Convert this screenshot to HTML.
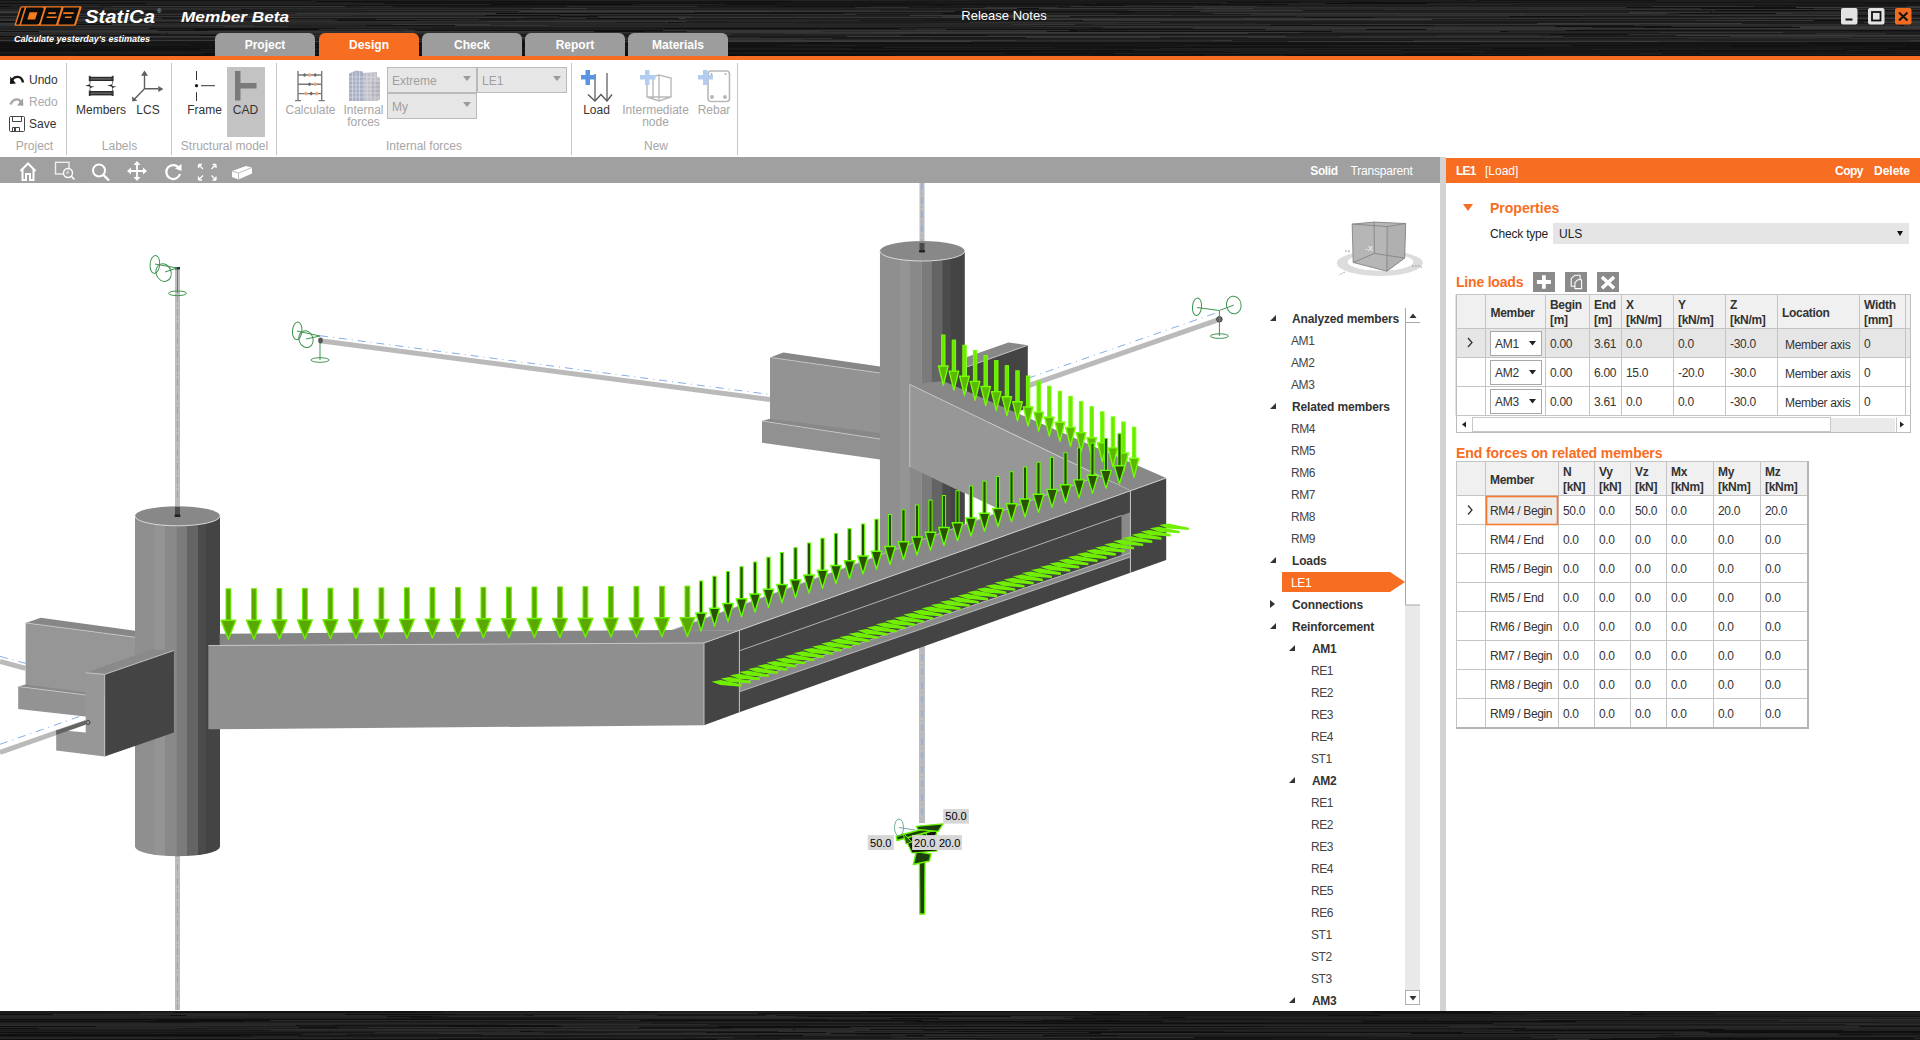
<!DOCTYPE html>
<html><head><meta charset="utf-8">
<style>
*{margin:0;padding:0;box-sizing:border-box}
html,body{width:1920px;height:1040px;overflow:hidden;background:#fff;font-family:"Liberation Sans",sans-serif;font-size:12px;color:#333}
.a{position:absolute}
#title{left:0;top:0;width:1920px;height:56px;overflow:hidden;background:#131313;
background-image:repeating-linear-gradient(180deg,#0d0d0d 0px,#1e1e1e 1px,#0a0a0a 2px,#262626 3px,#111 4px,#070707 5px,#1a1a1a 6px);}
#oline{left:0;top:56px;width:1920px;height:4px;background:#f76d22}
.tab{top:33px;height:23px;width:100px;border-radius:6px 6px 0 0;background:#9d9d9d}
#ribbon{left:0;top:60px;width:1920px;height:97px;background:#fff}
.sep{width:1px;background:#c6c6c6;top:63px;height:92px}
.combo{background:#e6e6e6;border:1px solid #b9b9b9}
#tbar{left:0;top:157px;width:1440px;height:26px;background:#a0a0a0}
#split{left:1440px;top:157px;width:6px;height:854px;background:#d3d3d3}
#rhead{left:1446px;top:158px;width:474px;height:25px;background:#f76d22}
#bottom{left:0;top:1011px;width:1920px;height:29px;overflow:hidden;background:#111;
background-image:repeating-linear-gradient(180deg,#0d0d0d 0px,#1e1e1e 1px,#0a0a0a 2px,#262626 3px,#111 4px,#070707 5px,#1a1a1a 6px);}

</style></head><body>
<div id="title" class="a" style="background:none"><svg class="a" style="left:0;top:0" width="1920" height="56" viewBox="0 0 1920 56" shape-rendering="crispEdges"><rect width="1920" height="56" fill="#101010"/><rect x="417" y="20" width="464" height="1" fill="rgb(27,27,27)"/><rect x="185" y="4" width="434" height="1" fill="rgb(16,16,16)"/><rect x="679" y="32" width="98" height="1" fill="rgb(29,29,29)"/><rect x="1512" y="27" width="131" height="1" fill="rgb(39,39,39)"/><rect x="1538" y="5" width="120" height="1" fill="rgb(18,18,18)"/><rect x="53" y="14" width="466" height="1" fill="rgb(27,27,27)"/><rect x="-10" y="14" width="196" height="1" fill="rgb(42,42,42)"/><rect x="390" y="26" width="180" height="1" fill="rgb(43,43,43)"/><rect x="540" y="35" width="165" height="1" fill="rgb(36,36,36)"/><rect x="199" y="23" width="124" height="1" fill="rgb(27,27,27)"/><rect x="643" y="39" width="568" height="1" fill="rgb(58,58,58)"/><rect x="1086" y="27" width="536" height="1" fill="rgb(53,53,53)"/><rect x="1027" y="23" width="314" height="1" fill="rgb(35,35,35)"/><rect x="799" y="44" width="143" height="1" fill="rgb(23,23,23)"/><rect x="1827" y="33" width="411" height="1" fill="rgb(52,52,52)"/><rect x="99" y="18" width="180" height="1" fill="rgb(56,56,56)"/><rect x="475" y="26" width="410" height="1" fill="rgb(33,33,33)"/><rect x="1527" y="31" width="100" height="1" fill="rgb(28,28,28)"/><rect x="1085" y="48" width="408" height="1" fill="rgb(25,25,25)"/><rect x="1834" y="38" width="527" height="1" fill="rgb(28,28,28)"/><rect x="183" y="53" width="336" height="1" fill="rgb(29,29,29)"/><rect x="66" y="44" width="122" height="1" fill="rgb(23,23,23)"/><rect x="1625" y="41" width="351" height="1" fill="rgb(48,48,48)"/><rect x="1221" y="42" width="83" height="1" fill="rgb(29,29,29)"/><rect x="488" y="22" width="179" height="1" fill="rgb(55,55,55)"/><rect x="693" y="3" width="354" height="1" fill="rgb(19,19,19)"/><rect x="814" y="47" width="467" height="1" fill="rgb(26,26,26)"/><rect x="1833" y="55" width="142" height="1" fill="rgb(18,18,18)"/><rect x="1445" y="28" width="344" height="1" fill="rgb(32,32,32)"/><rect x="1563" y="52" width="345" height="1" fill="rgb(27,27,27)"/><rect x="1358" y="22" width="296" height="1" fill="rgb(33,33,33)"/><rect x="521" y="5" width="214" height="1" fill="rgb(22,22,22)"/><rect x="755" y="42" width="72" height="1" fill="rgb(30,30,30)"/><rect x="546" y="53" width="329" height="1" fill="rgb(23,23,23)"/><rect x="396" y="0" width="489" height="1" fill="rgb(34,34,34)"/><rect x="1105" y="23" width="188" height="1" fill="rgb(56,56,56)"/><rect x="21" y="39" width="527" height="1" fill="rgb(49,49,49)"/><rect x="1434" y="25" width="463" height="1" fill="rgb(30,30,30)"/><rect x="1440" y="30" width="123" height="1" fill="rgb(36,36,36)"/><rect x="655" y="4" width="511" height="1" fill="rgb(20,20,20)"/><rect x="1192" y="7" width="113" height="1" fill="rgb(30,30,30)"/><rect x="419" y="0" width="163" height="1" fill="rgb(28,28,28)"/><rect x="-96" y="39" width="132" height="1" fill="rgb(37,37,37)"/><rect x="1341" y="39" width="212" height="1" fill="rgb(40,40,40)"/><rect x="1291" y="22" width="545" height="1" fill="rgb(31,31,31)"/><rect x="1799" y="7" width="537" height="1" fill="rgb(54,54,54)"/><rect x="1077" y="30" width="147" height="1" fill="rgb(33,33,33)"/><rect x="1203" y="6" width="331" height="1" fill="rgb(54,54,54)"/><rect x="461" y="53" width="588" height="1" fill="rgb(13,13,13)"/><rect x="1281" y="13" width="210" height="1" fill="rgb(58,58,58)"/><rect x="1020" y="1" width="153" height="1" fill="rgb(24,24,24)"/><rect x="1302" y="33" width="231" height="1" fill="rgb(46,46,46)"/><rect x="712" y="49" width="574" height="1" fill="rgb(24,24,24)"/><rect x="713" y="40" width="259" height="1" fill="rgb(39,39,39)"/><rect x="1441" y="52" width="292" height="1" fill="rgb(19,19,19)"/><rect x="1818" y="33" width="424" height="1" fill="rgb(25,25,25)"/><rect x="944" y="1" width="543" height="1" fill="rgb(24,24,24)"/><rect x="1210" y="12" width="517" height="1" fill="rgb(46,46,46)"/><rect x="129" y="23" width="285" height="1" fill="rgb(30,30,30)"/><rect x="1725" y="14" width="261" height="1" fill="rgb(45,45,45)"/><rect x="1776" y="13" width="61" height="1" fill="rgb(54,54,54)"/><rect x="1209" y="41" width="146" height="1" fill="rgb(31,31,31)"/><rect x="616" y="24" width="549" height="1" fill="rgb(35,35,35)"/><rect x="1161" y="27" width="148" height="1" fill="rgb(49,49,49)"/><rect x="1444" y="29" width="146" height="1" fill="rgb(34,34,34)"/><rect x="320" y="10" width="88" height="1" fill="rgb(33,33,33)"/><rect x="1706" y="37" width="209" height="1" fill="rgb(54,54,54)"/><rect x="1235" y="42" width="219" height="1" fill="rgb(17,17,17)"/><rect x="-142" y="1" width="165" height="1" fill="rgb(34,34,34)"/><rect x="370" y="47" width="504" height="1" fill="rgb(19,19,19)"/><rect x="664" y="52" width="88" height="1" fill="rgb(22,22,22)"/><rect x="999" y="13" width="573" height="1" fill="rgb(39,39,39)"/><rect x="1135" y="48" width="325" height="1" fill="rgb(31,31,31)"/><rect x="336" y="26" width="122" height="1" fill="rgb(46,46,46)"/><rect x="1916" y="29" width="490" height="1" fill="rgb(56,56,56)"/><rect x="421" y="8" width="596" height="1" fill="rgb(56,56,56)"/><rect x="1602" y="1" width="247" height="1" fill="rgb(14,14,14)"/><rect x="413" y="49" width="236" height="1" fill="rgb(18,18,18)"/><rect x="292" y="30" width="123" height="1" fill="rgb(44,44,44)"/><rect x="1776" y="43" width="168" height="1" fill="rgb(14,14,14)"/><rect x="583" y="15" width="343" height="1" fill="rgb(26,26,26)"/><rect x="200" y="49" width="579" height="1" fill="rgb(28,28,28)"/><rect x="-86" y="35" width="124" height="1" fill="rgb(52,52,52)"/><rect x="1870" y="20" width="584" height="1" fill="rgb(36,36,36)"/><rect x="935" y="44" width="523" height="1" fill="rgb(30,30,30)"/><rect x="1758" y="34" width="579" height="1" fill="rgb(39,39,39)"/><rect x="863" y="44" width="267" height="1" fill="rgb(28,28,28)"/><rect x="1506" y="8" width="184" height="1" fill="rgb(49,49,49)"/><rect x="1094" y="28" width="134" height="1" fill="rgb(39,39,39)"/><rect x="99" y="27" width="277" height="1" fill="rgb(43,43,43)"/><rect x="301" y="50" width="218" height="1" fill="rgb(25,25,25)"/><rect x="836" y="9" width="200" height="1" fill="rgb(53,53,53)"/><rect x="185" y="14" width="467" height="1" fill="rgb(55,55,55)"/><rect x="716" y="10" width="225" height="1" fill="rgb(51,51,51)"/><rect x="1454" y="32" width="407" height="1" fill="rgb(50,50,50)"/><rect x="1260" y="12" width="386" height="1" fill="rgb(29,29,29)"/><rect x="1298" y="46" width="79" height="1" fill="rgb(24,24,24)"/><rect x="1678" y="35" width="511" height="1" fill="rgb(25,25,25)"/><rect x="1157" y="24" width="589" height="1" fill="rgb(42,42,42)"/><rect x="63" y="32" width="175" height="1" fill="rgb(38,38,38)"/><rect x="144" y="6" width="331" height="1" fill="rgb(41,41,41)"/><rect x="543" y="2" width="336" height="1" fill="rgb(19,19,19)"/><rect x="1529" y="52" width="324" height="1" fill="rgb(26,26,26)"/><rect x="1908" y="9" width="566" height="1" fill="rgb(44,44,44)"/><rect x="943" y="5" width="118" height="1" fill="rgb(21,21,21)"/><rect x="96" y="27" width="335" height="1" fill="rgb(25,25,25)"/><rect x="162" y="40" width="326" height="1" fill="rgb(29,29,29)"/><rect x="710" y="38" width="128" height="1" fill="rgb(40,40,40)"/><rect x="298" y="55" width="524" height="1" fill="rgb(13,13,13)"/><rect x="1511" y="21" width="334" height="1" fill="rgb(32,32,32)"/><rect x="776" y="2" width="172" height="1" fill="rgb(20,20,20)"/><rect x="6" y="16" width="245" height="1" fill="rgb(36,36,36)"/><rect x="1049" y="19" width="270" height="1" fill="rgb(42,42,42)"/><rect x="1848" y="28" width="242" height="1" fill="rgb(41,41,41)"/><rect x="-126" y="22" width="316" height="1" fill="rgb(26,26,26)"/><rect x="-125" y="0" width="577" height="1" fill="rgb(21,21,21)"/><rect x="1744" y="32" width="311" height="1" fill="rgb(52,52,52)"/><rect x="1570" y="6" width="566" height="1" fill="rgb(58,58,58)"/><rect x="1410" y="53" width="578" height="1" fill="rgb(23,23,23)"/><rect x="681" y="44" width="295" height="1" fill="rgb(24,24,24)"/><rect x="372" y="12" width="474" height="1" fill="rgb(46,46,46)"/><rect x="331" y="3" width="74" height="1" fill="rgb(16,16,16)"/><rect x="846" y="40" width="501" height="1" fill="rgb(34,34,34)"/><rect x="146" y="3" width="450" height="1" fill="rgb(33,33,33)"/><rect x="954" y="42" width="308" height="1" fill="rgb(23,23,23)"/><rect x="1681" y="2" width="249" height="1" fill="rgb(20,20,20)"/><rect x="1626" y="17" width="63" height="1" fill="rgb(40,40,40)"/><rect x="1147" y="23" width="391" height="1" fill="rgb(39,39,39)"/><rect x="1067" y="2" width="283" height="1" fill="rgb(27,27,27)"/><rect x="-196" y="11" width="403" height="1" fill="rgb(48,48,48)"/><rect x="1744" y="5" width="345" height="1" fill="rgb(33,33,33)"/><rect x="623" y="41" width="314" height="1" fill="rgb(56,56,56)"/><rect x="-180" y="49" width="153" height="1" fill="rgb(22,22,22)"/><rect x="167" y="52" width="207" height="1" fill="rgb(26,26,26)"/><rect x="-30" y="37" width="463" height="1" fill="rgb(25,25,25)"/><rect x="1046" y="19" width="298" height="1" fill="rgb(29,29,29)"/><rect x="435" y="37" width="458" height="1" fill="rgb(44,44,44)"/><rect x="1824" y="46" width="213" height="1" fill="rgb(23,23,23)"/><rect x="392" y="46" width="104" height="1" fill="rgb(30,30,30)"/><rect x="1558" y="40" width="577" height="1" fill="rgb(32,32,32)"/><rect x="1865" y="33" width="76" height="1" fill="rgb(38,38,38)"/><rect x="-73" y="5" width="102" height="1" fill="rgb(19,19,19)"/><rect x="1277" y="40" width="167" height="1" fill="rgb(48,48,48)"/><rect x="1648" y="53" width="111" height="1" fill="rgb(13,13,13)"/><rect x="801" y="40" width="561" height="1" fill="rgb(40,40,40)"/><rect x="1671" y="0" width="131" height="1" fill="rgb(33,33,33)"/><rect x="176" y="34" width="598" height="1" fill="rgb(28,28,28)"/><rect x="1740" y="47" width="318" height="1" fill="rgb(15,15,15)"/><rect x="887" y="54" width="300" height="1" fill="rgb(20,20,20)"/><rect x="1685" y="14" width="565" height="1" fill="rgb(48,48,48)"/><rect x="1762" y="4" width="354" height="1" fill="rgb(15,15,15)"/><rect x="612" y="39" width="139" height="1" fill="rgb(33,33,33)"/><rect x="840" y="21" width="371" height="1" fill="rgb(32,32,32)"/><rect x="1775" y="0" width="122" height="1" fill="rgb(33,33,33)"/><rect x="207" y="17" width="282" height="1" fill="rgb(55,55,55)"/><rect x="1915" y="18" width="352" height="1" fill="rgb(53,53,53)"/><rect x="1710" y="29" width="181" height="1" fill="rgb(36,36,36)"/><rect x="151" y="19" width="544" height="1" fill="rgb(25,25,25)"/><rect x="1679" y="18" width="138" height="1" fill="rgb(56,56,56)"/><rect x="900" y="28" width="456" height="1" fill="rgb(37,37,37)"/><rect x="105" y="13" width="152" height="1" fill="rgb(33,33,33)"/><rect x="872" y="47" width="428" height="1" fill="rgb(17,17,17)"/><rect x="1883" y="38" width="346" height="1" fill="rgb(31,31,31)"/><rect x="1295" y="45" width="296" height="1" fill="rgb(30,30,30)"/><rect x="1414" y="31" width="85" height="1" fill="rgb(34,34,34)"/><rect x="1813" y="0" width="521" height="1" fill="rgb(29,29,29)"/><rect x="376" y="19" width="486" height="1" fill="rgb(46,46,46)"/><rect x="1094" y="24" width="183" height="1" fill="rgb(45,45,45)"/><rect x="1129" y="0" width="406" height="1" fill="rgb(29,29,29)"/><rect x="601" y="7" width="72" height="1" fill="rgb(42,42,42)"/><rect x="1324" y="16" width="126" height="1" fill="rgb(49,49,49)"/><rect x="112" y="24" width="429" height="1" fill="rgb(51,51,51)"/><rect x="927" y="48" width="109" height="1" fill="rgb(22,22,22)"/><rect x="11" y="6" width="352" height="1" fill="rgb(33,33,33)"/><rect x="888" y="15" width="506" height="1" fill="rgb(56,56,56)"/><rect x="577" y="20" width="442" height="1" fill="rgb(51,51,51)"/><rect x="1438" y="1" width="268" height="1" fill="rgb(17,17,17)"/><rect x="1482" y="3" width="521" height="1" fill="rgb(19,19,19)"/><rect x="972" y="41" width="557" height="1" fill="rgb(27,27,27)"/><rect x="321" y="35" width="234" height="1" fill="rgb(54,54,54)"/><rect x="1207" y="26" width="348" height="1" fill="rgb(43,43,43)"/><rect x="865" y="16" width="475" height="1" fill="rgb(39,39,39)"/><rect x="1779" y="19" width="463" height="1" fill="rgb(31,31,31)"/><rect x="462" y="10" width="136" height="1" fill="rgb(37,37,37)"/><rect x="1836" y="32" width="285" height="1" fill="rgb(52,52,52)"/><rect x="1643" y="21" width="497" height="1" fill="rgb(32,32,32)"/><rect x="588" y="35" width="309" height="1" fill="rgb(29,29,29)"/><rect x="1200" y="11" width="153" height="1" fill="rgb(44,44,44)"/><rect x="1308" y="15" width="324" height="1" fill="rgb(36,36,36)"/><rect x="1490" y="1" width="452" height="1" fill="rgb(30,30,30)"/><rect x="660" y="47" width="445" height="1" fill="rgb(22,22,22)"/><rect x="54" y="21" width="570" height="1" fill="rgb(41,41,41)"/><rect x="1275" y="36" width="188" height="1" fill="rgb(56,56,56)"/><rect x="684" y="33" width="154" height="1" fill="rgb(41,41,41)"/><rect x="1375" y="15" width="469" height="1" fill="rgb(52,52,52)"/><rect x="1078" y="27" width="82" height="1" fill="rgb(32,32,32)"/><rect x="1541" y="2" width="544" height="1" fill="rgb(33,33,33)"/><rect x="99" y="0" width="460" height="1" fill="rgb(34,34,34)"/><rect x="1717" y="54" width="519" height="1" fill="rgb(21,21,21)"/><rect x="246" y="50" width="289" height="1" fill="rgb(18,18,18)"/><rect x="246" y="9" width="528" height="1" fill="rgb(29,29,29)"/><rect x="-39" y="35" width="61" height="1" fill="rgb(32,32,32)"/><rect x="-47" y="14" width="371" height="1" fill="rgb(32,32,32)"/><rect x="831" y="40" width="600" height="1" fill="rgb(51,51,51)"/><rect x="259" y="44" width="161" height="1" fill="rgb(15,15,15)"/><rect x="585" y="19" width="457" height="1" fill="rgb(40,40,40)"/><rect x="-196" y="14" width="70" height="1" fill="rgb(58,58,58)"/><rect x="1686" y="19" width="345" height="1" fill="rgb(44,44,44)"/><rect x="792" y="41" width="546" height="1" fill="rgb(57,57,57)"/><rect x="811" y="15" width="89" height="1" fill="rgb(50,50,50)"/><rect x="1059" y="45" width="116" height="1" fill="rgb(13,13,13)"/><rect x="1841" y="12" width="490" height="1" fill="rgb(29,29,29)"/><rect x="733" y="16" width="494" height="1" fill="rgb(47,47,47)"/><rect x="1819" y="14" width="94" height="1" fill="rgb(45,45,45)"/><rect x="1522" y="45" width="431" height="1" fill="rgb(26,26,26)"/><rect x="-173" y="12" width="359" height="1" fill="rgb(56,56,56)"/><rect x="640" y="4" width="567" height="1" fill="rgb(21,21,21)"/><rect x="594" y="19" width="296" height="1" fill="rgb(53,53,53)"/><rect x="885" y="14" width="362" height="1" fill="rgb(30,30,30)"/><rect x="1830" y="39" width="251" height="1" fill="rgb(38,38,38)"/><rect x="1508" y="31" width="117" height="1" fill="rgb(33,33,33)"/><rect x="22" y="25" width="278" height="1" fill="rgb(25,25,25)"/><rect x="381" y="38" width="485" height="1" fill="rgb(27,27,27)"/><rect x="46" y="45" width="248" height="1" fill="rgb(26,26,26)"/><rect x="1086" y="28" width="175" height="1" fill="rgb(29,29,29)"/><rect x="1148" y="10" width="255" height="1" fill="rgb(35,35,35)"/><rect x="1715" y="41" width="92" height="1" fill="rgb(43,43,43)"/><rect x="1350" y="42" width="442" height="1" fill="rgb(24,24,24)"/><rect x="493" y="28" width="171" height="1" fill="rgb(24,24,24)"/><rect x="946" y="5" width="142" height="1" fill="rgb(27,27,27)"/><rect x="306" y="26" width="272" height="1" fill="rgb(48,48,48)"/><rect x="1064" y="22" width="502" height="1" fill="rgb(29,29,29)"/><rect x="1739" y="3" width="260" height="1" fill="rgb(28,28,28)"/><rect x="1628" y="34" width="257" height="1" fill="rgb(44,44,44)"/><rect x="1743" y="23" width="91" height="1" fill="rgb(50,50,50)"/><rect x="1457" y="15" width="101" height="1" fill="rgb(48,48,48)"/><rect x="1700" y="2" width="124" height="1" fill="rgb(16,16,16)"/><rect x="598" y="16" width="124" height="1" fill="rgb(45,45,45)"/><rect x="915" y="23" width="403" height="1" fill="rgb(26,26,26)"/><rect x="1096" y="16" width="342" height="1" fill="rgb(43,43,43)"/><rect x="67" y="0" width="84" height="1" fill="rgb(22,22,22)"/><rect x="1746" y="6" width="536" height="1" fill="rgb(48,48,48)"/><rect x="828" y="50" width="500" height="1" fill="rgb(30,30,30)"/><rect x="1833" y="8" width="247" height="1" fill="rgb(24,24,24)"/><rect x="1042" y="51" width="214" height="1" fill="rgb(21,21,21)"/><rect x="1108" y="20" width="531" height="1" fill="rgb(47,47,47)"/><rect x="123" y="50" width="584" height="1" fill="rgb(19,19,19)"/><rect x="455" y="25" width="313" height="1" fill="rgb(50,50,50)"/><rect x="-62" y="4" width="553" height="1" fill="rgb(34,34,34)"/><rect x="458" y="20" width="496" height="1" fill="rgb(30,30,30)"/><rect x="884" y="4" width="146" height="1" fill="rgb(22,22,22)"/><rect x="1524" y="6" width="570" height="1" fill="rgb(52,52,52)"/><rect x="759" y="11" width="196" height="1" fill="rgb(50,50,50)"/><rect x="762" y="29" width="184" height="1" fill="rgb(42,42,42)"/><rect x="944" y="18" width="334" height="1" fill="rgb(47,47,47)"/><rect x="866" y="16" width="263" height="1" fill="rgb(52,52,52)"/><rect x="560" y="15" width="311" height="1" fill="rgb(39,39,39)"/><rect x="952" y="9" width="252" height="1" fill="rgb(44,44,44)"/><rect x="1422" y="4" width="317" height="1" fill="rgb(23,23,23)"/><rect x="747" y="32" width="162" height="1" fill="rgb(53,53,53)"/><rect x="219" y="2" width="64" height="1" fill="rgb(32,32,32)"/><rect x="746" y="52" width="519" height="1" fill="rgb(25,25,25)"/><rect x="1002" y="2" width="298" height="1" fill="rgb(18,18,18)"/><rect x="576" y="3" width="258" height="1" fill="rgb(16,16,16)"/><rect x="1899" y="23" width="242" height="1" fill="rgb(52,52,52)"/><rect x="864" y="38" width="66" height="1" fill="rgb(30,30,30)"/><rect x="1232" y="40" width="282" height="1" fill="rgb(26,26,26)"/><rect x="1192" y="23" width="204" height="1" fill="rgb(26,26,26)"/><rect x="844" y="13" width="99" height="1" fill="rgb(37,37,37)"/><rect x="-154" y="52" width="395" height="1" fill="rgb(27,27,27)"/><rect x="1322" y="43" width="249" height="1" fill="rgb(23,23,23)"/><rect x="633" y="4" width="92" height="1" fill="rgb(33,33,33)"/><rect x="1780" y="35" width="124" height="1" fill="rgb(50,50,50)"/><rect x="1419" y="6" width="218" height="1" fill="rgb(58,58,58)"/><rect x="470" y="5" width="467" height="1" fill="rgb(24,24,24)"/><rect x="960" y="26" width="374" height="1" fill="rgb(50,50,50)"/><rect x="1079" y="3" width="425" height="1" fill="rgb(30,30,30)"/><rect x="-126" y="26" width="432" height="1" fill="rgb(36,36,36)"/><rect x="1458" y="25" width="268" height="1" fill="rgb(24,24,24)"/><rect x="441" y="27" width="493" height="1" fill="rgb(31,31,31)"/><rect x="170" y="52" width="475" height="1" fill="rgb(25,25,25)"/><rect x="465" y="29" width="193" height="1" fill="rgb(24,24,24)"/><rect x="383" y="3" width="466" height="1" fill="rgb(17,17,17)"/><rect x="1318" y="36" width="576" height="1" fill="rgb(34,34,34)"/><rect x="1225" y="9" width="350" height="1" fill="rgb(34,34,34)"/><rect x="503" y="33" width="128" height="1" fill="rgb(30,30,30)"/><rect x="1809" y="24" width="262" height="1" fill="rgb(43,43,43)"/><rect x="-22" y="8" width="554" height="1" fill="rgb(44,44,44)"/><rect x="1388" y="3" width="148" height="1" fill="rgb(20,20,20)"/><rect x="709" y="40" width="474" height="1" fill="rgb(36,36,36)"/><rect x="1737" y="53" width="247" height="1" fill="rgb(20,20,20)"/><rect x="1437" y="2" width="590" height="1" fill="rgb(20,20,20)"/><rect x="1271" y="24" width="186" height="1" fill="rgb(33,33,33)"/><rect x="588" y="15" width="102" height="1" fill="rgb(26,26,26)"/><rect x="1127" y="42" width="180" height="1" fill="rgb(26,26,26)"/><rect x="1666" y="38" width="373" height="1" fill="rgb(50,50,50)"/><rect x="820" y="19" width="495" height="1" fill="rgb(48,48,48)"/><rect x="1305" y="42" width="517" height="1" fill="rgb(30,30,30)"/><rect x="532" y="28" width="83" height="1" fill="rgb(24,24,24)"/><rect x="1804" y="39" width="536" height="1" fill="rgb(39,39,39)"/><rect x="1677" y="28" width="243" height="1" fill="rgb(54,54,54)"/><rect x="238" y="25" width="128" height="1" fill="rgb(32,32,32)"/><rect x="1563" y="22" width="434" height="1" fill="rgb(29,29,29)"/><rect x="1610" y="51" width="576" height="1" fill="rgb(30,30,30)"/><rect x="-34" y="42" width="101" height="1" fill="rgb(17,17,17)"/><rect x="1085" y="5" width="583" height="1" fill="rgb(17,17,17)"/><rect x="1864" y="3" width="446" height="1" fill="rgb(19,19,19)"/><rect x="71" y="1" width="172" height="1" fill="rgb(21,21,21)"/><rect x="1814" y="8" width="354" height="1" fill="rgb(34,34,34)"/><rect x="705" y="43" width="127" height="1" fill="rgb(25,25,25)"/><rect x="833" y="39" width="222" height="1" fill="rgb(44,44,44)"/><rect x="926" y="39" width="527" height="1" fill="rgb(33,33,33)"/><rect x="1857" y="16" width="551" height="1" fill="rgb(37,37,37)"/><rect x="876" y="37" width="578" height="1" fill="rgb(39,39,39)"/><rect x="1324" y="20" width="97" height="1" fill="rgb(36,36,36)"/><rect x="1452" y="11" width="225" height="1" fill="rgb(41,41,41)"/><rect x="1142" y="43" width="445" height="1" fill="rgb(18,18,18)"/><rect x="882" y="50" width="177" height="1" fill="rgb(31,31,31)"/><rect x="1273" y="3" width="523" height="1" fill="rgb(34,34,34)"/><rect x="228" y="37" width="318" height="1" fill="rgb(58,58,58)"/><rect x="1414" y="40" width="440" height="1" fill="rgb(40,40,40)"/><rect x="1311" y="24" width="209" height="1" fill="rgb(47,47,47)"/><rect x="133" y="21" width="512" height="1" fill="rgb(38,38,38)"/><rect x="-3" y="11" width="363" height="1" fill="rgb(57,57,57)"/><rect x="1070" y="16" width="380" height="1" fill="rgb(24,24,24)"/><rect x="-62" y="47" width="286" height="1" fill="rgb(18,18,18)"/><rect x="1570" y="18" width="487" height="1" fill="rgb(56,56,56)"/><rect x="-5" y="23" width="195" height="1" fill="rgb(55,55,55)"/><rect x="-14" y="14" width="82" height="1" fill="rgb(27,27,27)"/><rect x="1253" y="0" width="371" height="1" fill="rgb(18,18,18)"/><rect x="1262" y="33" width="289" height="1" fill="rgb(50,50,50)"/><rect x="1033" y="37" width="196" height="1" fill="rgb(37,37,37)"/><rect x="1745" y="23" width="222" height="1" fill="rgb(32,32,32)"/><rect x="797" y="0" width="212" height="1" fill="rgb(31,31,31)"/><rect x="60" y="6" width="208" height="1" fill="rgb(41,41,41)"/><rect x="882" y="25" width="71" height="1" fill="rgb(27,27,27)"/><rect x="1234" y="41" width="514" height="1" fill="rgb(57,57,57)"/><rect x="1818" y="46" width="314" height="1" fill="rgb(18,18,18)"/><rect x="-20" y="0" width="123" height="1" fill="rgb(34,34,34)"/><rect x="1462" y="1" width="250" height="1" fill="rgb(23,23,23)"/><rect x="39" y="10" width="167" height="1" fill="rgb(24,24,24)"/><rect x="607" y="39" width="205" height="1" fill="rgb(50,50,50)"/><rect x="1876" y="12" width="485" height="1" fill="rgb(35,35,35)"/><rect x="1067" y="32" width="125" height="1" fill="rgb(43,43,43)"/><rect x="-2" y="40" width="549" height="1" fill="rgb(58,58,58)"/><rect x="1336" y="0" width="507" height="1" fill="rgb(31,31,31)"/><rect x="1653" y="5" width="239" height="1" fill="rgb(22,22,22)"/><rect x="870" y="6" width="297" height="1" fill="rgb(26,26,26)"/><rect x="1174" y="7" width="329" height="1" fill="rgb(27,27,27)"/><rect x="1586" y="17" width="595" height="1" fill="rgb(40,40,40)"/><rect x="688" y="18" width="147" height="1" fill="rgb(56,56,56)"/><rect x="495" y="0" width="326" height="1" fill="rgb(23,23,23)"/><rect x="630" y="53" width="223" height="1" fill="rgb(24,24,24)"/><rect x="1392" y="12" width="396" height="1" fill="rgb(39,39,39)"/><rect x="1723" y="24" width="543" height="1" fill="rgb(57,57,57)"/><rect x="-174" y="44" width="87" height="1" fill="rgb(28,28,28)"/><rect x="757" y="46" width="375" height="1" fill="rgb(20,20,20)"/><rect x="118" y="25" width="235" height="1" fill="rgb(33,33,33)"/><rect x="-90" y="2" width="174" height="1" fill="rgb(18,18,18)"/><rect x="462" y="39" width="413" height="1" fill="rgb(33,33,33)"/><rect x="-83" y="44" width="91" height="1" fill="rgb(14,14,14)"/><rect x="-26" y="8" width="129" height="1" fill="rgb(26,26,26)"/><rect x="1288" y="4" width="264" height="1" fill="rgb(34,34,34)"/><rect x="70" y="42" width="453" height="1" fill="rgb(16,16,16)"/><rect x="642" y="15" width="268" height="1" fill="rgb(31,31,31)"/><rect x="-59" y="2" width="149" height="1" fill="rgb(25,25,25)"/><rect x="209" y="30" width="195" height="1" fill="rgb(30,30,30)"/><rect x="639" y="50" width="361" height="1" fill="rgb(24,24,24)"/><rect x="1535" y="21" width="327" height="1" fill="rgb(25,25,25)"/><rect x="851" y="22" width="349" height="1" fill="rgb(27,27,27)"/><rect x="1307" y="45" width="388" height="1" fill="rgb(30,30,30)"/><rect x="978" y="30" width="91" height="1" fill="rgb(50,50,50)"/><rect x="1587" y="1" width="591" height="1" fill="rgb(18,18,18)"/><rect x="1720" y="22" width="109" height="1" fill="rgb(58,58,58)"/><rect x="687" y="36" width="153" height="1" fill="rgb(42,42,42)"/><rect x="1586" y="10" width="61" height="1" fill="rgb(57,57,57)"/><rect x="981" y="12" width="115" height="1" fill="rgb(24,24,24)"/><rect x="1810" y="22" width="157" height="1" fill="rgb(55,55,55)"/><rect x="555" y="44" width="566" height="1" fill="rgb(25,25,25)"/><rect x="1910" y="53" width="326" height="1" fill="rgb(18,18,18)"/><rect x="679" y="18" width="297" height="1" fill="rgb(55,55,55)"/><rect x="250" y="10" width="142" height="1" fill="rgb(55,55,55)"/><rect x="228" y="50" width="394" height="1" fill="rgb(25,25,25)"/><rect x="1443" y="6" width="464" height="1" fill="rgb(29,29,29)"/><rect x="-97" y="27" width="440" height="1" fill="rgb(37,37,37)"/><rect x="878" y="19" width="498" height="1" fill="rgb(58,58,58)"/><rect x="500" y="32" width="448" height="1" fill="rgb(38,38,38)"/><rect x="319" y="29" width="94" height="1" fill="rgb(46,46,46)"/><rect x="1138" y="37" width="594" height="1" fill="rgb(33,33,33)"/><rect x="1644" y="55" width="391" height="1" fill="rgb(18,18,18)"/><rect x="1597" y="29" width="323" height="1" fill="rgb(38,38,38)"/><rect x="1168" y="8" width="533" height="1" fill="rgb(39,39,39)"/><rect x="584" y="32" width="333" height="1" fill="rgb(43,43,43)"/><rect x="433" y="48" width="219" height="1" fill="rgb(21,21,21)"/><rect x="1137" y="46" width="594" height="1" fill="rgb(25,25,25)"/><rect x="767" y="10" width="395" height="1" fill="rgb(36,36,36)"/><rect x="216" y="16" width="228" height="1" fill="rgb(30,30,30)"/><rect x="1373" y="12" width="214" height="1" fill="rgb(33,33,33)"/><rect x="1037" y="50" width="364" height="1" fill="rgb(28,28,28)"/><rect x="603" y="17" width="171" height="1" fill="rgb(30,30,30)"/><rect x="645" y="17" width="457" height="1" fill="rgb(53,53,53)"/><rect x="-149" y="2" width="468" height="1" fill="rgb(30,30,30)"/><rect x="711" y="44" width="572" height="1" fill="rgb(23,23,23)"/><rect x="-110" y="29" width="205" height="1" fill="rgb(40,40,40)"/><rect x="1457" y="38" width="65" height="1" fill="rgb(39,39,39)"/><rect x="1561" y="54" width="491" height="1" fill="rgb(20,20,20)"/><rect x="736" y="42" width="245" height="1" fill="rgb(17,17,17)"/><rect x="1571" y="29" width="380" height="1" fill="rgb(40,40,40)"/><rect x="200" y="40" width="489" height="1" fill="rgb(39,39,39)"/><rect x="1438" y="50" width="220" height="1" fill="rgb(22,22,22)"/><rect x="1534" y="54" width="554" height="1" fill="rgb(29,29,29)"/><rect x="1476" y="1" width="590" height="1" fill="rgb(21,21,21)"/><rect x="1143" y="41" width="70" height="1" fill="rgb(48,48,48)"/><rect x="1806" y="53" width="168" height="1" fill="rgb(14,14,14)"/><rect x="692" y="16" width="224" height="1" fill="rgb(36,36,36)"/><rect x="1226" y="33" width="163" height="1" fill="rgb(53,53,53)"/><rect x="639" y="34" width="547" height="1" fill="rgb(56,56,56)"/><rect x="1315" y="1" width="594" height="1" fill="rgb(27,27,27)"/><rect x="1671" y="26" width="275" height="1" fill="rgb(35,35,35)"/><rect x="1904" y="25" width="185" height="1" fill="rgb(46,46,46)"/><rect x="31" y="40" width="318" height="1" fill="rgb(41,41,41)"/><rect x="1437" y="24" width="122" height="1" fill="rgb(24,24,24)"/><rect x="1514" y="4" width="490" height="1" fill="rgb(27,27,27)"/><rect x="886" y="37" width="171" height="1" fill="rgb(38,38,38)"/><rect x="1440" y="19" width="599" height="1" fill="rgb(38,38,38)"/><rect x="1405" y="51" width="533" height="1" fill="rgb(20,20,20)"/><rect x="329" y="10" width="130" height="1" fill="rgb(36,36,36)"/><rect x="725" y="30" width="209" height="1" fill="rgb(46,46,46)"/><rect x="1492" y="42" width="539" height="1" fill="rgb(23,23,23)"/><rect x="312" y="48" width="540" height="1" fill="rgb(25,25,25)"/><rect x="743" y="50" width="333" height="1" fill="rgb(26,26,26)"/><rect x="838" y="43" width="496" height="1" fill="rgb(19,19,19)"/><rect x="-189" y="30" width="347" height="1" fill="rgb(46,46,46)"/><rect x="1036" y="15" width="388" height="1" fill="rgb(54,54,54)"/><rect x="1555" y="31" width="147" height="1" fill="rgb(47,47,47)"/><rect x="1041" y="9" width="454" height="1" fill="rgb(27,27,27)"/><rect x="1129" y="5" width="203" height="1" fill="rgb(34,34,34)"/><rect x="1213" y="53" width="75" height="1" fill="rgb(13,13,13)"/><rect x="94" y="13" width="360" height="1" fill="rgb(40,40,40)"/><rect x="215" y="38" width="206" height="1" fill="rgb(38,38,38)"/><rect x="1651" y="11" width="414" height="1" fill="rgb(33,33,33)"/><rect x="1448" y="13" width="231" height="1" fill="rgb(29,29,29)"/><rect x="1016" y="42" width="262" height="1" fill="rgb(30,30,30)"/><rect x="672" y="44" width="140" height="1" fill="rgb(28,28,28)"/><rect x="279" y="42" width="181" height="1" fill="rgb(22,22,22)"/><rect x="759" y="26" width="202" height="1" fill="rgb(54,54,54)"/><rect x="39" y="31" width="555" height="1" fill="rgb(53,53,53)"/><rect x="1812" y="9" width="312" height="1" fill="rgb(55,55,55)"/><rect x="-173" y="10" width="224" height="1" fill="rgb(44,44,44)"/><rect x="1838" y="29" width="363" height="1" fill="rgb(53,53,53)"/><rect x="1544" y="23" width="488" height="1" fill="rgb(28,28,28)"/><rect x="1276" y="11" width="89" height="1" fill="rgb(25,25,25)"/><rect x="-13" y="39" width="398" height="1" fill="rgb(30,30,30)"/><rect x="1783" y="32" width="556" height="1" fill="rgb(33,33,33)"/><rect x="673" y="2" width="485" height="1" fill="rgb(19,19,19)"/><rect x="186" y="21" width="434" height="1" fill="rgb(45,45,45)"/><rect x="663" y="30" width="350" height="1" fill="rgb(51,51,51)"/><rect x="1530" y="21" width="317" height="1" fill="rgb(27,27,27)"/><rect x="984" y="52" width="359" height="1" fill="rgb(25,25,25)"/><rect x="1822" y="52" width="473" height="1" fill="rgb(24,24,24)"/><rect x="912" y="32" width="578" height="1" fill="rgb(46,46,46)"/><rect x="1816" y="13" width="180" height="1" fill="rgb(45,45,45)"/><rect x="1098" y="12" width="366" height="1" fill="rgb(32,32,32)"/><rect x="158" y="37" width="101" height="1" fill="rgb(49,49,49)"/><rect x="1463" y="46" width="110" height="1" fill="rgb(26,26,26)"/><rect x="244" y="19" width="66" height="1" fill="rgb(26,26,26)"/><rect x="1745" y="12" width="121" height="1" fill="rgb(56,56,56)"/><rect x="1340" y="34" width="210" height="1" fill="rgb(29,29,29)"/><rect x="-39" y="13" width="528" height="1" fill="rgb(35,35,35)"/><rect x="542" y="6" width="97" height="1" fill="rgb(50,50,50)"/><rect x="212" y="49" width="73" height="1" fill="rgb(25,25,25)"/><rect x="368" y="55" width="376" height="1" fill="rgb(22,22,22)"/><rect x="1037" y="55" width="249" height="1" fill="rgb(27,27,27)"/><rect x="1104" y="2" width="80" height="1" fill="rgb(30,30,30)"/><rect x="23" y="36" width="569" height="1" fill="rgb(57,57,57)"/><rect x="286" y="2" width="491" height="1" fill="rgb(29,29,29)"/><rect x="75" y="28" width="74" height="1" fill="rgb(48,48,48)"/><rect x="436" y="38" width="546" height="1" fill="rgb(50,50,50)"/><rect x="217" y="35" width="144" height="1" fill="rgb(54,54,54)"/><rect x="421" y="13" width="75" height="1" fill="rgb(51,51,51)"/><rect x="-162" y="0" width="184" height="1" fill="rgb(17,17,17)"/><rect x="297" y="13" width="192" height="1" fill="rgb(54,54,54)"/><rect x="928" y="1" width="308" height="1" fill="rgb(31,31,31)"/><rect x="567" y="46" width="111" height="1" fill="rgb(25,25,25)"/><rect x="393" y="49" width="146" height="1" fill="rgb(23,23,23)"/><rect x="1840" y="40" width="531" height="1" fill="rgb(40,40,40)"/><rect x="-70" y="3" width="71" height="1" fill="rgb(16,16,16)"/><rect x="126" y="0" width="458" height="1" fill="rgb(25,25,25)"/><rect x="479" y="19" width="558" height="1" fill="rgb(27,27,27)"/><rect x="1305" y="20" width="509" height="1" fill="rgb(54,54,54)"/><rect x="481" y="43" width="208" height="1" fill="rgb(17,17,17)"/><rect x="471" y="23" width="487" height="1" fill="rgb(54,54,54)"/><rect x="1654" y="24" width="338" height="1" fill="rgb(45,45,45)"/><rect x="946" y="18" width="122" height="1" fill="rgb(45,45,45)"/><rect x="-137" y="55" width="214" height="1" fill="rgb(23,23,23)"/><rect x="1555" y="37" width="312" height="1" fill="rgb(48,48,48)"/><rect x="1340" y="24" width="299" height="1" fill="rgb(52,52,52)"/><rect x="-194" y="18" width="389" height="1" fill="rgb(40,40,40)"/><rect x="1530" y="17" width="221" height="1" fill="rgb(26,26,26)"/><rect x="376" y="18" width="210" height="1" fill="rgb(41,41,41)"/><rect x="1847" y="54" width="415" height="1" fill="rgb(31,31,31)"/><rect x="1785" y="5" width="450" height="1" fill="rgb(21,21,21)"/><rect x="758" y="50" width="376" height="1" fill="rgb(14,14,14)"/><rect x="1419" y="43" width="536" height="1" fill="rgb(20,20,20)"/><rect x="-162" y="16" width="454" height="1" fill="rgb(53,53,53)"/><rect x="159" y="34" width="423" height="1" fill="rgb(28,28,28)"/><rect x="1430" y="14" width="593" height="1" fill="rgb(40,40,40)"/><rect x="1114" y="53" width="548" height="1" fill="rgb(30,30,30)"/><rect x="626" y="37" width="253" height="1" fill="rgb(37,37,37)"/><rect x="177" y="12" width="245" height="1" fill="rgb(42,42,42)"/><rect x="1270" y="23" width="472" height="1" fill="rgb(57,57,57)"/><rect x="410" y="54" width="312" height="1" fill="rgb(14,14,14)"/><rect x="1332" y="31" width="168" height="1" fill="rgb(47,47,47)"/><rect x="1698" y="40" width="143" height="1" fill="rgb(33,33,33)"/><rect x="-76" y="20" width="413" height="1" fill="rgb(41,41,41)"/><rect x="-116" y="33" width="156" height="1" fill="rgb(26,26,26)"/><rect x="1791" y="13" width="278" height="1" fill="rgb(40,40,40)"/><rect x="946" y="49" width="496" height="1" fill="rgb(16,16,16)"/><rect x="336" y="28" width="320" height="1" fill="rgb(26,26,26)"/><rect x="623" y="21" width="245" height="1" fill="rgb(48,48,48)"/><rect x="-88" y="5" width="112" height="1" fill="rgb(15,15,15)"/><rect x="1314" y="35" width="529" height="1" fill="rgb(55,55,55)"/><rect x="62" y="54" width="466" height="1" fill="rgb(17,17,17)"/><rect x="168" y="45" width="323" height="1" fill="rgb(24,24,24)"/><rect x="755" y="36" width="151" height="1" fill="rgb(56,56,56)"/><rect x="548" y="25" width="519" height="1" fill="rgb(34,34,34)"/><rect x="763" y="23" width="287" height="1" fill="rgb(35,35,35)"/><rect x="848" y="2" width="420" height="1" fill="rgb(16,16,16)"/><rect x="-87" y="35" width="108" height="1" fill="rgb(40,40,40)"/><rect x="1902" y="50" width="555" height="1" fill="rgb(14,14,14)"/><rect x="393" y="6" width="385" height="1" fill="rgb(24,24,24)"/><rect x="1023" y="12" width="511" height="1" fill="rgb(30,30,30)"/><rect x="1126" y="30" width="440" height="1" fill="rgb(40,40,40)"/><rect x="308" y="24" width="443" height="1" fill="rgb(54,54,54)"/><rect x="490" y="24" width="511" height="1" fill="rgb(39,39,39)"/><rect x="386" y="51" width="72" height="1" fill="rgb(29,29,29)"/><rect x="599" y="45" width="96" height="1" fill="rgb(18,18,18)"/><rect x="703" y="53" width="139" height="1" fill="rgb(25,25,25)"/><rect x="372" y="47" width="517" height="1" fill="rgb(16,16,16)"/><rect x="-111" y="24" width="136" height="1" fill="rgb(52,52,52)"/><rect x="1121" y="21" width="299" height="1" fill="rgb(54,54,54)"/><rect x="1299" y="7" width="206" height="1" fill="rgb(45,45,45)"/><rect x="32" y="14" width="244" height="1" fill="rgb(52,52,52)"/><rect x="392" y="35" width="509" height="1" fill="rgb(33,33,33)"/><rect x="1513" y="17" width="481" height="1" fill="rgb(39,39,39)"/><rect x="-96" y="9" width="337" height="1" fill="rgb(42,42,42)"/><rect x="487" y="21" width="326" height="1" fill="rgb(55,55,55)"/><rect x="1102" y="6" width="527" height="1" fill="rgb(54,54,54)"/><rect x="428" y="7" width="585" height="1" fill="rgb(27,27,27)"/><rect x="664" y="40" width="548" height="1" fill="rgb(42,42,42)"/><rect x="855" y="7" width="266" height="1" fill="rgb(47,47,47)"/><rect x="871" y="27" width="304" height="1" fill="rgb(39,39,39)"/><rect x="1398" y="6" width="356" height="1" fill="rgb(50,50,50)"/><rect x="35" y="10" width="360" height="1" fill="rgb(33,33,33)"/><rect x="-135" y="40" width="512" height="1" fill="rgb(56,56,56)"/><rect x="1892" y="21" width="203" height="1" fill="rgb(52,52,52)"/><rect x="973" y="0" width="250" height="1" fill="rgb(28,28,28)"/><rect x="-34" y="27" width="478" height="1" fill="rgb(37,37,37)"/><rect x="540" y="17" width="201" height="1" fill="rgb(35,35,35)"/><rect x="743" y="33" width="239" height="1" fill="rgb(36,36,36)"/><rect x="124" y="38" width="149" height="1" fill="rgb(55,55,55)"/><rect x="921" y="48" width="239" height="1" fill="rgb(20,20,20)"/><rect x="587" y="8" width="375" height="1" fill="rgb(36,36,36)"/><rect x="69" y="0" width="592" height="1" fill="rgb(30,30,30)"/><rect x="26" y="53" width="590" height="1" fill="rgb(25,25,25)"/><rect x="954" y="21" width="564" height="1" fill="rgb(29,29,29)"/><rect x="1477" y="0" width="548" height="1" fill="rgb(19,19,19)"/><rect x="890" y="55" width="314" height="1" fill="rgb(19,19,19)"/><rect x="1303" y="36" width="97" height="1" fill="rgb(34,34,34)"/><rect x="1320" y="44" width="64" height="1" fill="rgb(25,25,25)"/><rect x="1625" y="33" width="588" height="1" fill="rgb(28,28,28)"/><rect x="1261" y="7" width="310" height="1" fill="rgb(44,44,44)"/><rect x="1362" y="49" width="122" height="1" fill="rgb(23,23,23)"/><rect x="241" y="55" width="566" height="1" fill="rgb(28,28,28)"/><rect x="-95" y="32" width="197" height="1" fill="rgb(25,25,25)"/><rect x="162" y="15" width="289" height="1" fill="rgb(35,35,35)"/><rect x="220" y="10" width="379" height="1" fill="rgb(40,40,40)"/><rect x="-77" y="35" width="79" height="1" fill="rgb(30,30,30)"/><rect x="599" y="44" width="327" height="1" fill="rgb(13,13,13)"/><rect x="1700" y="53" width="595" height="1" fill="rgb(21,21,21)"/><rect x="1619" y="44" width="165" height="1" fill="rgb(25,25,25)"/><rect x="184" y="55" width="243" height="1" fill="rgb(14,14,14)"/><rect x="304" y="17" width="536" height="1" fill="rgb(55,55,55)"/><rect x="1851" y="37" width="346" height="1" fill="rgb(31,31,31)"/><rect x="297" y="7" width="475" height="1" fill="rgb(32,32,32)"/><rect x="731" y="34" width="292" height="1" fill="rgb(33,33,33)"/><rect x="1692" y="42" width="466" height="1" fill="rgb(18,18,18)"/><rect x="-125" y="52" width="458" height="1" fill="rgb(27,27,27)"/><rect x="-52" y="38" width="465" height="1" fill="rgb(27,27,27)"/><rect x="1287" y="49" width="406" height="1" fill="rgb(26,26,26)"/><rect x="1172" y="15" width="506" height="1" fill="rgb(44,44,44)"/><rect x="1440" y="52" width="114" height="1" fill="rgb(24,24,24)"/><rect x="400" y="33" width="421" height="1" fill="rgb(39,39,39)"/><rect x="1529" y="55" width="71" height="1" fill="rgb(25,25,25)"/><rect x="567" y="6" width="130" height="1" fill="rgb(44,44,44)"/><rect x="622" y="27" width="576" height="1" fill="rgb(25,25,25)"/><rect x="371" y="14" width="490" height="1" fill="rgb(49,49,49)"/><rect x="1658" y="49" width="107" height="1" fill="rgb(14,14,14)"/><rect x="888" y="2" width="339" height="1" fill="rgb(34,34,34)"/><rect x="-54" y="51" width="162" height="1" fill="rgb(22,22,22)"/><rect x="-145" y="7" width="504" height="1" fill="rgb(39,39,39)"/><rect x="977" y="2" width="175" height="1" fill="rgb(25,25,25)"/><rect x="483" y="22" width="183" height="1" fill="rgb(27,27,27)"/><rect x="1904" y="38" width="334" height="1" fill="rgb(29,29,29)"/><rect x="407" y="29" width="510" height="1" fill="rgb(31,31,31)"/><rect x="338" y="32" width="360" height="1" fill="rgb(50,50,50)"/><rect x="980" y="36" width="340" height="1" fill="rgb(39,39,39)"/><rect x="159" y="47" width="354" height="1" fill="rgb(29,29,29)"/><rect x="707" y="39" width="455" height="1" fill="rgb(36,36,36)"/><rect x="1302" y="35" width="531" height="1" fill="rgb(43,43,43)"/><rect x="1757" y="39" width="540" height="1" fill="rgb(43,43,43)"/><rect x="792" y="1" width="401" height="1" fill="rgb(22,22,22)"/><rect x="1898" y="12" width="452" height="1" fill="rgb(49,49,49)"/><rect x="1244" y="0" width="226" height="1" fill="rgb(23,23,23)"/><rect x="1133" y="20" width="563" height="1" fill="rgb(41,41,41)"/><rect x="685" y="18" width="362" height="1" fill="rgb(27,27,27)"/><rect x="-111" y="49" width="222" height="1" fill="rgb(15,15,15)"/><rect x="1225" y="38" width="510" height="1" fill="rgb(27,27,27)"/><rect x="1388" y="33" width="510" height="1" fill="rgb(46,46,46)"/><rect x="247" y="47" width="593" height="1" fill="rgb(20,20,20)"/><rect x="432" y="43" width="486" height="1" fill="rgb(24,24,24)"/><rect x="1243" y="42" width="203" height="1" fill="rgb(19,19,19)"/><rect x="933" y="39" width="590" height="1" fill="rgb(30,30,30)"/><rect x="1746" y="47" width="335" height="1" fill="rgb(17,17,17)"/><rect x="223" y="26" width="64" height="1" fill="rgb(50,50,50)"/><rect x="281" y="49" width="569" height="1" fill="rgb(26,26,26)"/><rect x="412" y="36" width="487" height="1" fill="rgb(41,41,41)"/><rect x="254" y="55" width="448" height="1" fill="rgb(28,28,28)"/><rect x="1675" y="44" width="354" height="1" fill="rgb(25,25,25)"/><rect x="1245" y="18" width="460" height="1" fill="rgb(57,57,57)"/><rect x="1374" y="35" width="389" height="1" fill="rgb(24,24,24)"/><rect x="1846" y="50" width="449" height="1" fill="rgb(28,28,28)"/><rect x="554" y="19" width="371" height="1" fill="rgb(33,33,33)"/><rect x="1344" y="27" width="297" height="1" fill="rgb(29,29,29)"/><rect x="1152" y="52" width="391" height="1" fill="rgb(21,21,21)"/><rect x="636" y="20" width="496" height="1" fill="rgb(24,24,24)"/><rect x="-6" y="1" width="322" height="1" fill="rgb(33,33,33)"/><rect x="1079" y="19" width="507" height="1" fill="rgb(57,57,57)"/><rect x="1918" y="52" width="500" height="1" fill="rgb(26,26,26)"/><rect x="1265" y="29" width="101" height="1" fill="rgb(46,46,46)"/><rect x="-158" y="28" width="129" height="1" fill="rgb(57,57,57)"/><rect x="205" y="14" width="479" height="1" fill="rgb(47,47,47)"/><rect x="1442" y="32" width="217" height="1" fill="rgb(36,36,36)"/><rect x="1793" y="26" width="471" height="1" fill="rgb(52,52,52)"/><rect x="1206" y="49" width="154" height="1" fill="rgb(18,18,18)"/><rect x="1102" y="23" width="435" height="1" fill="rgb(28,28,28)"/><rect x="1072" y="52" width="584" height="1" fill="rgb(19,19,19)"/><rect x="1007" y="7" width="411" height="1" fill="rgb(56,56,56)"/><rect x="440" y="26" width="596" height="1" fill="rgb(42,42,42)"/><rect x="1895" y="52" width="272" height="1" fill="rgb(30,30,30)"/><rect x="1488" y="12" width="246" height="1" fill="rgb(27,27,27)"/><rect x="236" y="40" width="421" height="1" fill="rgb(26,26,26)"/><rect x="1485" y="44" width="70" height="1" fill="rgb(13,13,13)"/><rect x="-184" y="19" width="371" height="1" fill="rgb(49,49,49)"/><rect x="203" y="53" width="75" height="1" fill="rgb(13,13,13)"/><rect x="517" y="12" width="569" height="1" fill="rgb(41,41,41)"/><rect x="1906" y="55" width="207" height="1" fill="rgb(19,19,19)"/><rect x="297" y="26" width="208" height="1" fill="rgb(34,34,34)"/><rect x="1886" y="33" width="169" height="1" fill="rgb(25,25,25)"/><rect x="111" y="6" width="234" height="1" fill="rgb(57,57,57)"/><rect x="1714" y="31" width="500" height="1" fill="rgb(27,27,27)"/><rect x="-149" y="41" width="390" height="1" fill="rgb(33,33,33)"/><rect x="775" y="45" width="422" height="1" fill="rgb(22,22,22)"/><rect x="-66" y="10" width="333" height="1" fill="rgb(30,30,30)"/><rect x="58" y="54" width="417" height="1" fill="rgb(19,19,19)"/><rect x="1379" y="28" width="80" height="1" fill="rgb(27,27,27)"/><rect x="1421" y="14" width="104" height="1" fill="rgb(52,52,52)"/><rect x="776" y="3" width="315" height="1" fill="rgb(22,22,22)"/><rect x="452" y="2" width="237" height="1" fill="rgb(26,26,26)"/><rect x="1665" y="0" width="370" height="1" fill="rgb(30,30,30)"/><rect x="832" y="38" width="567" height="1" fill="rgb(28,28,28)"/><rect x="1396" y="15" width="286" height="1" fill="rgb(50,50,50)"/><rect x="1432" y="19" width="556" height="1" fill="rgb(25,25,25)"/><rect x="796" y="50" width="149" height="1" fill="rgb(19,19,19)"/><rect x="1267" y="10" width="448" height="1" fill="rgb(35,35,35)"/><rect x="990" y="0" width="465" height="1" fill="rgb(28,28,28)"/><rect x="1172" y="7" width="454" height="1" fill="rgb(45,45,45)"/><rect x="68" y="25" width="186" height="1" fill="rgb(51,51,51)"/><rect x="1238" y="52" width="310" height="1" fill="rgb(26,26,26)"/><rect x="1712" y="12" width="350" height="1" fill="rgb(46,46,46)"/><rect x="1584" y="15" width="95" height="1" fill="rgb(41,41,41)"/><rect x="-97" y="42" width="409" height="1" fill="rgb(18,18,18)"/><rect x="331" y="15" width="154" height="1" fill="rgb(36,36,36)"/><rect x="323" y="17" width="513" height="1" fill="rgb(53,53,53)"/><rect x="783" y="53" width="223" height="1" fill="rgb(25,25,25)"/><rect x="686" y="22" width="474" height="1" fill="rgb(48,48,48)"/><rect x="652" y="40" width="364" height="1" fill="rgb(54,54,54)"/><rect x="637" y="32" width="292" height="1" fill="rgb(52,52,52)"/><rect x="336" y="43" width="327" height="1" fill="rgb(28,28,28)"/><rect x="1307" y="37" width="312" height="1" fill="rgb(49,49,49)"/><rect x="1889" y="38" width="277" height="1" fill="rgb(32,32,32)"/><rect x="302" y="55" width="585" height="1" fill="rgb(15,15,15)"/><rect x="907" y="34" width="454" height="1" fill="rgb(25,25,25)"/><rect x="394" y="42" width="378" height="1" fill="rgb(13,13,13)"/><rect x="152" y="24" width="241" height="1" fill="rgb(38,38,38)"/><rect x="571" y="20" width="171" height="1" fill="rgb(28,28,28)"/><rect x="1280" y="35" width="572" height="1" fill="rgb(43,43,43)"/><rect x="69" y="12" width="378" height="1" fill="rgb(29,29,29)"/><rect x="981" y="14" width="189" height="1" fill="rgb(49,49,49)"/><rect x="1257" y="18" width="473" height="1" fill="rgb(53,53,53)"/><rect x="341" y="49" width="343" height="1" fill="rgb(19,19,19)"/><rect x="1301" y="1" width="419" height="1" fill="rgb(30,30,30)"/><rect x="1694" y="1" width="314" height="1" fill="rgb(29,29,29)"/><rect x="200" y="22" width="246" height="1" fill="rgb(42,42,42)"/><rect x="909" y="7" width="284" height="1" fill="rgb(26,26,26)"/><rect x="-37" y="25" width="225" height="1" fill="rgb(51,51,51)"/><rect x="1041" y="12" width="219" height="1" fill="rgb(48,48,48)"/><rect x="-40" y="47" width="378" height="1" fill="rgb(19,19,19)"/><rect x="732" y="36" width="569" height="1" fill="rgb(57,57,57)"/><rect x="1581" y="16" width="417" height="1" fill="rgb(24,24,24)"/><rect x="972" y="7" width="103" height="1" fill="rgb(27,27,27)"/><rect x="255" y="15" width="98" height="1" fill="rgb(44,44,44)"/><rect x="1215" y="13" width="148" height="1" fill="rgb(50,50,50)"/><rect x="1412" y="44" width="286" height="1" fill="rgb(22,22,22)"/><rect x="168" y="33" width="417" height="1" fill="rgb(51,51,51)"/><rect x="1193" y="28" width="575" height="1" fill="rgb(52,52,52)"/><rect x="22" y="32" width="270" height="1" fill="rgb(51,51,51)"/><rect x="1896" y="43" width="190" height="1" fill="rgb(30,30,30)"/><rect x="575" y="48" width="104" height="1" fill="rgb(22,22,22)"/><rect x="470" y="11" width="301" height="1" fill="rgb(58,58,58)"/><rect x="822" y="16" width="120" height="1" fill="rgb(34,34,34)"/><rect x="1222" y="22" width="481" height="1" fill="rgb(29,29,29)"/><rect x="1072" y="12" width="200" height="1" fill="rgb(32,32,32)"/><rect x="1792" y="43" width="554" height="1" fill="rgb(21,21,21)"/><rect x="790" y="45" width="66" height="1" fill="rgb(30,30,30)"/><rect x="1622" y="44" width="196" height="1" fill="rgb(25,25,25)"/><rect x="1026" y="44" width="196" height="1" fill="rgb(18,18,18)"/><rect x="786" y="37" width="401" height="1" fill="rgb(31,31,31)"/><rect x="1539" y="35" width="233" height="1" fill="rgb(33,33,33)"/><rect x="1688" y="38" width="475" height="1" fill="rgb(37,37,37)"/><rect x="985" y="7" width="72" height="1" fill="rgb(47,47,47)"/><rect x="645" y="31" width="104" height="1" fill="rgb(27,27,27)"/><rect x="1044" y="17" width="261" height="1" fill="rgb(31,31,31)"/><rect x="1065" y="44" width="518" height="1" fill="rgb(17,17,17)"/><rect x="1129" y="10" width="515" height="1" fill="rgb(53,53,53)"/><rect x="1286" y="36" width="356" height="1" fill="rgb(34,34,34)"/><rect x="94" y="35" width="106" height="1" fill="rgb(24,24,24)"/><rect x="1788" y="29" width="145" height="1" fill="rgb(45,45,45)"/><rect x="883" y="47" width="171" height="1" fill="rgb(30,30,30)"/><rect x="1800" y="27" width="254" height="1" fill="rgb(58,58,58)"/><rect x="-166" y="20" width="427" height="1" fill="rgb(29,29,29)"/><rect x="971" y="41" width="317" height="1" fill="rgb(39,39,39)"/><rect x="367" y="5" width="88" height="1" fill="rgb(15,15,15)"/><rect x="1419" y="49" width="208" height="1" fill="rgb(23,23,23)"/><rect x="560" y="23" width="598" height="1" fill="rgb(34,34,34)"/><rect x="1071" y="6" width="394" height="1" fill="rgb(48,48,48)"/><rect x="1259" y="11" width="387" height="1" fill="rgb(38,38,38)"/><rect x="358" y="23" width="438" height="1" fill="rgb(40,40,40)"/><rect x="36" y="15" width="102" height="1" fill="rgb(30,30,30)"/><rect x="1451" y="36" width="111" height="1" fill="rgb(37,37,37)"/><rect x="1532" y="31" width="571" height="1" fill="rgb(34,34,34)"/><rect x="128" y="19" width="205" height="1" fill="rgb(38,38,38)"/><rect x="366" y="10" width="513" height="1" fill="rgb(49,49,49)"/><rect x="-37" y="5" width="510" height="1" fill="rgb(32,32,32)"/><rect x="694" y="12" width="441" height="1" fill="rgb(24,24,24)"/><rect x="1894" y="2" width="495" height="1" fill="rgb(19,19,19)"/><rect x="94" y="18" width="116" height="1" fill="rgb(56,56,56)"/><rect x="1525" y="45" width="406" height="1" fill="rgb(15,15,15)"/><rect x="-164" y="28" width="240" height="1" fill="rgb(34,34,34)"/><rect x="1011" y="24" width="64" height="1" fill="rgb(52,52,52)"/><rect x="1225" y="51" width="260" height="1" fill="rgb(29,29,29)"/><rect x="1125" y="5" width="589" height="1" fill="rgb(31,31,31)"/><rect x="432" y="27" width="470" height="1" fill="rgb(29,29,29)"/><rect x="45" y="51" width="399" height="1" fill="rgb(23,23,23)"/><rect x="1524" y="36" width="437" height="1" fill="rgb(54,54,54)"/><rect x="360" y="42" width="366" height="1" fill="rgb(24,24,24)"/><rect x="-86" y="33" width="253" height="1" fill="rgb(38,38,38)"/><rect x="1632" y="43" width="147" height="1" fill="rgb(18,18,18)"/><rect x="1323" y="42" width="486" height="1" fill="rgb(25,25,25)"/><rect x="784" y="33" width="511" height="1" fill="rgb(49,49,49)"/><rect x="267" y="16" width="292" height="1" fill="rgb(35,35,35)"/><rect x="259" y="12" width="286" height="1" fill="rgb(40,40,40)"/><rect x="188" y="41" width="252" height="1" fill="rgb(57,57,57)"/><rect x="830" y="42" width="561" height="1" fill="rgb(20,20,20)"/><rect x="1676" y="35" width="291" height="1" fill="rgb(58,58,58)"/><rect x="262" y="36" width="585" height="1" fill="rgb(29,29,29)"/><rect x="1471" y="54" width="135" height="1" fill="rgb(28,28,28)"/><rect x="1860" y="8" width="579" height="1" fill="rgb(31,31,31)"/><rect x="1910" y="40" width="164" height="1" fill="rgb(53,53,53)"/><rect x="1405" y="53" width="235" height="1" fill="rgb(19,19,19)"/><rect x="1746" y="36" width="155" height="1" fill="rgb(32,32,32)"/><rect x="35" y="23" width="474" height="1" fill="rgb(39,39,39)"/><rect x="1325" y="3" width="102" height="1" fill="rgb(14,14,14)"/><rect x="672" y="44" width="530" height="1" fill="rgb(23,23,23)"/><rect x="355" y="7" width="496" height="1" fill="rgb(29,29,29)"/><rect x="625" y="39" width="177" height="1" fill="rgb(46,46,46)"/><rect x="1303" y="10" width="409" height="1" fill="rgb(24,24,24)"/><rect x="847" y="52" width="185" height="1" fill="rgb(21,21,21)"/><rect x="1901" y="23" width="597" height="1" fill="rgb(46,46,46)"/><rect x="1802" y="46" width="104" height="1" fill="rgb(25,25,25)"/><rect x="1257" y="6" width="395" height="1" fill="rgb(31,31,31)"/><rect x="793" y="2" width="320" height="1" fill="rgb(27,27,27)"/><rect x="1629" y="12" width="81" height="1" fill="rgb(52,52,52)"/><rect x="-115" y="7" width="559" height="1" fill="rgb(31,31,31)"/><rect x="858" y="4" width="249" height="1" fill="rgb(19,19,19)"/><rect x="987" y="35" width="449" height="1" fill="rgb(33,33,33)"/><rect x="825" y="37" width="335" height="1" fill="rgb(52,52,52)"/><rect x="-99" y="0" width="410" height="1" fill="rgb(19,19,19)"/><rect x="1855" y="31" width="555" height="1" fill="rgb(26,26,26)"/><rect x="-55" y="51" width="136" height="1" fill="rgb(19,19,19)"/><rect x="1407" y="39" width="547" height="1" fill="rgb(34,34,34)"/><rect x="1637" y="44" width="462" height="1" fill="rgb(20,20,20)"/><rect x="1917" y="55" width="137" height="1" fill="rgb(25,25,25)"/><rect x="686" y="21" width="378" height="1" fill="rgb(32,32,32)"/><rect x="-22" y="37" width="276" height="1" fill="rgb(34,34,34)"/><rect x="1278" y="52" width="538" height="1" fill="rgb(24,24,24)"/><rect x="1718" y="36" width="457" height="1" fill="rgb(46,46,46)"/><rect x="-176" y="20" width="403" height="1" fill="rgb(54,54,54)"/><rect x="728" y="21" width="81" height="1" fill="rgb(39,39,39)"/><rect x="-15" y="29" width="209" height="1" fill="rgb(33,33,33)"/><rect x="1374" y="17" width="339" height="1" fill="rgb(28,28,28)"/><rect x="873" y="32" width="425" height="1" fill="rgb(57,57,57)"/><rect x="369" y="37" width="94" height="1" fill="rgb(30,30,30)"/><rect x="616" y="55" width="496" height="1" fill="rgb(16,16,16)"/><rect x="953" y="23" width="303" height="1" fill="rgb(33,33,33)"/><rect x="95" y="43" width="371" height="1" fill="rgb(24,24,24)"/><rect x="1285" y="47" width="581" height="1" fill="rgb(21,21,21)"/><rect x="1462" y="22" width="402" height="1" fill="rgb(27,27,27)"/><rect x="1181" y="45" width="390" height="1" fill="rgb(29,29,29)"/><rect x="1304" y="32" width="309" height="1" fill="rgb(39,39,39)"/><rect x="417" y="22" width="198" height="1" fill="rgb(37,37,37)"/><rect x="1656" y="0" width="474" height="1" fill="rgb(31,31,31)"/><rect x="1038" y="25" width="232" height="1" fill="rgb(28,28,28)"/><rect x="1034" y="9" width="375" height="1" fill="rgb(40,40,40)"/><rect x="1194" y="46" width="135" height="1" fill="rgb(19,19,19)"/><rect x="127" y="37" width="243" height="1" fill="rgb(43,43,43)"/><rect x="1247" y="37" width="539" height="1" fill="rgb(46,46,46)"/><rect x="1554" y="49" width="129" height="1" fill="rgb(30,30,30)"/><rect x="517" y="20" width="342" height="1" fill="rgb(40,40,40)"/><rect x="-106" y="34" width="228" height="1" fill="rgb(41,41,41)"/><rect x="-118" y="15" width="283" height="1" fill="rgb(27,27,27)"/><rect x="1634" y="25" width="265" height="1" fill="rgb(42,42,42)"/><rect x="1855" y="55" width="161" height="1" fill="rgb(19,19,19)"/><rect x="32" y="15" width="192" height="1" fill="rgb(27,27,27)"/><rect x="100" y="5" width="409" height="1" fill="rgb(19,19,19)"/><rect x="570" y="0" width="337" height="1" fill="rgb(34,34,34)"/><rect x="-139" y="41" width="390" height="1" fill="rgb(25,25,25)"/><rect x="1117" y="13" width="394" height="1" fill="rgb(25,25,25)"/><rect x="1791" y="41" width="475" height="1" fill="rgb(45,45,45)"/><rect x="35" y="11" width="484" height="1" fill="rgb(26,26,26)"/><rect x="1170" y="5" width="566" height="1" fill="rgb(29,29,29)"/><rect x="1697" y="16" width="73" height="1" fill="rgb(25,25,25)"/><rect x="1083" y="20" width="117" height="1" fill="rgb(50,50,50)"/><rect x="1148" y="39" width="220" height="1" fill="rgb(29,29,29)"/><rect x="439" y="1" width="275" height="1" fill="rgb(19,19,19)"/><rect x="168" y="33" width="426" height="1" fill="rgb(47,47,47)"/><rect x="1209" y="27" width="217" height="1" fill="rgb(45,45,45)"/><rect x="856" y="14" width="549" height="1" fill="rgb(26,26,26)"/><rect x="1066" y="49" width="524" height="1" fill="rgb(22,22,22)"/><rect x="922" y="23" width="195" height="1" fill="rgb(40,40,40)"/><rect x="1748" y="0" width="162" height="1" fill="rgb(28,28,28)"/><rect x="734" y="9" width="470" height="1" fill="rgb(29,29,29)"/><rect x="349" y="1" width="185" height="1" fill="rgb(16,16,16)"/><rect x="1855" y="34" width="269" height="1" fill="rgb(35,35,35)"/><rect x="1297" y="16" width="212" height="1" fill="rgb(35,35,35)"/><rect x="463" y="55" width="89" height="1" fill="rgb(25,25,25)"/><rect x="793" y="49" width="512" height="1" fill="rgb(30,30,30)"/><rect x="1209" y="13" width="458" height="1" fill="rgb(53,53,53)"/><rect x="1126" y="13" width="87" height="1" fill="rgb(30,30,30)"/><rect x="-137" y="42" width="127" height="1" fill="rgb(26,26,26)"/><rect x="1236" y="43" width="121" height="1" fill="rgb(20,20,20)"/><rect x="1340" y="36" width="479" height="1" fill="rgb(48,48,48)"/><rect x="717" y="42" width="91" height="1" fill="rgb(22,22,22)"/><rect x="874" y="1" width="504" height="1" fill="rgb(23,23,23)"/><rect x="1251" y="14" width="268" height="1" fill="rgb(44,44,44)"/><rect x="1543" y="48" width="345" height="1" fill="rgb(23,23,23)"/><rect x="687" y="31" width="220" height="1" fill="rgb(54,54,54)"/><rect x="894" y="55" width="199" height="1" fill="rgb(23,23,23)"/><rect x="162" y="18" width="399" height="1" fill="rgb(24,24,24)"/><rect x="822" y="31" width="225" height="1" fill="rgb(44,44,44)"/><rect x="1655" y="43" width="277" height="1" fill="rgb(14,14,14)"/><rect x="659" y="50" width="429" height="1" fill="rgb(14,14,14)"/><rect x="1598" y="49" width="246" height="1" fill="rgb(28,28,28)"/><rect x="372" y="55" width="364" height="1" fill="rgb(13,13,13)"/><rect x="256" y="51" width="215" height="1" fill="rgb(13,13,13)"/><rect x="1039" y="8" width="214" height="1" fill="rgb(56,56,56)"/><rect x="1240" y="47" width="159" height="1" fill="rgb(18,18,18)"/><rect x="1426" y="29" width="152" height="1" fill="rgb(50,50,50)"/><rect x="1424" y="21" width="403" height="1" fill="rgb(26,26,26)"/><rect x="760" y="37" width="266" height="1" fill="rgb(24,24,24)"/><rect x="352" y="2" width="576" height="1" fill="rgb(22,22,22)"/><rect x="1563" y="36" width="167" height="1" fill="rgb(25,25,25)"/><rect x="1096" y="3" width="126" height="1" fill="rgb(18,18,18)"/><rect x="1796" y="7" width="199" height="1" fill="rgb(57,57,57)"/><rect x="-190" y="27" width="243" height="1" fill="rgb(38,38,38)"/><rect x="405" y="43" width="572" height="1" fill="rgb(17,17,17)"/><rect x="1248" y="33" width="568" height="1" fill="rgb(28,28,28)"/><rect x="681" y="22" width="289" height="1" fill="rgb(28,28,28)"/><rect x="525" y="17" width="75" height="1" fill="rgb(40,40,40)"/><rect x="82" y="17" width="104" height="1" fill="rgb(36,36,36)"/><rect x="-4" y="32" width="477" height="1" fill="rgb(47,47,47)"/><rect x="-157" y="17" width="393" height="1" fill="rgb(26,26,26)"/><rect x="1658" y="41" width="348" height="1" fill="rgb(45,45,45)"/><rect x="1480" y="44" width="335" height="1" fill="rgb(26,26,26)"/><rect x="1103" y="27" width="489" height="1" fill="rgb(48,48,48)"/><rect x="1385" y="9" width="454" height="1" fill="rgb(50,50,50)"/><rect x="385" y="51" width="65" height="1" fill="rgb(21,21,21)"/><rect x="1852" y="38" width="320" height="1" fill="rgb(48,48,48)"/><rect x="612" y="15" width="178" height="1" fill="rgb(29,29,29)"/><rect x="-63" y="53" width="110" height="1" fill="rgb(26,26,26)"/></svg></div>
<div id="oline" class="a"></div>
<div class="a tab" style="left:215px;width:100px;background:#9d9d9d"></div>
<div class="a" style="left:65px;width:400px;text-align:center;top:38.84px;font-size:12px;line-height:12px;font-weight:bold;color:#fff;font-style:normal;white-space:nowrap;">Project</div>
<div class="a tab" style="left:319px;width:100px;background:#f76d22"></div>
<div class="a" style="left:169px;width:400px;text-align:center;top:38.84px;font-size:12px;line-height:12px;font-weight:bold;color:#fff;font-style:normal;white-space:nowrap;">Design</div>
<div class="a tab" style="left:422px;width:100px;background:#9d9d9d"></div>
<div class="a" style="left:272px;width:400px;text-align:center;top:38.84px;font-size:12px;line-height:12px;font-weight:bold;color:#fff;font-style:normal;white-space:nowrap;">Check</div>
<div class="a tab" style="left:525px;width:100px;background:#9d9d9d"></div>
<div class="a" style="left:375px;width:400px;text-align:center;top:38.84px;font-size:12px;line-height:12px;font-weight:bold;color:#fff;font-style:normal;white-space:nowrap;">Report</div>
<div class="a tab" style="left:628px;width:100px;background:#9d9d9d"></div>
<div class="a" style="left:478px;width:400px;text-align:center;top:38.84px;font-size:12px;line-height:12px;font-weight:bold;color:#fff;font-style:normal;white-space:nowrap;">Materials</div>
<div class="a" style="left:804px;width:400px;text-align:center;top:9.20px;font-size:13px;line-height:13px;font-weight:normal;color:#fff;font-style:normal;white-space:nowrap;">Release Notes</div>
<svg class="a" style="left:0;top:0" width="320" height="56" viewBox="0 0 320 56">
<g transform="translate(8.16,0) skewX(-17.6)">
<rect x="14.2" y="6.2" width="61.6" height="19.55" rx="1.5" fill="#f37a1f"/>
<rect x="15.7" y="7.6" width="3.3" height="16.8" fill="#0b0b0b"/>
<path d="M20.6 7.6 H36.5 a2 2 0 0 1 2 2 V22.4 a2 2 0 0 1 -2 2 H20.6z M25.3 12.2 V19.5 H33.2 V12.2z" fill="#0b0b0b" fill-rule="evenodd"/>
<path d="M40.4 7.6 H55.6 V24.4 H40.4z M44.3 12.2 V13.9 H51.8 V12.2z M44 16.5 V18 H54 V16.5z" fill="#0b0b0b" fill-rule="evenodd"/>
<path d="M57.9 7.6 H73.6 V24.4 H57.9z M59.3 12.2 V13.9 H69.7 V12.2z M62.3 16.5 V18 H69 V16.5z" fill="#0b0b0b" fill-rule="evenodd"/>
</g>
<text x="85" y="23" font-family="Liberation Sans" font-weight="bold" font-style="italic" font-size="19" fill="#fff" textLength="70" lengthAdjust="spacingAndGlyphs">StatiCa</text>
<text x="157" y="13" font-family="Liberation Sans" font-size="6" fill="#ccc">®</text>
<text x="181" y="22" font-family="Liberation Sans" font-weight="bold" font-style="italic" font-size="15.5" fill="#fff" textLength="108" lengthAdjust="spacingAndGlyphs">Member Beta</text>
<text x="14" y="42" font-family="Liberation Sans" font-weight="bold" font-style="italic" font-size="9" fill="#fff" textLength="136" lengthAdjust="spacingAndGlyphs">Calculate yesterday's estimates</text>
</svg>
<svg class="a" style="left:1836px;top:6px" width="84" height="22" viewBox="0 0 84 22">
<rect x="5" y="2" width="16.5" height="16.5" rx="2" fill="#e3e3e3"/>
<rect x="9.5" y="12.5" width="7" height="2" fill="#111"/>
<rect x="32" y="2" width="16.5" height="16.5" rx="2" fill="#e3e3e3"/>
<rect x="36" y="6" width="8.5" height="8.5" fill="none" stroke="#111" stroke-width="1.8"/>
<rect x="59" y="2" width="16.5" height="16.5" rx="2" fill="#f26a1d"/>
<path d="M63 6.5l8.5 8M71.5 6.5l-8.5 8" stroke="#111" stroke-width="2"/>
</svg>
<div id="ribbon" class="a"></div>
<div class="a sep" style="left:66px"></div>
<div class="a sep" style="left:171px"></div>
<div class="a sep" style="left:276px"></div>
<div class="a sep" style="left:571px"></div>
<div class="a sep" style="left:737px"></div>
<div class="a" style="left:227px;top:67px;width:38px;height:70px;background:#c3c3c3"></div>
<div class="a" style="left:29px;top:73.84px;font-size:12px;line-height:12px;font-weight:normal;color:#333;font-style:normal;white-space:nowrap;">Undo</div>
<div class="a" style="left:29px;top:95.84px;font-size:12px;line-height:12px;font-weight:normal;color:#aaa;font-style:normal;white-space:nowrap;">Redo</div>
<div class="a" style="left:29px;top:117.84px;font-size:12px;line-height:12px;font-weight:normal;color:#333;font-style:normal;white-space:nowrap;">Save</div>
<div class="a" style="left:-165.5px;width:400px;text-align:center;top:140.14px;font-size:12px;line-height:12px;font-weight:normal;color:#a6a6a6;font-style:normal;white-space:nowrap;">Project</div>
<div class="a" style="left:-99px;width:400px;text-align:center;top:103.84px;font-size:12px;line-height:12px;font-weight:normal;color:#333;font-style:normal;white-space:nowrap;">Members</div>
<div class="a" style="left:-52px;width:400px;text-align:center;top:103.84px;font-size:12px;line-height:12px;font-weight:normal;color:#333;font-style:normal;white-space:nowrap;">LCS</div>
<div class="a" style="left:-80.5px;width:400px;text-align:center;top:140.14px;font-size:12px;line-height:12px;font-weight:normal;color:#a6a6a6;font-style:normal;white-space:nowrap;">Labels</div>
<div class="a" style="left:4.5px;width:400px;text-align:center;top:103.84px;font-size:12px;line-height:12px;font-weight:normal;color:#333;font-style:normal;white-space:nowrap;">Frame</div>
<div class="a" style="left:45.5px;width:400px;text-align:center;top:103.84px;font-size:12px;line-height:12px;font-weight:normal;color:#333;font-style:normal;white-space:nowrap;">CAD</div>
<div class="a" style="left:24.5px;width:400px;text-align:center;top:140.14px;font-size:12px;line-height:12px;font-weight:normal;color:#a6a6a6;font-style:normal;white-space:nowrap;">Structural model</div>
<div class="a" style="left:110.5px;width:400px;text-align:center;top:103.84px;font-size:12px;line-height:12px;font-weight:normal;color:#a6a6a6;font-style:normal;white-space:nowrap;">Calculate</div>
<div class="a" style="left:163.5px;width:400px;text-align:center;top:103.84px;font-size:12px;line-height:12px;font-weight:normal;color:#a6a6a6;font-style:normal;white-space:nowrap;">Internal</div>
<div class="a" style="left:163.5px;width:400px;text-align:center;top:115.84px;font-size:12px;line-height:12px;font-weight:normal;color:#a6a6a6;font-style:normal;white-space:nowrap;">forces</div>
<div class="a" style="left:224px;width:400px;text-align:center;top:140.14px;font-size:12px;line-height:12px;font-weight:normal;color:#a6a6a6;font-style:normal;white-space:nowrap;">Internal forces</div>
<div class="a" style="left:396.5px;width:400px;text-align:center;top:103.84px;font-size:12px;line-height:12px;font-weight:normal;color:#333;font-style:normal;white-space:nowrap;">Load</div>
<div class="a" style="left:455.5px;width:400px;text-align:center;top:103.84px;font-size:12px;line-height:12px;font-weight:normal;color:#a6a6a6;font-style:normal;white-space:nowrap;">Intermediate</div>
<div class="a" style="left:455.5px;width:400px;text-align:center;top:115.84px;font-size:12px;line-height:12px;font-weight:normal;color:#a6a6a6;font-style:normal;white-space:nowrap;">node</div>
<div class="a" style="left:514px;width:400px;text-align:center;top:103.84px;font-size:12px;line-height:12px;font-weight:normal;color:#a6a6a6;font-style:normal;white-space:nowrap;">Rebar</div>
<div class="a" style="left:456px;width:400px;text-align:center;top:140.14px;font-size:12px;line-height:12px;font-weight:normal;color:#a6a6a6;font-style:normal;white-space:nowrap;">New</div>
<div class="a combo" style="left:387px;top:67px;width:90px;height:26px"></div>
<div class="a" style="left:392px;top:74.84px;font-size:12px;line-height:12px;font-weight:normal;color:#a0a0a0;font-style:normal;white-space:nowrap;">Extreme</div>
<div class="a" style="left:463px;top:76px;width:0;height:0;border-left:4px solid transparent;border-right:4px solid transparent;border-top:5px solid #9a9a9a"></div>
<div class="a combo" style="left:477px;top:67px;width:90px;height:26px"></div>
<div class="a" style="left:482px;top:74.84px;font-size:12px;line-height:12px;font-weight:normal;color:#a0a0a0;font-style:normal;white-space:nowrap;">LE1</div>
<div class="a" style="left:553px;top:76px;width:0;height:0;border-left:4px solid transparent;border-right:4px solid transparent;border-top:5px solid #9a9a9a"></div>
<div class="a combo" style="left:387px;top:93px;width:90px;height:26px"></div>
<div class="a" style="left:392px;top:100.84px;font-size:12px;line-height:12px;font-weight:normal;color:#a0a0a0;font-style:normal;white-space:nowrap;">My</div>
<div class="a" style="left:463px;top:102px;width:0;height:0;border-left:4px solid transparent;border-right:4px solid transparent;border-top:5px solid #9a9a9a"></div>
<svg class="a" style="left:0;top:60px" width="740" height="97" viewBox="0 60 740 97">
<!-- undo -->
<path d="M12 80.5 C14 76 21.5 74.5 23 82.5" fill="none" stroke="#1a1a1a" stroke-width="2.3"/>
<path d="M10 84 L10.3 76.5 L16 83.6 z" fill="#111"/>
<!-- redo -->
<path d="M10.5 104.5 C13 98.5 20 97.5 21 103" fill="none" stroke="#a8a8a8" stroke-width="2.3"/>
<path d="M23.3 105.8 L23 98.3 L17 105.6 z" fill="#a0a0a0"/>
<!-- save -->
<rect x="9.5" y="116.5" width="15" height="15" rx="1" fill="none" stroke="#444" stroke-width="1"/>
<path d="M12.5 116.5v5h9v-5" fill="none" stroke="#444" stroke-width="1"/>
<path d="M12.5 131.5v-4h7v4" fill="none" stroke="#444" stroke-width="1"/>
<rect x="14" y="128" width="2" height="3" fill="#444"/>
<!-- members -->
<rect x="89.4" y="76.8" width="23.4" height="4.2" fill="#2a2a2a"/><rect x="90.5" y="78.4" width="21.2" height="1.1" fill="#777"/>
<rect x="89.4" y="91" width="23.4" height="4.4" fill="#2a2a2a"/><rect x="90.5" y="92.6" width="21.2" height="1.1" fill="#777"/>
<rect x="88.8" y="75.8" width="1.8" height="5.5" fill="#333"/><rect x="111.8" y="75.8" width="1.8" height="5.5" fill="#333"/>
<rect x="88.8" y="90.5" width="1.8" height="5.5" fill="#333"/><rect x="111.8" y="90.5" width="1.8" height="5.5" fill="#333"/>
<path d="M90 81 V84.5 M90 87.5 V91 M112.5 81 V84.5 M112.5 87.5 V91" stroke="#666" stroke-width="0.8"/>
<path d="M85.2 86 L89.5 84.3 L90.8 86.3 L94.5 86.4 L90.3 88 L89.2 86.2z" fill="#222"/>
<path d="M107.2 86 L111.5 84.3 L112.8 86.3 L116.5 86.4 L112.3 88 L111.2 86.2z" fill="#222"/>
<!-- lcs -->
<path d="M144.5 75 V88.7 H158.5 M144.5 88.7 L134.5 99" fill="none" stroke="#5e5e5e" stroke-width="1.4"/>
<path d="M141 75.8 L144.5 70.5 L148 75.8z M158.3 86 L163.4 89 L158.3 92z M132 96.5 L132.3 101.6 L137.5 100.5z" fill="#5e5e5e"/>
<!-- frame -->
<path d="M196.5 71v9 M196.5 92.3v8.7 M201 85.7h14" stroke="#333" stroke-width="1" fill="none"/>
<circle cx="196.5" cy="85.7" r="1.6" fill="#111"/>
<!-- cad -->
<path d="M235 71h5.5v12h16v5.5h-16v12h-5.5z" fill="#7a7a7a"/>
<!-- calculate -->
<g stroke="#7a7a7a" stroke-width="1.4" fill="none">
<path d="M298 71v29.5 M321.7 71v29.5 M295 100.6h6 M318.7 100.6h6 M298 75h23.7 M298 84.3h23.7 M298 93.6h23.7"/>
</g>
<g fill="#6a6a6a"><ellipse cx="304.6" cy="75" rx="1.3" ry="1.8"/><ellipse cx="315.2" cy="75" rx="1.3" ry="1.8"/><ellipse cx="309.5" cy="84.3" rx="1.3" ry="1.8"/><ellipse cx="311.2" cy="93.6" rx="1.3" ry="1.8"/></g>
<g fill="#f2a878"><ellipse cx="309.8" cy="75" rx="1.3" ry="2"/><ellipse cx="315.2" cy="84.3" rx="1.3" ry="2"/><ellipse cx="305.8" cy="93.6" rx="1.3" ry="2"/><ellipse cx="316.5" cy="93.6" rx="1.3" ry="2"/></g>
<!-- internal forces -->
<path d="M349 73.5 L356 70.5 L363 71.5 V101 H349z" fill="#a8b0c2"/>
<path d="M363 73 L377 72 V76 L380 78 V99.5 L377 101 H363z" fill="#c0c0c6"/>
<path d="M371 80 L380 82 V97 L371 99z" fill="#b4b4ba"/>
<g stroke="#eef" stroke-width="0.6" opacity="0.8">
<path d="M349 77h14 M349 81h14 M349 85h14 M349 89h14 M349 93h14 M349 97h14 M352.5 72v29 M356 71v30 M359.5 71v30"/>
<path d="M363 77h17 M363 81h17 M363 85h17 M363 89h17 M363 93h17 M363 97h17 M367 73v28 M371 73v28 M375 73v28"/>
</g>
<!-- load -->
<path d="M595 74v27 M607 73v28" stroke="#555" stroke-width="1.2" fill="none"/>
<path d="M588 94.5 L595 101 L601 94.5 L607 101 L612 94.5" stroke="#555" stroke-width="1.3" fill="none"/>
<path d="M585.5 70h4.5v5h6v4.5h-6v5.5h-4.5v-5.5h-4.5v-4.5h4.5z" fill="#5b94e0"/>
<!-- intermediate node -->
<g stroke="#b8b8b8" stroke-width="1.4" fill="none">
<path d="M647 78 L659 75 L671 78 V97 L659 101 L647 97 Z M659 75 V101 M653 76 V99 M647 97 L671 97"/>
</g>
<path d="M645 70h4.5v5h6v4.5h-6v5.5h-4.5v-5.5h-5v-4.5h5z" fill="#b3cdf0"/>
<!-- rebar -->
<rect x="708" y="71" width="21.5" height="30.5" rx="3" fill="none" stroke="#b8b8b8" stroke-width="1.6"/>
<circle cx="711.5" cy="74" r="1" fill="#b0b0b0"/><circle cx="725.5" cy="74" r="1" fill="#b0b0b0"/>
<circle cx="712" cy="97" r="2" fill="#b8b8b8"/><circle cx="725" cy="97" r="2" fill="#b8b8b8"/>
<path d="M703 70h4.5v5h5.5v4.5h-5.5v5.5h-4.5v-5.5h-5v-4.5h5z" fill="#b3cdf0"/>
</svg>
<div id="tbar" class="a"></div>
<svg class="a" style="left:0;top:157px" width="270" height="26" viewBox="0 157 270 26">
<g fill="none" stroke="#fff" stroke-width="2">
<path d="M20.5 171 L28 163.5 L35.5 171 M22.5 169.5 V180 H26 V174 H30 V180 H33.5 V169.5"/>
</g>
<g fill="none" stroke="#eee" stroke-width="1.4"><rect x="55.5" y="162.3" width="13.5" height="11.7"/></g>
<circle cx="68" cy="173" r="4.5" fill="#a0a0a0" stroke="#fff" stroke-width="1.4"/>
<path d="M71 176 L74.5 179.5" stroke="#fff" stroke-width="1.6"/>
<path d="M68 170.5 v2.5 h-2" stroke="#fff" stroke-width="0.9" fill="none"/>
<circle cx="99" cy="170.5" r="6" fill="none" stroke="#fff" stroke-width="2"/>
<path d="M103.5 175 L109 180.5" stroke="#fff" stroke-width="2.4"/>
<path d="M137 162 V180 M128 171 H146" stroke="#fff" stroke-width="1.8"/>
<path d="M133.5 165 L137 161 L140.5 165z M133.5 177 L137 181 L140.5 177z M131 167.5 L127 171 L131 174.5z M143 167.5 L147 171 L143 174.5z" fill="#fff"/>
<path d="M179 168 A7 7 0 1 0 180 174" fill="none" stroke="#fff" stroke-width="2.2"/>
<path d="M175 168.5 L181.5 164 L181.5 171z" fill="#fff"/>
<g stroke="#fff" stroke-width="1.3" fill="none">
<path d="M198.5 164.5 L203 169 M198.5 164.5 h3.5 M198.5 164.5 v3.5"/>
<path d="M216 164.5 L211.5 169 M216 164.5 h-3.5 M216 164.5 v3.5"/>
<path d="M198.5 180 L203 175.5 M198.5 180 h3.5 M198.5 180 v-3.5"/>
<path d="M216 180 L211.5 175.5 M216 180 h-3.5 M216 180 v-3.5"/>
</g>
<path d="M232 171 L246 166 L252 167.5 V173.5 L238.5 179.5 L232 177 Z" fill="#fff"/>
<path d="M232 171 L238.5 173 L252 167.5 M238.5 173 V179.5" stroke="#aaa" stroke-width="0.8" fill="none"/>
</svg>
<div class="a" style="left:1124px;width:400px;text-align:center;top:164.84px;font-size:12px;line-height:12px;font-weight:bold;color:#fff;font-style:normal;white-space:nowrap;letter-spacing:-0.4px">Solid</div>
<div class="a" style="left:1181.5px;width:400px;text-align:center;top:164.84px;font-size:12px;line-height:12px;font-weight:normal;color:#fff;font-style:normal;white-space:nowrap;letter-spacing:-0.2px">Transparent</div>
<svg class="a" style="left:0;top:183px" width="1440" height="827" viewBox="0 183 1440 827">
<rect x="175.0" y="267" width="5" height="243" fill="#bcbcbc"/>
<line x1="177.5" y1="267.0" x2="177.5" y2="510.0" stroke="#7fa8e8" stroke-width="1" stroke-dasharray="7 3 1 3"/>
<rect x="175.0" y="850" width="5" height="160" fill="#bcbcbc"/>
<line x1="177.5" y1="850.0" x2="177.5" y2="1010.0" stroke="#7fa8e8" stroke-width="1" stroke-dasharray="7 3 1 3"/>
<rect x="919.5" y="183" width="5" height="72" fill="#bcbcbc"/>
<line x1="922.0" y1="183.0" x2="922.0" y2="255.0" stroke="#7fa8e8" stroke-width="1" stroke-dasharray="7 3 1 3"/>
<rect x="919.0" y="640" width="6" height="183" fill="#bcbcbc"/>
<line x1="922.0" y1="640.0" x2="922.0" y2="823.0" stroke="#7fa8e8" stroke-width="1" stroke-dasharray="7 3 1 3"/>
<rect x="175" y="267" width="5" height="2.5" fill="#333"/>
<line x1="320.0" y1="340.7" x2="770.0" y2="399.5" stroke="#bababa" stroke-width="5" />
<line x1="320.0" y1="335.7" x2="770.0" y2="394.5" stroke="#86aee8" stroke-width="1" stroke-dasharray="8 5 1 5"/>
<ellipse cx="320.5" cy="340.5" rx="2.3" ry="3" fill="#555"/>
<line x1="1027.8" y1="385.8" x2="1219.4" y2="319.3" stroke="#bababa" stroke-width="5" />
<line x1="1027.8" y1="378.3" x2="1219.4" y2="311.8" stroke="#86aee8" stroke-width="1" stroke-dasharray="8 5 1 5"/>
<circle cx="1219.4" cy="319.3" r="2.8" fill="#666" stroke="#333" stroke-width="0.8"/>
<line x1="0.0" y1="661.4" x2="25.6" y2="668.4" stroke="#bababa" stroke-width="5" />
<line x1="0.0" y1="656.4" x2="25.6" y2="663.4" stroke="#86aee8" stroke-width="1" stroke-dasharray="8 5 1 5"/>
<line x1="0.0" y1="752.3" x2="86.5" y2="722.0" stroke="#bababa" stroke-width="5" />
<line x1="0.0" y1="744.3" x2="86.5" y2="714.0" stroke="#86aee8" stroke-width="1" stroke-dasharray="8 5 1 5"/>
<polygon points="770.0,357.4 783.3,352.6 880.0,366.5 880.0,373.0" fill="#878787" />
<polygon points="770.0,357.4 880.0,373.0 880.0,438.0 770.0,421.0" fill="#939393" />
<polygon points="762.0,421.0 770.0,418.7 880.0,433.0 880.0,439.0" fill="#888888" />
<polygon points="762.0,421.0 880.0,439.0 880.0,459.6 762.0,442.7" fill="#919191" />
<line x1="770.0" y1="357.4" x2="880.0" y2="373.0" stroke="#c8c8c8" stroke-width="0.8" />
<line x1="762.0" y1="421.0" x2="880.0" y2="439.0" stroke="#c8c8c8" stroke-width="0.8" />
<polygon points="966.9,357.1 1008.4,342.4 1027.8,345.3 966.9,366.9" fill="#888888" />
<polygon points="966.9,366.9 1027.8,345.3 1027.8,408.0 966.9,430.0" fill="#444444" />
<line x1="966.9" y1="366.9" x2="1027.8" y2="345.3" stroke="#cfcfcf" stroke-width="0.8" />
<polygon points="25.6,622.9 40.7,617.8 135.0,630.8 135.0,637.2" fill="#878787" />
<polygon points="25.6,622.9 135.0,637.2 135.0,700.0 25.6,686.0" fill="#969696" />
<polygon points="18.2,686.5 25.6,684.5 90.0,693.0 90.0,695.5" fill="#888888" />
<polygon points="18.2,686.5 90.0,695.5 90.0,717.0 18.2,709.0" fill="#939393" />
<line x1="25.6" y1="622.9" x2="135.0" y2="637.2" stroke="#c8c8c8" stroke-width="0.8" />
<line x1="18.2" y1="686.5" x2="90.0" y2="695.5" stroke="#c8c8c8" stroke-width="0.8" />
<clipPath id="cyl177"><path d="M135.0 516 V846.5 A42.5 9.8 0 0 0 220.0 846.5 V516z"/></clipPath>
<g clip-path="url(#cyl177)">
<rect x="135.0" y="516" width="20.3" height="341.3" fill="#8f8f8f"/>
<rect x="155.0" y="516" width="10.3" height="341.3" fill="#949494"/>
<rect x="165.0" y="516" width="12.0" height="341.3" fill="#898989"/>
<rect x="176.7" y="516" width="10.6" height="341.3" fill="#7b7b7b"/>
<rect x="187.0" y="516" width="10.6" height="341.3" fill="#646464"/>
<rect x="197.3" y="516" width="9.0" height="341.3" fill="#4b4b4b"/>
<rect x="206.0" y="516" width="14.3" height="341.3" fill="#444444"/>
</g>
<ellipse cx="177.5" cy="516" rx="42.5" ry="9.8" fill="#888888"/>
<path d="M135.0 516 A42.5 9.8 0 0 0 220.0 516" fill="none" stroke="#d8d8d8" stroke-width="1"/>
<clipPath id="cyl922"><path d="M879.8 251 V600 A42.5 10 0 0 0 964.8 600 V251z"/></clipPath>
<g clip-path="url(#cyl922)">
<rect x="879.8" y="251" width="20.3" height="360" fill="#8f8f8f"/>
<rect x="899.8" y="251" width="10.3" height="360" fill="#949494"/>
<rect x="909.8" y="251" width="12.0" height="360" fill="#898989"/>
<rect x="921.5" y="251" width="10.6" height="360" fill="#7b7b7b"/>
<rect x="931.8" y="251" width="10.6" height="360" fill="#646464"/>
<rect x="942.1" y="251" width="9.0" height="360" fill="#4b4b4b"/>
<rect x="950.8" y="251" width="14.3" height="360" fill="#444444"/>
</g>
<ellipse cx="922.3" cy="251" rx="42.5" ry="10" fill="#888888"/>
<path d="M879.8 251 A42.5 10 0 0 0 964.8 251" fill="none" stroke="#d8d8d8" stroke-width="1"/>
<rect x="919.5" y="243" width="5" height="9" fill="#4a4a4a"/><rect x="919" y="250" width="6" height="2.5" rx="1" fill="#222"/>
<rect x="175" y="507" width="5" height="9" fill="#4a4a4a"/><rect x="174.5" y="514.5" width="6" height="2.5" rx="1" fill="#222"/>
<polygon points="909.8,384.4 943.5,381.0 1166.2,478.0 1130.4,490.8" fill="#888888" />
<polygon points="909.8,384.4 1130.4,490.8 1130.4,573.0 909.8,467.1" fill="#979797" />
<line x1="909.8" y1="384.4" x2="1130.4" y2="490.8" stroke="#d0d0d0" stroke-width="0.9" />
<line x1="909.8" y1="384.4" x2="909.8" y2="467.1" stroke="#d0d0d0" stroke-width="0.8" />
<polygon points="965.0,493.0 1003.0,511.0 965.0,525.0" fill="#ffffff" />
<polygon points="672.0,630.0 1099.0,476.0 1130.4,490.8 739.4,630.3" fill="#888888" />
<line x1="672.0" y1="630.0" x2="1099.0" y2="476.0" stroke="#c8c8c8" stroke-width="0.8" />
<polygon points="739.4,630.3 1130.4,490.8 1130.4,572.7 739.4,712.3" fill="#444444" />
<polygon points="1121.5,515.5 1130.4,512.3 1130.4,552.7 1121.5,556.0" fill="#8a8a8a" />
<polygon points="739.4,683.7 1130.4,552.7 1130.4,556.9 739.4,691.8" fill="#8a8a8a" />
<line x1="739.4" y1="630.3" x2="1130.4" y2="490.8" stroke="#d0d0d0" stroke-width="1" />
<line x1="739.4" y1="650.8" x2="1121.5" y2="515.5" stroke="#c0c0c0" stroke-width="0.9" />
<line x1="739.4" y1="683.7" x2="1130.4" y2="552.7" stroke="#c0c0c0" stroke-width="0.9" />
<line x1="739.4" y1="691.8" x2="1130.4" y2="556.9" stroke="#c0c0c0" stroke-width="0.9" />
<polygon points="1130.4,490.8 1166.2,478.0 1166.2,560.0 1130.4,572.7" fill="#444444" />
<line x1="1130.4" y1="490.8" x2="1166.2" y2="478.0" stroke="#d0d0d0" stroke-width="1" />
<line x1="1130.4" y1="490.8" x2="1130.4" y2="572.7" stroke="#c8c8c8" stroke-width="1" />
<polygon points="219.7,633.7 672.0,630.0 739.4,630.3 704.0,643.0 219.7,645.4" fill="#858585" />
<polygon points="208.3,645.5 704.0,643.0 704.0,725.3 208.3,729.3" fill="#8f8f8f" />
<polygon points="704.0,643.0 739.4,630.3 739.4,712.3 704.0,725.3" fill="#444444" />
<line x1="208.3" y1="645.5" x2="704.0" y2="643.0" stroke="#c8c8c8" stroke-width="0.9" />
<line x1="704.0" y1="643.0" x2="739.4" y2="630.3" stroke="#d0d0d0" stroke-width="0.9" />
<line x1="704.0" y1="643.0" x2="704.0" y2="725.3" stroke="#c8c8c8" stroke-width="0.9" />
<line x1="739.4" y1="630.3" x2="739.4" y2="712.3" stroke="#c8c8c8" stroke-width="0.9" />
<polygon points="85.7,672.7 104.7,674.4 104.7,756.6 56.2,750.6 56.2,729.8 85.7,732.4" fill="#979797" />
<polygon points="56.2,730.5 85.7,720.5 85.7,724.5 56.2,735.0" fill="#636363" />
<polygon points="85.7,672.7 152.3,649.3 173.9,650.5 104.7,674.4" fill="#8a8a8a" />
<polygon points="104.7,674.4 173.9,650.5 173.9,732.4 104.7,756.6" fill="#444444" />
<line x1="85.7" y1="672.7" x2="104.7" y2="674.4" stroke="#d0d0d0" stroke-width="0.8" />
<line x1="104.7" y1="674.4" x2="173.9" y2="650.5" stroke="#d0d0d0" stroke-width="0.8" />
<line x1="104.7" y1="674.4" x2="104.7" y2="756.6" stroke="#d0d0d0" stroke-width="0.8" />
<circle cx="88" cy="722.5" r="2" fill="none" stroke="#333" stroke-width="0.9"/>
<rect x="941.6" y="335.0" width="3.4" height="32.0" fill="#6ee800" stroke="#74ff00" stroke-width="1"/>
<polygon points="938.5,366.0 948.1,366.0 943.3,385.0" fill="#5cb800" stroke="#74ff00" stroke-width="1.4" stroke-linejoin="round"/>
<rect x="952.2" y="340.1" width="3.4" height="32.0" fill="#6ee800" stroke="#74ff00" stroke-width="1"/>
<polygon points="949.1,371.1 958.7,371.1 953.9,390.1" fill="#5cb800" stroke="#74ff00" stroke-width="1.4" stroke-linejoin="round"/>
<rect x="962.8" y="345.2" width="3.4" height="32.0" fill="#6ee800" stroke="#74ff00" stroke-width="1"/>
<polygon points="959.7,376.2 969.3,376.2 964.5,395.2" fill="#5cb800" stroke="#74ff00" stroke-width="1.4" stroke-linejoin="round"/>
<rect x="973.4" y="350.4" width="3.4" height="32.0" fill="#6ee800" stroke="#74ff00" stroke-width="1"/>
<polygon points="970.3,381.4 979.9,381.4 975.1,400.4" fill="#5cb800" stroke="#74ff00" stroke-width="1.4" stroke-linejoin="round"/>
<rect x="984.0" y="355.5" width="3.4" height="32.0" fill="#6ee800" stroke="#74ff00" stroke-width="1"/>
<polygon points="980.9,386.5 990.5,386.5 985.7,405.5" fill="#5cb800" stroke="#74ff00" stroke-width="1.4" stroke-linejoin="round"/>
<rect x="994.6" y="360.6" width="3.4" height="32.0" fill="#6ee800" stroke="#74ff00" stroke-width="1"/>
<polygon points="991.5,391.6 1001.1,391.6 996.3,410.6" fill="#5cb800" stroke="#74ff00" stroke-width="1.4" stroke-linejoin="round"/>
<rect x="1005.2" y="365.7" width="3.4" height="32.0" fill="#6ee800" stroke="#74ff00" stroke-width="1"/>
<polygon points="1002.1,396.7 1011.7,396.7 1006.9,415.7" fill="#5cb800" stroke="#74ff00" stroke-width="1.4" stroke-linejoin="round"/>
<rect x="1015.8" y="370.8" width="3.4" height="32.0" fill="#6ee800" stroke="#74ff00" stroke-width="1"/>
<polygon points="1012.7,401.8 1022.3,401.8 1017.5,420.8" fill="#5cb800" stroke="#74ff00" stroke-width="1.4" stroke-linejoin="round"/>
<rect x="1026.4" y="376.0" width="3.4" height="32.0" fill="#6ee800" stroke="#74ff00" stroke-width="1"/>
<polygon points="1023.3,407.0 1032.9,407.0 1028.1,426.0" fill="#5cb800" stroke="#74ff00" stroke-width="1.4" stroke-linejoin="round"/>
<rect x="1037.0" y="381.1" width="3.4" height="32.0" fill="#6ee800" stroke="#74ff00" stroke-width="1"/>
<polygon points="1033.9,412.1 1043.5,412.1 1038.7,431.1" fill="#5cb800" stroke="#74ff00" stroke-width="1.4" stroke-linejoin="round"/>
<rect x="1047.6" y="386.2" width="3.4" height="32.0" fill="#6ee800" stroke="#74ff00" stroke-width="1"/>
<polygon points="1044.5,417.2 1054.1,417.2 1049.3,436.2" fill="#5cb800" stroke="#74ff00" stroke-width="1.4" stroke-linejoin="round"/>
<rect x="1058.2" y="391.3" width="3.4" height="32.0" fill="#6ee800" stroke="#74ff00" stroke-width="1"/>
<polygon points="1055.1,422.3 1064.7,422.3 1059.9,441.3" fill="#5cb800" stroke="#74ff00" stroke-width="1.4" stroke-linejoin="round"/>
<rect x="1068.8" y="396.4" width="3.4" height="32.0" fill="#6ee800" stroke="#74ff00" stroke-width="1"/>
<polygon points="1065.7,427.4 1075.3,427.4 1070.5,446.4" fill="#5cb800" stroke="#74ff00" stroke-width="1.4" stroke-linejoin="round"/>
<rect x="1079.4" y="401.6" width="3.4" height="32.0" fill="#6ee800" stroke="#74ff00" stroke-width="1"/>
<polygon points="1076.3,432.6 1085.9,432.6 1081.1,451.6" fill="#5cb800" stroke="#74ff00" stroke-width="1.4" stroke-linejoin="round"/>
<rect x="1090.0" y="406.7" width="3.4" height="32.0" fill="#6ee800" stroke="#74ff00" stroke-width="1"/>
<polygon points="1086.9,437.7 1096.5,437.7 1091.7,456.7" fill="#5cb800" stroke="#74ff00" stroke-width="1.4" stroke-linejoin="round"/>
<rect x="1100.6" y="411.8" width="3.4" height="32.0" fill="#6ee800" stroke="#74ff00" stroke-width="1"/>
<polygon points="1097.5,442.8 1107.1,442.8 1102.3,461.8" fill="#5cb800" stroke="#74ff00" stroke-width="1.4" stroke-linejoin="round"/>
<rect x="1111.2" y="416.9" width="3.4" height="32.0" fill="#6ee800" stroke="#74ff00" stroke-width="1"/>
<polygon points="1108.1,447.9 1117.7,447.9 1112.9,466.9" fill="#5cb800" stroke="#74ff00" stroke-width="1.4" stroke-linejoin="round"/>
<rect x="1121.8" y="422.0" width="3.4" height="32.0" fill="#6ee800" stroke="#74ff00" stroke-width="1"/>
<polygon points="1118.7,453.0 1128.3,453.0 1123.5,472.0" fill="#5cb800" stroke="#74ff00" stroke-width="1.4" stroke-linejoin="round"/>
<rect x="1132.4" y="427.2" width="3.4" height="32.0" fill="#6ee800" stroke="#74ff00" stroke-width="1"/>
<polygon points="1129.3,458.2 1138.9,458.2 1134.1,477.2" fill="#5cb800" stroke="#74ff00" stroke-width="1.4" stroke-linejoin="round"/>
<rect x="699.4" y="581.0" width="3.2" height="33.0" fill="#234d00" stroke="#66ff00" stroke-width="1"/>
<polygon points="695.7,613.0 706.3,613.0 701.0,631.0" fill="#2a5200" stroke="#66ff00" stroke-width="1.4" stroke-linejoin="round"/>
<rect x="712.9" y="576.2" width="3.2" height="33.0" fill="#234d00" stroke="#66ff00" stroke-width="1"/>
<polygon points="709.2,608.2 719.8,608.2 714.5,626.2" fill="#2a5200" stroke="#66ff00" stroke-width="1.4" stroke-linejoin="round"/>
<rect x="726.4" y="571.5" width="3.2" height="33.0" fill="#234d00" stroke="#66ff00" stroke-width="1"/>
<polygon points="722.7,603.5 733.3,603.5 728.0,621.5" fill="#2a5200" stroke="#66ff00" stroke-width="1.4" stroke-linejoin="round"/>
<rect x="739.9" y="566.7" width="3.2" height="33.0" fill="#234d00" stroke="#66ff00" stroke-width="1"/>
<polygon points="736.2,598.7 746.8,598.7 741.5,616.7" fill="#2a5200" stroke="#66ff00" stroke-width="1.4" stroke-linejoin="round"/>
<rect x="753.4" y="562.0" width="3.2" height="33.0" fill="#234d00" stroke="#66ff00" stroke-width="1"/>
<polygon points="749.7,594.0 760.3,594.0 755.0,612.0" fill="#2a5200" stroke="#66ff00" stroke-width="1.4" stroke-linejoin="round"/>
<rect x="766.9" y="557.2" width="3.2" height="33.0" fill="#234d00" stroke="#66ff00" stroke-width="1"/>
<polygon points="763.2,589.2 773.8,589.2 768.5,607.2" fill="#2a5200" stroke="#66ff00" stroke-width="1.4" stroke-linejoin="round"/>
<rect x="780.4" y="552.5" width="3.2" height="33.0" fill="#234d00" stroke="#66ff00" stroke-width="1"/>
<polygon points="776.7,584.5 787.3,584.5 782.0,602.5" fill="#2a5200" stroke="#66ff00" stroke-width="1.4" stroke-linejoin="round"/>
<rect x="793.9" y="547.7" width="3.2" height="33.0" fill="#234d00" stroke="#66ff00" stroke-width="1"/>
<polygon points="790.2,579.7 800.8,579.7 795.5,597.7" fill="#2a5200" stroke="#66ff00" stroke-width="1.4" stroke-linejoin="round"/>
<rect x="807.4" y="543.0" width="3.2" height="33.0" fill="#234d00" stroke="#66ff00" stroke-width="1"/>
<polygon points="803.7,575.0 814.3,575.0 809.0,593.0" fill="#2a5200" stroke="#66ff00" stroke-width="1.4" stroke-linejoin="round"/>
<rect x="820.9" y="538.2" width="3.2" height="33.0" fill="#234d00" stroke="#66ff00" stroke-width="1"/>
<polygon points="817.2,570.2 827.8,570.2 822.5,588.2" fill="#2a5200" stroke="#66ff00" stroke-width="1.4" stroke-linejoin="round"/>
<rect x="834.4" y="533.5" width="3.2" height="33.0" fill="#234d00" stroke="#66ff00" stroke-width="1"/>
<polygon points="830.7,565.5 841.3,565.5 836.0,583.5" fill="#2a5200" stroke="#66ff00" stroke-width="1.4" stroke-linejoin="round"/>
<rect x="847.9" y="528.7" width="3.2" height="33.0" fill="#234d00" stroke="#66ff00" stroke-width="1"/>
<polygon points="844.2,560.7 854.8,560.7 849.5,578.7" fill="#2a5200" stroke="#66ff00" stroke-width="1.4" stroke-linejoin="round"/>
<rect x="861.4" y="524.0" width="3.2" height="33.0" fill="#234d00" stroke="#66ff00" stroke-width="1"/>
<polygon points="857.7,556.0 868.3,556.0 863.0,574.0" fill="#2a5200" stroke="#66ff00" stroke-width="1.4" stroke-linejoin="round"/>
<rect x="874.9" y="519.2" width="3.2" height="33.0" fill="#234d00" stroke="#66ff00" stroke-width="1"/>
<polygon points="871.2,551.2 881.8,551.2 876.5,569.2" fill="#2a5200" stroke="#66ff00" stroke-width="1.4" stroke-linejoin="round"/>
<rect x="888.4" y="514.5" width="3.2" height="33.0" fill="#234d00" stroke="#66ff00" stroke-width="1"/>
<polygon points="884.7,546.5 895.3,546.5 890.0,564.5" fill="#2a5200" stroke="#66ff00" stroke-width="1.4" stroke-linejoin="round"/>
<rect x="901.9" y="509.7" width="3.2" height="33.0" fill="#234d00" stroke="#66ff00" stroke-width="1"/>
<polygon points="898.2,541.7 908.8,541.7 903.5,559.7" fill="#2a5200" stroke="#66ff00" stroke-width="1.4" stroke-linejoin="round"/>
<rect x="915.4" y="505.0" width="3.2" height="33.0" fill="#234d00" stroke="#66ff00" stroke-width="1"/>
<polygon points="911.7,537.0 922.3,537.0 917.0,555.0" fill="#2a5200" stroke="#66ff00" stroke-width="1.4" stroke-linejoin="round"/>
<rect x="928.9" y="500.2" width="3.2" height="33.0" fill="#234d00" stroke="#66ff00" stroke-width="1"/>
<polygon points="925.2,532.2 935.8,532.2 930.5,550.2" fill="#2a5200" stroke="#66ff00" stroke-width="1.4" stroke-linejoin="round"/>
<rect x="942.4" y="495.5" width="3.2" height="33.0" fill="#234d00" stroke="#66ff00" stroke-width="1"/>
<polygon points="938.7,527.5 949.3,527.5 944.0,545.5" fill="#2a5200" stroke="#66ff00" stroke-width="1.4" stroke-linejoin="round"/>
<rect x="955.9" y="490.7" width="3.2" height="33.0" fill="#234d00" stroke="#66ff00" stroke-width="1"/>
<polygon points="952.2,522.7 962.8,522.7 957.5,540.7" fill="#2a5200" stroke="#66ff00" stroke-width="1.4" stroke-linejoin="round"/>
<rect x="969.4" y="486.0" width="3.2" height="33.0" fill="#234d00" stroke="#66ff00" stroke-width="1"/>
<polygon points="965.7,518.0 976.3,518.0 971.0,536.0" fill="#2a5200" stroke="#66ff00" stroke-width="1.4" stroke-linejoin="round"/>
<rect x="982.9" y="481.2" width="3.2" height="33.0" fill="#234d00" stroke="#66ff00" stroke-width="1"/>
<polygon points="979.2,513.2 989.8,513.2 984.5,531.2" fill="#2a5200" stroke="#66ff00" stroke-width="1.4" stroke-linejoin="round"/>
<rect x="996.4" y="476.5" width="3.2" height="33.0" fill="#234d00" stroke="#66ff00" stroke-width="1"/>
<polygon points="992.7,508.5 1003.3,508.5 998.0,526.5" fill="#2a5200" stroke="#66ff00" stroke-width="1.4" stroke-linejoin="round"/>
<rect x="1009.9" y="471.7" width="3.2" height="33.0" fill="#234d00" stroke="#66ff00" stroke-width="1"/>
<polygon points="1006.2,503.7 1016.8,503.7 1011.5,521.7" fill="#2a5200" stroke="#66ff00" stroke-width="1.4" stroke-linejoin="round"/>
<rect x="1023.4" y="467.0" width="3.2" height="33.0" fill="#234d00" stroke="#66ff00" stroke-width="1"/>
<polygon points="1019.7,499.0 1030.3,499.0 1025.0,517.0" fill="#2a5200" stroke="#66ff00" stroke-width="1.4" stroke-linejoin="round"/>
<rect x="1036.9" y="462.2" width="3.2" height="33.0" fill="#234d00" stroke="#66ff00" stroke-width="1"/>
<polygon points="1033.2,494.2 1043.8,494.2 1038.5,512.2" fill="#2a5200" stroke="#66ff00" stroke-width="1.4" stroke-linejoin="round"/>
<rect x="1050.4" y="457.4" width="3.2" height="33.0" fill="#234d00" stroke="#66ff00" stroke-width="1"/>
<polygon points="1046.7,489.4 1057.3,489.4 1052.0,507.4" fill="#2a5200" stroke="#66ff00" stroke-width="1.4" stroke-linejoin="round"/>
<rect x="1063.9" y="452.7" width="3.2" height="33.0" fill="#234d00" stroke="#66ff00" stroke-width="1"/>
<polygon points="1060.2,484.7 1070.8,484.7 1065.5,502.7" fill="#2a5200" stroke="#66ff00" stroke-width="1.4" stroke-linejoin="round"/>
<rect x="1077.4" y="447.9" width="3.2" height="33.0" fill="#234d00" stroke="#66ff00" stroke-width="1"/>
<polygon points="1073.7,479.9 1084.3,479.9 1079.0,497.9" fill="#2a5200" stroke="#66ff00" stroke-width="1.4" stroke-linejoin="round"/>
<rect x="1090.9" y="443.2" width="3.2" height="33.0" fill="#234d00" stroke="#66ff00" stroke-width="1"/>
<polygon points="1087.2,475.2 1097.8,475.2 1092.5,493.2" fill="#2a5200" stroke="#66ff00" stroke-width="1.4" stroke-linejoin="round"/>
<rect x="1104.4" y="438.4" width="3.2" height="33.0" fill="#234d00" stroke="#66ff00" stroke-width="1"/>
<polygon points="1100.7,470.4 1111.3,470.4 1106.0,488.4" fill="#2a5200" stroke="#66ff00" stroke-width="1.4" stroke-linejoin="round"/>
<rect x="1117.9" y="433.7" width="3.2" height="33.0" fill="#234d00" stroke="#66ff00" stroke-width="1"/>
<polygon points="1114.2,465.7 1124.8,465.7 1119.5,483.7" fill="#2a5200" stroke="#66ff00" stroke-width="1.4" stroke-linejoin="round"/>
<rect x="226.0" y="588.8" width="4.8" height="32.5" fill="#5aa800" stroke="#6ef000" stroke-width="1"/>
<polygon points="221.0,620.3 235.8,620.3 228.4,639.3" fill="#5aa800" stroke="#6ef000" stroke-width="1.4" stroke-linejoin="round"/>
<rect x="251.5" y="588.7" width="4.8" height="32.5" fill="#5aa800" stroke="#6ef000" stroke-width="1"/>
<polygon points="246.5,620.2 261.3,620.2 253.9,639.2" fill="#5aa800" stroke="#6ef000" stroke-width="1.4" stroke-linejoin="round"/>
<rect x="277.0" y="588.5" width="4.8" height="32.5" fill="#5aa800" stroke="#6ef000" stroke-width="1"/>
<polygon points="272.0,620.0 286.8,620.0 279.4,639.0" fill="#5aa800" stroke="#6ef000" stroke-width="1.4" stroke-linejoin="round"/>
<rect x="302.5" y="588.4" width="4.8" height="32.5" fill="#5aa800" stroke="#6ef000" stroke-width="1"/>
<polygon points="297.5,619.9 312.3,619.9 304.9,638.9" fill="#5aa800" stroke="#6ef000" stroke-width="1.4" stroke-linejoin="round"/>
<rect x="328.0" y="588.2" width="4.8" height="32.5" fill="#5aa800" stroke="#6ef000" stroke-width="1"/>
<polygon points="323.0,619.7 337.8,619.7 330.4,638.7" fill="#5aa800" stroke="#6ef000" stroke-width="1.4" stroke-linejoin="round"/>
<rect x="353.5" y="588.1" width="4.8" height="32.5" fill="#5aa800" stroke="#6ef000" stroke-width="1"/>
<polygon points="348.5,619.6 363.3,619.6 355.9,638.6" fill="#5aa800" stroke="#6ef000" stroke-width="1.4" stroke-linejoin="round"/>
<rect x="379.0" y="587.9" width="4.8" height="32.5" fill="#5aa800" stroke="#6ef000" stroke-width="1"/>
<polygon points="374.0,619.4 388.8,619.4 381.4,638.4" fill="#5aa800" stroke="#6ef000" stroke-width="1.4" stroke-linejoin="round"/>
<rect x="404.5" y="587.8" width="4.8" height="32.5" fill="#5aa800" stroke="#6ef000" stroke-width="1"/>
<polygon points="399.5,619.3 414.3,619.3 406.9,638.3" fill="#5aa800" stroke="#6ef000" stroke-width="1.4" stroke-linejoin="round"/>
<rect x="430.0" y="587.6" width="4.8" height="32.5" fill="#5aa800" stroke="#6ef000" stroke-width="1"/>
<polygon points="425.0,619.1 439.8,619.1 432.4,638.1" fill="#5aa800" stroke="#6ef000" stroke-width="1.4" stroke-linejoin="round"/>
<rect x="455.5" y="587.5" width="4.8" height="32.5" fill="#5aa800" stroke="#6ef000" stroke-width="1"/>
<polygon points="450.5,619.0 465.3,619.0 457.9,638.0" fill="#5aa800" stroke="#6ef000" stroke-width="1.4" stroke-linejoin="round"/>
<rect x="481.0" y="587.3" width="4.8" height="32.5" fill="#5aa800" stroke="#6ef000" stroke-width="1"/>
<polygon points="476.0,618.8 490.8,618.8 483.4,637.8" fill="#5aa800" stroke="#6ef000" stroke-width="1.4" stroke-linejoin="round"/>
<rect x="506.5" y="587.2" width="4.8" height="32.5" fill="#5aa800" stroke="#6ef000" stroke-width="1"/>
<polygon points="501.5,618.7 516.3,618.7 508.9,637.7" fill="#5aa800" stroke="#6ef000" stroke-width="1.4" stroke-linejoin="round"/>
<rect x="532.0" y="587.0" width="4.8" height="32.5" fill="#5aa800" stroke="#6ef000" stroke-width="1"/>
<polygon points="527.0,618.5 541.8,618.5 534.4,637.5" fill="#5aa800" stroke="#6ef000" stroke-width="1.4" stroke-linejoin="round"/>
<rect x="557.5" y="586.9" width="4.8" height="32.5" fill="#5aa800" stroke="#6ef000" stroke-width="1"/>
<polygon points="552.5,618.4 567.3,618.4 559.9,637.4" fill="#5aa800" stroke="#6ef000" stroke-width="1.4" stroke-linejoin="round"/>
<rect x="583.0" y="586.7" width="4.8" height="32.5" fill="#5aa800" stroke="#6ef000" stroke-width="1"/>
<polygon points="578.0,618.2 592.8,618.2 585.4,637.2" fill="#5aa800" stroke="#6ef000" stroke-width="1.4" stroke-linejoin="round"/>
<rect x="608.5" y="586.6" width="4.8" height="32.5" fill="#5aa800" stroke="#6ef000" stroke-width="1"/>
<polygon points="603.5,618.1 618.3,618.1 610.9,637.1" fill="#5aa800" stroke="#6ef000" stroke-width="1.4" stroke-linejoin="round"/>
<rect x="634.0" y="586.4" width="4.8" height="32.5" fill="#5aa800" stroke="#6ef000" stroke-width="1"/>
<polygon points="629.0,617.9 643.8,617.9 636.4,636.9" fill="#5aa800" stroke="#6ef000" stroke-width="1.4" stroke-linejoin="round"/>
<rect x="659.5" y="586.3" width="4.8" height="32.5" fill="#5aa800" stroke="#6ef000" stroke-width="1"/>
<polygon points="654.5,617.8 669.3,617.8 661.9,636.8" fill="#5aa800" stroke="#6ef000" stroke-width="1.4" stroke-linejoin="round"/>
<rect x="685.0" y="586.1" width="4.8" height="32.5" fill="#5aa800" stroke="#6ef000" stroke-width="1"/>
<polygon points="680.0,617.6 694.8,617.6 687.4,636.6" fill="#5aa800" stroke="#6ef000" stroke-width="1.4" stroke-linejoin="round"/>
<polygon points="711.5,681.7 720.5,680.1 741.5,684.3 741.5,686.7 720.5,685.1" fill="#70f000" />
<polygon points="720.6,678.5 729.6,676.9 750.6,681.1 750.6,683.5 729.6,681.9" fill="#70f000" />
<polygon points="729.8,675.3 738.8,673.7 759.8,677.9 759.8,680.3 738.8,678.7" fill="#70f000" />
<polygon points="738.9,672.1 747.9,670.5 768.9,674.7 768.9,677.1 747.9,675.5" fill="#70f000" />
<polygon points="748.0,668.9 757.0,667.3 778.0,671.5 778.0,673.9 757.0,672.3" fill="#70f000" />
<polygon points="757.1,665.7 766.1,664.1 787.1,668.3 787.1,670.7 766.1,669.1" fill="#70f000" />
<polygon points="766.3,662.5 775.3,660.9 796.3,665.1 796.3,667.5 775.3,665.9" fill="#70f000" />
<polygon points="775.4,659.3 784.4,657.7 805.4,661.9 805.4,664.3 784.4,662.7" fill="#70f000" />
<polygon points="784.5,656.1 793.5,654.5 814.5,658.7 814.5,661.1 793.5,659.5" fill="#70f000" />
<polygon points="793.7,652.9 802.7,651.3 823.7,655.5 823.7,657.9 802.7,656.3" fill="#70f000" />
<polygon points="802.8,649.7 811.8,648.1 832.8,652.3 832.8,654.7 811.8,653.1" fill="#70f000" />
<polygon points="811.9,646.5 820.9,644.9 841.9,649.1 841.9,651.5 820.9,649.9" fill="#70f000" />
<polygon points="821.1,643.4 830.1,641.8 851.1,646.0 851.1,648.4 830.1,646.8" fill="#70f000" />
<polygon points="830.2,640.2 839.2,638.6 860.2,642.8 860.2,645.2 839.2,643.6" fill="#70f000" />
<polygon points="839.3,637.0 848.3,635.4 869.3,639.6 869.3,642.0 848.3,640.4" fill="#70f000" />
<polygon points="848.5,633.8 857.5,632.2 878.5,636.4 878.5,638.8 857.5,637.2" fill="#70f000" />
<polygon points="857.6,630.6 866.6,629.0 887.6,633.2 887.6,635.6 866.6,634.0" fill="#70f000" />
<polygon points="866.7,627.4 875.7,625.8 896.7,630.0 896.7,632.4 875.7,630.8" fill="#70f000" />
<polygon points="875.8,624.2 884.8,622.6 905.8,626.8 905.8,629.2 884.8,627.6" fill="#70f000" />
<polygon points="885.0,621.0 894.0,619.4 915.0,623.6 915.0,626.0 894.0,624.4" fill="#70f000" />
<polygon points="894.1,617.8 903.1,616.2 924.1,620.4 924.1,622.8 903.1,621.2" fill="#70f000" />
<polygon points="903.2,614.6 912.2,613.0 933.2,617.2 933.2,619.6 912.2,618.0" fill="#70f000" />
<polygon points="912.4,611.4 921.4,609.8 942.4,614.0 942.4,616.4 921.4,614.8" fill="#70f000" />
<polygon points="921.5,608.2 930.5,606.6 951.5,610.8 951.5,613.2 930.5,611.6" fill="#70f000" />
<polygon points="930.6,605.0 939.6,603.4 960.6,607.6 960.6,610.0 939.6,608.4" fill="#70f000" />
<polygon points="939.8,601.8 948.8,600.2 969.8,604.4 969.8,606.8 948.8,605.2" fill="#70f000" />
<polygon points="948.9,598.6 957.9,597.0 978.9,601.2 978.9,603.6 957.9,602.0" fill="#70f000" />
<polygon points="958.0,595.4 967.0,593.8 988.0,598.0 988.0,600.4 967.0,598.8" fill="#70f000" />
<polygon points="967.1,592.2 976.1,590.6 997.1,594.8 997.1,597.2 976.1,595.6" fill="#70f000" />
<polygon points="976.3,589.0 985.3,587.4 1006.3,591.6 1006.3,594.0 985.3,592.4" fill="#70f000" />
<polygon points="985.4,585.8 994.4,584.2 1015.4,588.4 1015.4,590.8 994.4,589.2" fill="#70f000" />
<polygon points="994.5,582.6 1003.5,581.0 1024.5,585.2 1024.5,587.6 1003.5,586.0" fill="#70f000" />
<polygon points="1003.7,579.4 1012.7,577.8 1033.7,582.0 1033.7,584.4 1012.7,582.8" fill="#70f000" />
<polygon points="1012.8,576.2 1021.8,574.6 1042.8,578.8 1042.8,581.2 1021.8,579.6" fill="#70f000" />
<polygon points="1021.9,573.1 1030.9,571.5 1051.9,575.7 1051.9,578.1 1030.9,576.5" fill="#70f000" />
<polygon points="1031.0,569.9 1040.0,568.3 1061.0,572.5 1061.0,574.9 1040.0,573.3" fill="#70f000" />
<polygon points="1040.2,566.7 1049.2,565.1 1070.2,569.3 1070.2,571.7 1049.2,570.1" fill="#70f000" />
<polygon points="1049.3,563.5 1058.3,561.9 1079.3,566.1 1079.3,568.5 1058.3,566.9" fill="#70f000" />
<polygon points="1058.4,560.3 1067.4,558.7 1088.4,562.9 1088.4,565.3 1067.4,563.7" fill="#70f000" />
<polygon points="1067.6,557.1 1076.6,555.5 1097.6,559.7 1097.6,562.1 1076.6,560.5" fill="#70f000" />
<polygon points="1076.7,553.9 1085.7,552.3 1106.7,556.5 1106.7,558.9 1085.7,557.3" fill="#70f000" />
<polygon points="1085.8,550.7 1094.8,549.1 1115.8,553.3 1115.8,555.7 1094.8,554.1" fill="#70f000" />
<polygon points="1095.0,547.5 1104.0,545.9 1125.0,550.1 1125.0,552.5 1104.0,550.9" fill="#70f000" />
<polygon points="1104.1,544.3 1113.1,542.7 1134.1,546.9 1134.1,549.3 1113.1,547.7" fill="#70f000" />
<polygon points="1113.2,541.1 1122.2,539.5 1143.2,543.7 1143.2,546.1 1122.2,544.5" fill="#70f000" />
<polygon points="1122.3,537.9 1131.3,536.3 1152.3,540.5 1152.3,542.9 1131.3,541.3" fill="#70f000" />
<polygon points="1131.5,534.7 1140.5,533.1 1161.5,537.3 1161.5,539.7 1140.5,538.1" fill="#70f000" />
<polygon points="1140.6,531.5 1149.6,529.9 1170.6,534.1 1170.6,536.5 1149.6,534.9" fill="#70f000" />
<polygon points="1149.7,528.3 1158.7,526.7 1179.7,530.9 1179.7,533.3 1158.7,531.7" fill="#70f000" />
<polygon points="1158.9,525.1 1167.9,523.5 1188.9,527.7 1188.9,530.1 1167.9,528.5" fill="#70f000" />
<g fill="none" stroke="#3f9450" stroke-width="1">
<ellipse cx="154.9" cy="264.4" rx="4.8" ry="9" transform="rotate(5 154.9 264.4)"/>
<ellipse cx="163.6" cy="272.6" rx="7.5" ry="9" transform="rotate(-20 163.6 272.6)"/>
<ellipse cx="177.5" cy="293.3" rx="9" ry="2.3"/>
<path d="M155 264 L177 268 M165 272 L177 268 M177.5 270 V293"/>
</g>
<g fill="none" stroke="#3f9450" stroke-width="1">
<ellipse cx="297.2" cy="330.8" rx="4.7" ry="8.9" transform="rotate(5 297.2 330.8)"/>
<ellipse cx="306" cy="339.2" rx="7" ry="8.5" transform="rotate(-20 306 339.2)"/>
<ellipse cx="320" cy="360" rx="9" ry="2.3"/>
<path d="M297 331 L320 336 M306 339 L320 336 M320 343 V360"/>
</g>
<g fill="none" stroke="#3f9450" stroke-width="1">
<ellipse cx="1197" cy="306.8" rx="4.5" ry="8.8" transform="rotate(5 1197 306.8)"/>
<ellipse cx="1233.8" cy="305" rx="7.3" ry="8.8" transform="rotate(-10 1233.8 305)"/>
<ellipse cx="1219.4" cy="336.1" rx="9" ry="2.3"/>
<path d="M1197 307.5 L1219.4 310.5 L1233.8 305 M1219.4 311 V336"/>
</g>
<g stroke-linejoin="round">
<polygon points="919.4,862.0 925.0,862.0 924.6,914.0 919.8,914.0" fill="#1c3d0c" stroke="#66f000" stroke-width="1.3" />
<polygon points="916.3,851.5 931.0,854.0 929.4,861.0 913.4,864.5" fill="#1c3d0c" stroke="#66f000" stroke-width="1.5" />
<polygon points="905.0,838.0 936.0,831.0 937.0,851.0 912.0,853.0" fill="#121a0c" stroke="#66f000" stroke-width="1.2" />
<polygon points="926.0,832.0 937.0,831.0 935.0,837.0 927.0,838.0" fill="#111" stroke="#66f000" stroke-width="1.0" />
<polygon points="896.3,836.3 930.6,827.0 931.5,831.0 897.0,840.5" fill="#1c3d0c" stroke="#66f000" stroke-width="1.5" />
<polygon points="903.0,833.0 912.0,842.0 906.0,844.0" fill="#2a6010" stroke="#66f000" stroke-width="1.0" />
<polygon points="916.3,826.3 943.1,823.8 938.1,831.3 918.0,829.5" fill="#1c3d0c" stroke="#66f000" stroke-width="1.3" />
<ellipse cx="899" cy="827.5" rx="4.5" ry="8.5" fill="none" stroke="#4a9a8a" stroke-width="0.8"/>
<path d="M899 827.5 L915 830" stroke="#4a9a8a" stroke-width="0.8"/>
</g>
<rect x="943.2" y="809.1" width="25.7" height="14.5" fill="#d6d6d6"/>
<text x="956.0" y="820.4" font-family="Liberation Sans" font-size="11" fill="#000" text-anchor="middle">50.0</text>
<rect x="867.8" y="835.1" width="26.0" height="14.9" fill="#d6d6d6"/>
<text x="880.8" y="846.8" font-family="Liberation Sans" font-size="11" fill="#000" text-anchor="middle">50.0</text>
<rect x="912.1" y="835.1" width="25.3" height="14.9" fill="#d6d6d6"/>
<text x="924.8" y="846.8" font-family="Liberation Sans" font-size="11" fill="#000" text-anchor="middle">20.0</text>
<rect x="937.4" y="835.1" width="24.5" height="14.9" fill="#d6d6d6"/>
<text x="949.6" y="846.8" font-family="Liberation Sans" font-size="11" fill="#000" text-anchor="middle">20.0</text>
<ellipse cx="1379.8" cy="263.2" rx="43" ry="12.8" fill="#dcdcdc"/>
<ellipse cx="1380.5" cy="262" rx="33" ry="8.7" fill="#fff"/>
<polygon points="1352.2,224.1 1374.1,222.1 1405.7,223.5 1404.7,258.1 1386.9,271.2 1353.2,262.5" fill="#b6b6b6" />
<polygon points="1387.2,226.5 1405.7,223.5 1404.7,258.1 1386.9,271.2" fill="#b0b0b0" />
<g fill="none" stroke="#858585" stroke-width="0.9">
<path d="M1352.2 224.1 L1374.1 222.1 L1405.7 223.5 L1387.2 226.5 Z M1352.2 224.1 L1353.2 262.5 L1386.9 271.2 L1404.7 258.1 L1405.7 223.5 M1387.2 226.5 L1386.9 271.2 M1374.1 222.1 L1374.4 253.4 L1353.2 262.5 M1374.4 253.4 L1404.7 258.1"/>
</g>
<text x="1369" y="251" font-family="Liberation Sans" font-size="8" fill="#fff" text-anchor="middle">-X</text>
<path d="M1345 251 h6 M1348 251 l2 2 M1345 272 l-6 3 M1412 266 h8 l2 2" stroke="#888" stroke-width="0.7" fill="none" stroke-dasharray="2 1"/>
</svg>
<div class="a" style="left:1262px;top:305px;width:178px;height:705px;background:#fff"></div>
<svg class="a" style="left:1260px;top:300px" width="180" height="710" viewBox="1260 300 180 710">
<rect x="1405" y="605" width="15" height="400" fill="#e9e9e9"/>
<path d="M1405.5 308 V605 H1420" fill="none" stroke="#a8a8a8" stroke-width="1"/>
<path d="M1406 322.5 H1420" stroke="#a8a8a8" stroke-width="1"/>
<path d="M1409.5 318 L1413 313.5 L1416.5 318z" fill="#333"/>
<rect x="1405.5" y="990.5" width="14" height="14" fill="#fff" stroke="#b0b0b0"/>
<path d="M1409.5 996 L1413 1000.5 L1416.5 996z" fill="#333"/>
<path d="M1270 321 H1276 V315z" fill="#333"/>
<path d="M1270 409 H1276 V403z" fill="#333"/>
<path d="M1270 563 H1276 V557z" fill="#333"/>
<path d="M1282 572 H1390 L1405 582 L1390 592 H1282z" fill="#f76d22"/>
<path d="M1270 600 L1275 604 L1270 608z" fill="#333"/>
<path d="M1270 629 H1276 V623z" fill="#333"/>
<path d="M1289 651 H1295 V645z" fill="#333"/>
<path d="M1289 783 H1295 V777z" fill="#333"/>
<path d="M1289 1003 H1295 V997z" fill="#333"/>
</svg>
<div class="a" style="left:1292px;top:313.14px;font-size:12px;line-height:12px;font-weight:bold;color:#333;font-style:normal;white-space:nowrap;letter-spacing:-0.15px">Analyzed members</div>
<div class="a" style="left:1291px;top:335.14px;font-size:12px;line-height:12px;font-weight:normal;color:#444;font-style:normal;white-space:nowrap;letter-spacing:-0.4px">AM1</div>
<div class="a" style="left:1291px;top:357.14px;font-size:12px;line-height:12px;font-weight:normal;color:#444;font-style:normal;white-space:nowrap;letter-spacing:-0.4px">AM2</div>
<div class="a" style="left:1291px;top:379.14px;font-size:12px;line-height:12px;font-weight:normal;color:#444;font-style:normal;white-space:nowrap;letter-spacing:-0.4px">AM3</div>
<div class="a" style="left:1292px;top:401.14px;font-size:12px;line-height:12px;font-weight:bold;color:#333;font-style:normal;white-space:nowrap;letter-spacing:-0.15px">Related members</div>
<div class="a" style="left:1291px;top:423.14px;font-size:12px;line-height:12px;font-weight:normal;color:#444;font-style:normal;white-space:nowrap;letter-spacing:-0.4px">RM4</div>
<div class="a" style="left:1291px;top:445.14px;font-size:12px;line-height:12px;font-weight:normal;color:#444;font-style:normal;white-space:nowrap;letter-spacing:-0.4px">RM5</div>
<div class="a" style="left:1291px;top:467.14px;font-size:12px;line-height:12px;font-weight:normal;color:#444;font-style:normal;white-space:nowrap;letter-spacing:-0.4px">RM6</div>
<div class="a" style="left:1291px;top:489.14px;font-size:12px;line-height:12px;font-weight:normal;color:#444;font-style:normal;white-space:nowrap;letter-spacing:-0.4px">RM7</div>
<div class="a" style="left:1291px;top:511.14px;font-size:12px;line-height:12px;font-weight:normal;color:#444;font-style:normal;white-space:nowrap;letter-spacing:-0.4px">RM8</div>
<div class="a" style="left:1291px;top:533.14px;font-size:12px;line-height:12px;font-weight:normal;color:#444;font-style:normal;white-space:nowrap;letter-spacing:-0.4px">RM9</div>
<div class="a" style="left:1292px;top:555.14px;font-size:12px;line-height:12px;font-weight:bold;color:#333;font-style:normal;white-space:nowrap;letter-spacing:-0.15px">Loads</div>
<div class="a" style="left:1291px;top:577.14px;font-size:12px;line-height:12px;font-weight:normal;color:#fff;font-style:normal;white-space:nowrap;letter-spacing:-0.4px">LE1</div>
<div class="a" style="left:1292px;top:599.14px;font-size:12px;line-height:12px;font-weight:bold;color:#333;font-style:normal;white-space:nowrap;letter-spacing:-0.15px">Connections</div>
<div class="a" style="left:1292px;top:621.14px;font-size:12px;line-height:12px;font-weight:bold;color:#333;font-style:normal;white-space:nowrap;letter-spacing:-0.15px">Reinforcement</div>
<div class="a" style="left:1312px;top:643.14px;font-size:12px;line-height:12px;font-weight:bold;color:#333;font-style:normal;white-space:nowrap;letter-spacing:-0.3px">AM1</div>
<div class="a" style="left:1311px;top:665.14px;font-size:12px;line-height:12px;font-weight:normal;color:#444;font-style:normal;white-space:nowrap;letter-spacing:-0.4px">RE1</div>
<div class="a" style="left:1311px;top:687.14px;font-size:12px;line-height:12px;font-weight:normal;color:#444;font-style:normal;white-space:nowrap;letter-spacing:-0.4px">RE2</div>
<div class="a" style="left:1311px;top:709.14px;font-size:12px;line-height:12px;font-weight:normal;color:#444;font-style:normal;white-space:nowrap;letter-spacing:-0.4px">RE3</div>
<div class="a" style="left:1311px;top:731.14px;font-size:12px;line-height:12px;font-weight:normal;color:#444;font-style:normal;white-space:nowrap;letter-spacing:-0.4px">RE4</div>
<div class="a" style="left:1311px;top:753.14px;font-size:12px;line-height:12px;font-weight:normal;color:#444;font-style:normal;white-space:nowrap;letter-spacing:-0.4px">ST1</div>
<div class="a" style="left:1312px;top:775.14px;font-size:12px;line-height:12px;font-weight:bold;color:#333;font-style:normal;white-space:nowrap;letter-spacing:-0.3px">AM2</div>
<div class="a" style="left:1311px;top:797.14px;font-size:12px;line-height:12px;font-weight:normal;color:#444;font-style:normal;white-space:nowrap;letter-spacing:-0.4px">RE1</div>
<div class="a" style="left:1311px;top:819.14px;font-size:12px;line-height:12px;font-weight:normal;color:#444;font-style:normal;white-space:nowrap;letter-spacing:-0.4px">RE2</div>
<div class="a" style="left:1311px;top:841.14px;font-size:12px;line-height:12px;font-weight:normal;color:#444;font-style:normal;white-space:nowrap;letter-spacing:-0.4px">RE3</div>
<div class="a" style="left:1311px;top:863.14px;font-size:12px;line-height:12px;font-weight:normal;color:#444;font-style:normal;white-space:nowrap;letter-spacing:-0.4px">RE4</div>
<div class="a" style="left:1311px;top:885.14px;font-size:12px;line-height:12px;font-weight:normal;color:#444;font-style:normal;white-space:nowrap;letter-spacing:-0.4px">RE5</div>
<div class="a" style="left:1311px;top:907.14px;font-size:12px;line-height:12px;font-weight:normal;color:#444;font-style:normal;white-space:nowrap;letter-spacing:-0.4px">RE6</div>
<div class="a" style="left:1311px;top:929.14px;font-size:12px;line-height:12px;font-weight:normal;color:#444;font-style:normal;white-space:nowrap;letter-spacing:-0.4px">ST1</div>
<div class="a" style="left:1311px;top:951.14px;font-size:12px;line-height:12px;font-weight:normal;color:#444;font-style:normal;white-space:nowrap;letter-spacing:-0.4px">ST2</div>
<div class="a" style="left:1311px;top:973.14px;font-size:12px;line-height:12px;font-weight:normal;color:#444;font-style:normal;white-space:nowrap;letter-spacing:-0.4px">ST3</div>
<div class="a" style="left:1312px;top:995.14px;font-size:12px;line-height:12px;font-weight:bold;color:#333;font-style:normal;white-space:nowrap;letter-spacing:-0.3px">AM3</div>
<div id="split" class="a"></div>
<div id="rhead" class="a"></div>
<div class="a" style="left:1456px;top:164.84px;font-size:12px;line-height:12px;font-weight:bold;color:#fff;font-style:normal;white-space:nowrap;letter-spacing:-0.8px">LE1</div>
<div class="a" style="left:1485px;top:164.84px;font-size:12px;line-height:12px;font-weight:normal;color:#fff;font-style:normal;white-space:nowrap;">[Load]</div>
<div class="a" style="left:1510px;width:400px;text-align:right;top:164.84px;font-size:12px;line-height:12px;font-weight:bold;color:#fff;font-style:normal;white-space:nowrap;">Delete</div>
<div class="a" style="left:1463px;width:400px;text-align:right;top:164.84px;font-size:12px;line-height:12px;font-weight:bold;color:#fff;font-style:normal;white-space:nowrap;letter-spacing:-0.5px">Copy</div>
<div class="a" style="left:1463px;top:204px;width:0;height:0;border-left:5px solid transparent;border-right:5px solid transparent;border-top:7px solid #f76d22"></div>
<div class="a" style="left:1490px;top:200.65px;font-size:14px;line-height:14px;font-weight:bold;color:#f76d22;font-style:normal;white-space:nowrap;">Properties</div>
<div class="a" style="left:1490px;top:227.84px;font-size:12px;line-height:12px;font-weight:normal;color:#222;font-style:normal;white-space:nowrap;letter-spacing:-0.2px">Check type</div>
<div class="a" style="left:1553px;top:223px;width:356px;height:21px;background:#e5e5e5"></div>
<div class="a" style="left:1559px;top:227.84px;font-size:12px;line-height:12px;font-weight:normal;color:#222;font-style:normal;white-space:nowrap;">ULS</div>
<div class="a" style="left:1897px;top:231px;width:0;height:0;border-left:3.5px solid transparent;border-right:3.5px solid transparent;border-top:5px solid #111"></div>
<div class="a" style="left:1456px;top:275.15px;font-size:14px;line-height:14px;font-weight:bold;color:#f76d22;font-style:normal;white-space:nowrap;letter-spacing:-0.2px">Line loads</div>
<svg class="a" style="left:1533px;top:272px" width="90" height="22" viewBox="0 0 90 22">
<rect x="0" y="0" width="22" height="20" fill="#8a8a8a"/>
<path d="M10.9 3.3 V16.8 M3.9 10 H17.9" stroke="#fff" stroke-width="3.8"/>
<rect x="32" y="0" width="22" height="20" fill="#8a8a8a"/>
<path d="M41.9 10.6 L45 7.7 H48.6 V16.6 H41.9z M47.1 7.7 V3.3 H41.9 L38.2 6.4 V14.2 H41.4" fill="none" stroke="#fff" stroke-width="1.1" stroke-linejoin="round"/>
<rect x="64" y="0" width="22" height="20" fill="#8a8a8a"/>
<path d="M69 5 L81 16.3 M81 5 L69 16.3" stroke="#fff" stroke-width="3.6"/>
</svg>
<div class="a" style="left:1456px;top:294px;width:455px;height:35px;background:#f0f0f0"></div>
<div class="a" style="left:1457px;top:329px;width:453px;height:29px;background:#e6e6e6"></div>
<svg class="a" style="left:0;top:0" width="1920" height="440" viewBox="0 0 1920 440">
<path d="M1456 294.5 V415.5" stroke="#c4c4c4" stroke-width="1"/>
<path d="M1485.5 294.5 V415.5" stroke="#c4c4c4" stroke-width="1"/>
<path d="M1545.5 294.5 V415.5" stroke="#c4c4c4" stroke-width="1"/>
<path d="M1589.5 294.5 V415.5" stroke="#c4c4c4" stroke-width="1"/>
<path d="M1621.5 294.5 V415.5" stroke="#c4c4c4" stroke-width="1"/>
<path d="M1673.5 294.5 V415.5" stroke="#c4c4c4" stroke-width="1"/>
<path d="M1725.5 294.5 V415.5" stroke="#c4c4c4" stroke-width="1"/>
<path d="M1777.5 294.5 V415.5" stroke="#c4c4c4" stroke-width="1"/>
<path d="M1859.5 294.5 V415.5" stroke="#c4c4c4" stroke-width="1"/>
<path d="M1905.5 294.5 V415.5" stroke="#c4c4c4" stroke-width="1"/>
<path d="M1910.5 294.5 V432.5 M1456.5 294.5 V432.5" stroke="#bcbcbc" stroke-width="1"/>
<path d="M1456 294.5 H1911" stroke="#c4c4c4" stroke-width="1"/>
<path d="M1456 328.5 H1911" stroke="#c4c4c4" stroke-width="1"/>
<path d="M1456 357.5 H1911" stroke="#c4c4c4" stroke-width="1"/>
<path d="M1456 386.5 H1911" stroke="#c4c4c4" stroke-width="1"/>
<path d="M1456 415.5 H1911" stroke="#c4c4c4" stroke-width="1"/>
<path d="M1456 432.5 H1911" stroke="#bcbcbc" stroke-width="1"/>
<rect x="1472.5" y="417.5" width="358" height="14" fill="#fff" stroke="#c8c8c8"/>
<rect x="1831" y="418" width="64" height="14" fill="#eaeaea"/>
<path d="M1896.5 417.5 V432" stroke="#c8c8c8"/>
<path d="M1462 424.5 L1466 421.5 V427.5z M1904 424.5 L1900 421.5 V427.5z" fill="#222"/>
<path d="M1468 338 L1472 342.5 L1468 347" fill="none" stroke="#333" stroke-width="1.3"/>
<rect x="1490.5" y="331.5" width="51" height="24" fill="#fff" stroke="#a8a8a8"/>
<path d="M1529 341 h7 l-3.5 4.5z" fill="#222"/>
<rect x="1490.5" y="360.5" width="51" height="24" fill="#fff" stroke="#a8a8a8"/>
<path d="M1529 370 h7 l-3.5 4.5z" fill="#222"/>
<rect x="1490.5" y="389.5" width="51" height="24" fill="#fff" stroke="#a8a8a8"/>
<path d="M1529 399 h7 l-3.5 4.5z" fill="#222"/>
</svg>
<div class="a" style="left:1490.5px;top:306.84px;font-size:12px;line-height:12px;font-weight:bold;color:#333;font-style:normal;white-space:nowrap;letter-spacing:-0.3px">Member</div>
<div class="a" style="left:1550px;top:299.34px;font-size:12px;line-height:12px;font-weight:bold;color:#333;font-style:normal;white-space:nowrap;letter-spacing:-0.3px">Begin</div>
<div class="a" style="left:1550px;top:314.34px;font-size:12px;line-height:12px;font-weight:bold;color:#333;font-style:normal;white-space:nowrap;letter-spacing:-0.3px">[m]</div>
<div class="a" style="left:1594px;top:299.34px;font-size:12px;line-height:12px;font-weight:bold;color:#333;font-style:normal;white-space:nowrap;letter-spacing:-0.3px">End</div>
<div class="a" style="left:1594px;top:314.34px;font-size:12px;line-height:12px;font-weight:bold;color:#333;font-style:normal;white-space:nowrap;letter-spacing:-0.3px">[m]</div>
<div class="a" style="left:1626px;top:299.34px;font-size:12px;line-height:12px;font-weight:bold;color:#333;font-style:normal;white-space:nowrap;letter-spacing:-0.3px">X</div>
<div class="a" style="left:1626px;top:314.34px;font-size:12px;line-height:12px;font-weight:bold;color:#333;font-style:normal;white-space:nowrap;letter-spacing:-0.3px">[kN/m]</div>
<div class="a" style="left:1678px;top:299.34px;font-size:12px;line-height:12px;font-weight:bold;color:#333;font-style:normal;white-space:nowrap;letter-spacing:-0.3px">Y</div>
<div class="a" style="left:1678px;top:314.34px;font-size:12px;line-height:12px;font-weight:bold;color:#333;font-style:normal;white-space:nowrap;letter-spacing:-0.3px">[kN/m]</div>
<div class="a" style="left:1730px;top:299.34px;font-size:12px;line-height:12px;font-weight:bold;color:#333;font-style:normal;white-space:nowrap;letter-spacing:-0.3px">Z</div>
<div class="a" style="left:1730px;top:314.34px;font-size:12px;line-height:12px;font-weight:bold;color:#333;font-style:normal;white-space:nowrap;letter-spacing:-0.3px">[kN/m]</div>
<div class="a" style="left:1782px;top:306.84px;font-size:12px;line-height:12px;font-weight:bold;color:#333;font-style:normal;white-space:nowrap;letter-spacing:-0.3px">Location</div>
<div class="a" style="left:1864px;top:299.34px;font-size:12px;line-height:12px;font-weight:bold;color:#333;font-style:normal;white-space:nowrap;letter-spacing:-0.3px">Width</div>
<div class="a" style="left:1864px;top:314.34px;font-size:12px;line-height:12px;font-weight:bold;color:#333;font-style:normal;white-space:nowrap;letter-spacing:-0.3px">[mm]</div>
<div class="a" style="left:1495px;top:337.84px;font-size:12px;line-height:12px;font-weight:normal;color:#333;font-style:normal;white-space:nowrap;letter-spacing:-0.3px">AM1</div>
<div class="a" style="left:1550px;top:337.84px;font-size:12px;line-height:12px;font-weight:normal;color:#333;font-style:normal;white-space:nowrap;letter-spacing:-0.3px">0.00</div>
<div class="a" style="left:1594px;top:337.84px;font-size:12px;line-height:12px;font-weight:normal;color:#333;font-style:normal;white-space:nowrap;letter-spacing:-0.3px">3.61</div>
<div class="a" style="left:1626px;top:337.84px;font-size:12px;line-height:12px;font-weight:normal;color:#333;font-style:normal;white-space:nowrap;letter-spacing:-0.3px">0.0</div>
<div class="a" style="left:1678px;top:337.84px;font-size:12px;line-height:12px;font-weight:normal;color:#333;font-style:normal;white-space:nowrap;letter-spacing:-0.3px">0.0</div>
<div class="a" style="left:1730px;top:337.84px;font-size:12px;line-height:12px;font-weight:normal;color:#333;font-style:normal;white-space:nowrap;letter-spacing:-0.3px">-30.0</div>
<div class="a" style="left:1785px;top:338.84px;font-size:12px;line-height:12px;font-weight:normal;color:#333;font-style:normal;white-space:nowrap;letter-spacing:-0.3px">Member axis</div>
<div class="a" style="left:1864px;top:337.84px;font-size:12px;line-height:12px;font-weight:normal;color:#333;font-style:normal;white-space:nowrap;letter-spacing:-0.3px">0</div>
<div class="a" style="left:1495px;top:366.84px;font-size:12px;line-height:12px;font-weight:normal;color:#333;font-style:normal;white-space:nowrap;letter-spacing:-0.3px">AM2</div>
<div class="a" style="left:1550px;top:366.84px;font-size:12px;line-height:12px;font-weight:normal;color:#333;font-style:normal;white-space:nowrap;letter-spacing:-0.3px">0.00</div>
<div class="a" style="left:1594px;top:366.84px;font-size:12px;line-height:12px;font-weight:normal;color:#333;font-style:normal;white-space:nowrap;letter-spacing:-0.3px">6.00</div>
<div class="a" style="left:1626px;top:366.84px;font-size:12px;line-height:12px;font-weight:normal;color:#333;font-style:normal;white-space:nowrap;letter-spacing:-0.3px">15.0</div>
<div class="a" style="left:1678px;top:366.84px;font-size:12px;line-height:12px;font-weight:normal;color:#333;font-style:normal;white-space:nowrap;letter-spacing:-0.3px">-20.0</div>
<div class="a" style="left:1730px;top:366.84px;font-size:12px;line-height:12px;font-weight:normal;color:#333;font-style:normal;white-space:nowrap;letter-spacing:-0.3px">-30.0</div>
<div class="a" style="left:1785px;top:367.84px;font-size:12px;line-height:12px;font-weight:normal;color:#333;font-style:normal;white-space:nowrap;letter-spacing:-0.3px">Member axis</div>
<div class="a" style="left:1864px;top:366.84px;font-size:12px;line-height:12px;font-weight:normal;color:#333;font-style:normal;white-space:nowrap;letter-spacing:-0.3px">0</div>
<div class="a" style="left:1495px;top:395.84px;font-size:12px;line-height:12px;font-weight:normal;color:#333;font-style:normal;white-space:nowrap;letter-spacing:-0.3px">AM3</div>
<div class="a" style="left:1550px;top:395.84px;font-size:12px;line-height:12px;font-weight:normal;color:#333;font-style:normal;white-space:nowrap;letter-spacing:-0.3px">0.00</div>
<div class="a" style="left:1594px;top:395.84px;font-size:12px;line-height:12px;font-weight:normal;color:#333;font-style:normal;white-space:nowrap;letter-spacing:-0.3px">3.61</div>
<div class="a" style="left:1626px;top:395.84px;font-size:12px;line-height:12px;font-weight:normal;color:#333;font-style:normal;white-space:nowrap;letter-spacing:-0.3px">0.0</div>
<div class="a" style="left:1678px;top:395.84px;font-size:12px;line-height:12px;font-weight:normal;color:#333;font-style:normal;white-space:nowrap;letter-spacing:-0.3px">0.0</div>
<div class="a" style="left:1730px;top:395.84px;font-size:12px;line-height:12px;font-weight:normal;color:#333;font-style:normal;white-space:nowrap;letter-spacing:-0.3px">-30.0</div>
<div class="a" style="left:1785px;top:396.84px;font-size:12px;line-height:12px;font-weight:normal;color:#333;font-style:normal;white-space:nowrap;letter-spacing:-0.3px">Member axis</div>
<div class="a" style="left:1864px;top:395.84px;font-size:12px;line-height:12px;font-weight:normal;color:#333;font-style:normal;white-space:nowrap;letter-spacing:-0.3px">0</div>
<div class="a" style="left:1456px;top:445.85px;font-size:14px;line-height:14px;font-weight:bold;color:#f76d22;font-style:normal;white-space:nowrap;letter-spacing:-0.1px">End forces on related members</div>
<div class="a" style="left:1456px;top:461px;width:352px;height:35px;background:#f0f0f0"></div>
<div class="a" style="left:1486px;top:496px;width:72px;height:29px;background:#ececec"></div>
<svg class="a" style="left:0;top:0" width="1920" height="740" viewBox="0 0 1920 740">
<path d="M1456.5 461.5 V728" stroke="#c4c4c4" stroke-width="1"/>
<path d="M1485.5 461.5 V728" stroke="#c4c4c4" stroke-width="1"/>
<path d="M1558.5 461.5 V728" stroke="#c4c4c4" stroke-width="1"/>
<path d="M1594.5 461.5 V728" stroke="#c4c4c4" stroke-width="1"/>
<path d="M1630.5 461.5 V728" stroke="#c4c4c4" stroke-width="1"/>
<path d="M1666.5 461.5 V728" stroke="#c4c4c4" stroke-width="1"/>
<path d="M1713.5 461.5 V728" stroke="#c4c4c4" stroke-width="1"/>
<path d="M1760.5 461.5 V728" stroke="#c4c4c4" stroke-width="1"/>
<path d="M1807.5 461.5 V728" stroke="#c4c4c4" stroke-width="1"/>
<path d="M1456 461.5 H1808" stroke="#c4c4c4" stroke-width="1"/>
<path d="M1456 495.5 H1808" stroke="#c4c4c4" stroke-width="1"/>
<path d="M1456 524.5 H1808" stroke="#c4c4c4" stroke-width="1"/>
<path d="M1456 553.5 H1808" stroke="#c4c4c4" stroke-width="1"/>
<path d="M1456 582.5 H1808" stroke="#c4c4c4" stroke-width="1"/>
<path d="M1456 611.5 H1808" stroke="#c4c4c4" stroke-width="1"/>
<path d="M1456 640.5 H1808" stroke="#c4c4c4" stroke-width="1"/>
<path d="M1456 669.5 H1808" stroke="#c4c4c4" stroke-width="1"/>
<path d="M1456 698.5 H1808" stroke="#c4c4c4" stroke-width="1"/>
<path d="M1456 728 H1809 M1808 461 V729" stroke="#b4b4b4" stroke-width="2"/>
<rect x="1486.5" y="496.5" width="71" height="28" fill="none" stroke="#f47a30" stroke-width="1.6"/>
<path d="M1468 505.5 L1472 510 L1468 514.5" fill="none" stroke="#333" stroke-width="1.3"/>
</svg>
<div class="a" style="left:1490px;top:473.84px;font-size:12px;line-height:12px;font-weight:bold;color:#333;font-style:normal;white-space:nowrap;letter-spacing:-0.3px">Member</div>
<div class="a" style="left:1563px;top:465.84px;font-size:12px;line-height:12px;font-weight:bold;color:#333;font-style:normal;white-space:nowrap;letter-spacing:-0.3px">N</div>
<div class="a" style="left:1563px;top:480.84px;font-size:12px;line-height:12px;font-weight:bold;color:#333;font-style:normal;white-space:nowrap;letter-spacing:-0.3px">[kN]</div>
<div class="a" style="left:1599px;top:465.84px;font-size:12px;line-height:12px;font-weight:bold;color:#333;font-style:normal;white-space:nowrap;letter-spacing:-0.3px">Vy</div>
<div class="a" style="left:1599px;top:480.84px;font-size:12px;line-height:12px;font-weight:bold;color:#333;font-style:normal;white-space:nowrap;letter-spacing:-0.3px">[kN]</div>
<div class="a" style="left:1635px;top:465.84px;font-size:12px;line-height:12px;font-weight:bold;color:#333;font-style:normal;white-space:nowrap;letter-spacing:-0.3px">Vz</div>
<div class="a" style="left:1635px;top:480.84px;font-size:12px;line-height:12px;font-weight:bold;color:#333;font-style:normal;white-space:nowrap;letter-spacing:-0.3px">[kN]</div>
<div class="a" style="left:1671px;top:465.84px;font-size:12px;line-height:12px;font-weight:bold;color:#333;font-style:normal;white-space:nowrap;letter-spacing:-0.3px">Mx</div>
<div class="a" style="left:1671px;top:480.84px;font-size:12px;line-height:12px;font-weight:bold;color:#333;font-style:normal;white-space:nowrap;letter-spacing:-0.3px">[kNm]</div>
<div class="a" style="left:1718px;top:465.84px;font-size:12px;line-height:12px;font-weight:bold;color:#333;font-style:normal;white-space:nowrap;letter-spacing:-0.3px">My</div>
<div class="a" style="left:1718px;top:480.84px;font-size:12px;line-height:12px;font-weight:bold;color:#333;font-style:normal;white-space:nowrap;letter-spacing:-0.3px">[kNm]</div>
<div class="a" style="left:1765px;top:465.84px;font-size:12px;line-height:12px;font-weight:bold;color:#333;font-style:normal;white-space:nowrap;letter-spacing:-0.3px">Mz</div>
<div class="a" style="left:1765px;top:480.84px;font-size:12px;line-height:12px;font-weight:bold;color:#333;font-style:normal;white-space:nowrap;letter-spacing:-0.3px">[kNm]</div>
<div class="a" style="left:1490px;top:504.84px;font-size:12px;line-height:12px;font-weight:normal;color:#333;font-style:normal;white-space:nowrap;letter-spacing:-0.35px">RM4 / Begin</div>
<div class="a" style="left:1563px;top:504.84px;font-size:12px;line-height:12px;font-weight:normal;color:#333;font-style:normal;white-space:nowrap;letter-spacing:-0.35px">50.0</div>
<div class="a" style="left:1599px;top:504.84px;font-size:12px;line-height:12px;font-weight:normal;color:#333;font-style:normal;white-space:nowrap;letter-spacing:-0.35px">0.0</div>
<div class="a" style="left:1635px;top:504.84px;font-size:12px;line-height:12px;font-weight:normal;color:#333;font-style:normal;white-space:nowrap;letter-spacing:-0.35px">50.0</div>
<div class="a" style="left:1671px;top:504.84px;font-size:12px;line-height:12px;font-weight:normal;color:#333;font-style:normal;white-space:nowrap;letter-spacing:-0.35px">0.0</div>
<div class="a" style="left:1718px;top:504.84px;font-size:12px;line-height:12px;font-weight:normal;color:#333;font-style:normal;white-space:nowrap;letter-spacing:-0.35px">20.0</div>
<div class="a" style="left:1765px;top:504.84px;font-size:12px;line-height:12px;font-weight:normal;color:#333;font-style:normal;white-space:nowrap;letter-spacing:-0.35px">20.0</div>
<div class="a" style="left:1490px;top:533.84px;font-size:12px;line-height:12px;font-weight:normal;color:#333;font-style:normal;white-space:nowrap;letter-spacing:-0.35px">RM4 / End</div>
<div class="a" style="left:1563px;top:533.84px;font-size:12px;line-height:12px;font-weight:normal;color:#333;font-style:normal;white-space:nowrap;letter-spacing:-0.35px">0.0</div>
<div class="a" style="left:1599px;top:533.84px;font-size:12px;line-height:12px;font-weight:normal;color:#333;font-style:normal;white-space:nowrap;letter-spacing:-0.35px">0.0</div>
<div class="a" style="left:1635px;top:533.84px;font-size:12px;line-height:12px;font-weight:normal;color:#333;font-style:normal;white-space:nowrap;letter-spacing:-0.35px">0.0</div>
<div class="a" style="left:1671px;top:533.84px;font-size:12px;line-height:12px;font-weight:normal;color:#333;font-style:normal;white-space:nowrap;letter-spacing:-0.35px">0.0</div>
<div class="a" style="left:1718px;top:533.84px;font-size:12px;line-height:12px;font-weight:normal;color:#333;font-style:normal;white-space:nowrap;letter-spacing:-0.35px">0.0</div>
<div class="a" style="left:1765px;top:533.84px;font-size:12px;line-height:12px;font-weight:normal;color:#333;font-style:normal;white-space:nowrap;letter-spacing:-0.35px">0.0</div>
<div class="a" style="left:1490px;top:562.84px;font-size:12px;line-height:12px;font-weight:normal;color:#333;font-style:normal;white-space:nowrap;letter-spacing:-0.35px">RM5 / Begin</div>
<div class="a" style="left:1563px;top:562.84px;font-size:12px;line-height:12px;font-weight:normal;color:#333;font-style:normal;white-space:nowrap;letter-spacing:-0.35px">0.0</div>
<div class="a" style="left:1599px;top:562.84px;font-size:12px;line-height:12px;font-weight:normal;color:#333;font-style:normal;white-space:nowrap;letter-spacing:-0.35px">0.0</div>
<div class="a" style="left:1635px;top:562.84px;font-size:12px;line-height:12px;font-weight:normal;color:#333;font-style:normal;white-space:nowrap;letter-spacing:-0.35px">0.0</div>
<div class="a" style="left:1671px;top:562.84px;font-size:12px;line-height:12px;font-weight:normal;color:#333;font-style:normal;white-space:nowrap;letter-spacing:-0.35px">0.0</div>
<div class="a" style="left:1718px;top:562.84px;font-size:12px;line-height:12px;font-weight:normal;color:#333;font-style:normal;white-space:nowrap;letter-spacing:-0.35px">0.0</div>
<div class="a" style="left:1765px;top:562.84px;font-size:12px;line-height:12px;font-weight:normal;color:#333;font-style:normal;white-space:nowrap;letter-spacing:-0.35px">0.0</div>
<div class="a" style="left:1490px;top:591.84px;font-size:12px;line-height:12px;font-weight:normal;color:#333;font-style:normal;white-space:nowrap;letter-spacing:-0.35px">RM5 / End</div>
<div class="a" style="left:1563px;top:591.84px;font-size:12px;line-height:12px;font-weight:normal;color:#333;font-style:normal;white-space:nowrap;letter-spacing:-0.35px">0.0</div>
<div class="a" style="left:1599px;top:591.84px;font-size:12px;line-height:12px;font-weight:normal;color:#333;font-style:normal;white-space:nowrap;letter-spacing:-0.35px">0.0</div>
<div class="a" style="left:1635px;top:591.84px;font-size:12px;line-height:12px;font-weight:normal;color:#333;font-style:normal;white-space:nowrap;letter-spacing:-0.35px">0.0</div>
<div class="a" style="left:1671px;top:591.84px;font-size:12px;line-height:12px;font-weight:normal;color:#333;font-style:normal;white-space:nowrap;letter-spacing:-0.35px">0.0</div>
<div class="a" style="left:1718px;top:591.84px;font-size:12px;line-height:12px;font-weight:normal;color:#333;font-style:normal;white-space:nowrap;letter-spacing:-0.35px">0.0</div>
<div class="a" style="left:1765px;top:591.84px;font-size:12px;line-height:12px;font-weight:normal;color:#333;font-style:normal;white-space:nowrap;letter-spacing:-0.35px">0.0</div>
<div class="a" style="left:1490px;top:620.84px;font-size:12px;line-height:12px;font-weight:normal;color:#333;font-style:normal;white-space:nowrap;letter-spacing:-0.35px">RM6 / Begin</div>
<div class="a" style="left:1563px;top:620.84px;font-size:12px;line-height:12px;font-weight:normal;color:#333;font-style:normal;white-space:nowrap;letter-spacing:-0.35px">0.0</div>
<div class="a" style="left:1599px;top:620.84px;font-size:12px;line-height:12px;font-weight:normal;color:#333;font-style:normal;white-space:nowrap;letter-spacing:-0.35px">0.0</div>
<div class="a" style="left:1635px;top:620.84px;font-size:12px;line-height:12px;font-weight:normal;color:#333;font-style:normal;white-space:nowrap;letter-spacing:-0.35px">0.0</div>
<div class="a" style="left:1671px;top:620.84px;font-size:12px;line-height:12px;font-weight:normal;color:#333;font-style:normal;white-space:nowrap;letter-spacing:-0.35px">0.0</div>
<div class="a" style="left:1718px;top:620.84px;font-size:12px;line-height:12px;font-weight:normal;color:#333;font-style:normal;white-space:nowrap;letter-spacing:-0.35px">0.0</div>
<div class="a" style="left:1765px;top:620.84px;font-size:12px;line-height:12px;font-weight:normal;color:#333;font-style:normal;white-space:nowrap;letter-spacing:-0.35px">0.0</div>
<div class="a" style="left:1490px;top:649.84px;font-size:12px;line-height:12px;font-weight:normal;color:#333;font-style:normal;white-space:nowrap;letter-spacing:-0.35px">RM7 / Begin</div>
<div class="a" style="left:1563px;top:649.84px;font-size:12px;line-height:12px;font-weight:normal;color:#333;font-style:normal;white-space:nowrap;letter-spacing:-0.35px">0.0</div>
<div class="a" style="left:1599px;top:649.84px;font-size:12px;line-height:12px;font-weight:normal;color:#333;font-style:normal;white-space:nowrap;letter-spacing:-0.35px">0.0</div>
<div class="a" style="left:1635px;top:649.84px;font-size:12px;line-height:12px;font-weight:normal;color:#333;font-style:normal;white-space:nowrap;letter-spacing:-0.35px">0.0</div>
<div class="a" style="left:1671px;top:649.84px;font-size:12px;line-height:12px;font-weight:normal;color:#333;font-style:normal;white-space:nowrap;letter-spacing:-0.35px">0.0</div>
<div class="a" style="left:1718px;top:649.84px;font-size:12px;line-height:12px;font-weight:normal;color:#333;font-style:normal;white-space:nowrap;letter-spacing:-0.35px">0.0</div>
<div class="a" style="left:1765px;top:649.84px;font-size:12px;line-height:12px;font-weight:normal;color:#333;font-style:normal;white-space:nowrap;letter-spacing:-0.35px">0.0</div>
<div class="a" style="left:1490px;top:678.84px;font-size:12px;line-height:12px;font-weight:normal;color:#333;font-style:normal;white-space:nowrap;letter-spacing:-0.35px">RM8 / Begin</div>
<div class="a" style="left:1563px;top:678.84px;font-size:12px;line-height:12px;font-weight:normal;color:#333;font-style:normal;white-space:nowrap;letter-spacing:-0.35px">0.0</div>
<div class="a" style="left:1599px;top:678.84px;font-size:12px;line-height:12px;font-weight:normal;color:#333;font-style:normal;white-space:nowrap;letter-spacing:-0.35px">0.0</div>
<div class="a" style="left:1635px;top:678.84px;font-size:12px;line-height:12px;font-weight:normal;color:#333;font-style:normal;white-space:nowrap;letter-spacing:-0.35px">0.0</div>
<div class="a" style="left:1671px;top:678.84px;font-size:12px;line-height:12px;font-weight:normal;color:#333;font-style:normal;white-space:nowrap;letter-spacing:-0.35px">0.0</div>
<div class="a" style="left:1718px;top:678.84px;font-size:12px;line-height:12px;font-weight:normal;color:#333;font-style:normal;white-space:nowrap;letter-spacing:-0.35px">0.0</div>
<div class="a" style="left:1765px;top:678.84px;font-size:12px;line-height:12px;font-weight:normal;color:#333;font-style:normal;white-space:nowrap;letter-spacing:-0.35px">0.0</div>
<div class="a" style="left:1490px;top:707.84px;font-size:12px;line-height:12px;font-weight:normal;color:#333;font-style:normal;white-space:nowrap;letter-spacing:-0.35px">RM9 / Begin</div>
<div class="a" style="left:1563px;top:707.84px;font-size:12px;line-height:12px;font-weight:normal;color:#333;font-style:normal;white-space:nowrap;letter-spacing:-0.35px">0.0</div>
<div class="a" style="left:1599px;top:707.84px;font-size:12px;line-height:12px;font-weight:normal;color:#333;font-style:normal;white-space:nowrap;letter-spacing:-0.35px">0.0</div>
<div class="a" style="left:1635px;top:707.84px;font-size:12px;line-height:12px;font-weight:normal;color:#333;font-style:normal;white-space:nowrap;letter-spacing:-0.35px">0.0</div>
<div class="a" style="left:1671px;top:707.84px;font-size:12px;line-height:12px;font-weight:normal;color:#333;font-style:normal;white-space:nowrap;letter-spacing:-0.35px">0.0</div>
<div class="a" style="left:1718px;top:707.84px;font-size:12px;line-height:12px;font-weight:normal;color:#333;font-style:normal;white-space:nowrap;letter-spacing:-0.35px">0.0</div>
<div class="a" style="left:1765px;top:707.84px;font-size:12px;line-height:12px;font-weight:normal;color:#333;font-style:normal;white-space:nowrap;letter-spacing:-0.35px">0.0</div>
<div id="bottom" class="a" style="background:none"><svg class="a" style="left:0;top:0" width="1920" height="29" viewBox="0 0 1920 29" shape-rendering="crispEdges"><rect width="1920" height="29" fill="#0f0f0f"/><rect x="1707" y="14" width="522" height="1" fill="rgb(36,36,36)"/><rect x="577" y="27" width="249" height="1" fill="rgb(36,36,36)"/><rect x="562" y="15" width="156" height="1" fill="rgb(34,34,34)"/><rect x="380" y="9" width="152" height="1" fill="rgb(37,37,37)"/><rect x="-29" y="25" width="465" height="1" fill="rgb(34,34,34)"/><rect x="445" y="20" width="75" height="1" fill="rgb(36,36,36)"/><rect x="43" y="2" width="96" height="1" fill="rgb(26,26,26)"/><rect x="790" y="28" width="90" height="1" fill="rgb(44,44,44)"/><rect x="1136" y="14" width="511" height="1" fill="rgb(38,38,38)"/><rect x="600" y="26" width="591" height="1" fill="rgb(27,27,27)"/><rect x="1004" y="20" width="571" height="1" fill="rgb(20,20,20)"/><rect x="148" y="21" width="528" height="1" fill="rgb(40,40,40)"/><rect x="1466" y="8" width="145" height="1" fill="rgb(42,42,42)"/><rect x="1091" y="8" width="295" height="1" fill="rgb(36,36,36)"/><rect x="-79" y="9" width="131" height="1" fill="rgb(38,38,38)"/><rect x="242" y="24" width="470" height="1" fill="rgb(23,23,23)"/><rect x="991" y="27" width="455" height="1" fill="rgb(22,22,22)"/><rect x="-198" y="0" width="278" height="1" fill="rgb(26,26,26)"/><rect x="1725" y="1" width="444" height="1" fill="rgb(42,42,42)"/><rect x="1519" y="12" width="134" height="1" fill="rgb(38,38,38)"/><rect x="613" y="20" width="336" height="1" fill="rgb(30,30,30)"/><rect x="1074" y="2" width="400" height="1" fill="rgb(20,20,20)"/><rect x="283" y="13" width="197" height="1" fill="rgb(27,27,27)"/><rect x="213" y="22" width="71" height="1" fill="rgb(21,21,21)"/><rect x="1794" y="14" width="241" height="1" fill="rgb(41,41,41)"/><rect x="571" y="17" width="518" height="1" fill="rgb(36,36,36)"/><rect x="336" y="6" width="489" height="1" fill="rgb(40,40,40)"/><rect x="277" y="12" width="464" height="1" fill="rgb(33,33,33)"/><rect x="-199" y="6" width="336" height="1" fill="rgb(38,38,38)"/><rect x="-120" y="9" width="275" height="1" fill="rgb(25,25,25)"/><rect x="210" y="12" width="103" height="1" fill="rgb(24,24,24)"/><rect x="1608" y="6" width="324" height="1" fill="rgb(20,20,20)"/><rect x="1147" y="24" width="363" height="1" fill="rgb(32,32,32)"/><rect x="104" y="2" width="152" height="1" fill="rgb(26,26,26)"/><rect x="795" y="18" width="75" height="1" fill="rgb(39,39,39)"/><rect x="1322" y="11" width="524" height="1" fill="rgb(24,24,24)"/><rect x="1781" y="18" width="198" height="1" fill="rgb(32,32,32)"/><rect x="431" y="5" width="378" height="1" fill="rgb(27,27,27)"/><rect x="821" y="26" width="254" height="1" fill="rgb(25,25,25)"/><rect x="605" y="23" width="457" height="1" fill="rgb(35,35,35)"/><rect x="121" y="19" width="491" height="1" fill="rgb(21,21,21)"/><rect x="246" y="3" width="99" height="1" fill="rgb(36,36,36)"/><rect x="776" y="8" width="461" height="1" fill="rgb(28,28,28)"/><rect x="1811" y="13" width="360" height="1" fill="rgb(36,36,36)"/><rect x="81" y="5" width="189" height="1" fill="rgb(27,27,27)"/><rect x="103" y="15" width="346" height="1" fill="rgb(26,26,26)"/><rect x="-133" y="6" width="130" height="1" fill="rgb(28,28,28)"/><rect x="1625" y="13" width="315" height="1" fill="rgb(21,21,21)"/><rect x="521" y="1" width="348" height="1" fill="rgb(31,31,31)"/><rect x="338" y="16" width="154" height="1" fill="rgb(31,31,31)"/><rect x="1644" y="4" width="398" height="1" fill="rgb(41,41,41)"/><rect x="374" y="23" width="95" height="1" fill="rgb(20,20,20)"/><rect x="1264" y="15" width="379" height="1" fill="rgb(21,21,21)"/><rect x="106" y="0" width="553" height="1" fill="rgb(22,22,22)"/><rect x="1074" y="23" width="386" height="1" fill="rgb(24,24,24)"/><rect x="108" y="2" width="523" height="1" fill="rgb(37,37,37)"/><rect x="-18" y="11" width="192" height="1" fill="rgb(30,30,30)"/><rect x="147" y="11" width="544" height="1" fill="rgb(22,22,22)"/><rect x="1508" y="27" width="90" height="1" fill="rgb(35,35,35)"/><rect x="-141" y="18" width="451" height="1" fill="rgb(32,32,32)"/><rect x="-150" y="18" width="133" height="1" fill="rgb(22,22,22)"/><rect x="273" y="2" width="323" height="1" fill="rgb(33,33,33)"/><rect x="1152" y="23" width="457" height="1" fill="rgb(43,43,43)"/><rect x="1674" y="22" width="511" height="1" fill="rgb(34,34,34)"/><rect x="143" y="26" width="591" height="1" fill="rgb(44,44,44)"/><rect x="-78" y="16" width="377" height="1" fill="rgb(39,39,39)"/><rect x="1769" y="2" width="82" height="1" fill="rgb(27,27,27)"/><rect x="262" y="22" width="569" height="1" fill="rgb(44,44,44)"/><rect x="1791" y="19" width="321" height="1" fill="rgb(20,20,20)"/><rect x="1033" y="11" width="206" height="1" fill="rgb(41,41,41)"/><rect x="629" y="19" width="590" height="1" fill="rgb(25,25,25)"/><rect x="1202" y="24" width="512" height="1" fill="rgb(35,35,35)"/><rect x="789" y="28" width="394" height="1" fill="rgb(32,32,32)"/><rect x="826" y="21" width="263" height="1" fill="rgb(40,40,40)"/><rect x="620" y="13" width="279" height="1" fill="rgb(32,32,32)"/><rect x="1096" y="7" width="274" height="1" fill="rgb(24,24,24)"/><rect x="1833" y="4" width="419" height="1" fill="rgb(21,21,21)"/><rect x="62" y="22" width="343" height="1" fill="rgb(25,25,25)"/><rect x="1645" y="3" width="542" height="1" fill="rgb(28,28,28)"/><rect x="1495" y="6" width="451" height="1" fill="rgb(40,40,40)"/><rect x="1822" y="16" width="382" height="1" fill="rgb(42,42,42)"/><rect x="1653" y="26" width="388" height="1" fill="rgb(22,22,22)"/><rect x="-72" y="26" width="344" height="1" fill="rgb(39,39,39)"/><rect x="951" y="1" width="422" height="1" fill="rgb(29,29,29)"/><rect x="-122" y="20" width="199" height="1" fill="rgb(32,32,32)"/><rect x="577" y="14" width="85" height="1" fill="rgb(44,44,44)"/><rect x="891" y="26" width="303" height="1" fill="rgb(44,44,44)"/><rect x="-8" y="4" width="178" height="1" fill="rgb(34,34,34)"/><rect x="1310" y="3" width="139" height="1" fill="rgb(41,41,41)"/><rect x="616" y="6" width="546" height="1" fill="rgb(28,28,28)"/><rect x="-156" y="5" width="543" height="1" fill="rgb(37,37,37)"/><rect x="-52" y="22" width="243" height="1" fill="rgb(27,27,27)"/><rect x="1216" y="8" width="592" height="1" fill="rgb(36,36,36)"/><rect x="452" y="19" width="462" height="1" fill="rgb(42,42,42)"/><rect x="717" y="28" width="149" height="1" fill="rgb(33,33,33)"/><rect x="1389" y="28" width="193" height="1" fill="rgb(34,34,34)"/><rect x="606" y="14" width="66" height="1" fill="rgb(32,32,32)"/><rect x="1858" y="17" width="411" height="1" fill="rgb(34,34,34)"/><rect x="639" y="10" width="161" height="1" fill="rgb(43,43,43)"/><rect x="305" y="27" width="278" height="1" fill="rgb(27,27,27)"/><rect x="1398" y="28" width="149" height="1" fill="rgb(29,29,29)"/><rect x="1112" y="17" width="328" height="1" fill="rgb(42,42,42)"/><rect x="-136" y="27" width="416" height="1" fill="rgb(36,36,36)"/><rect x="-48" y="2" width="511" height="1" fill="rgb(30,30,30)"/><rect x="1526" y="17" width="341" height="1" fill="rgb(35,35,35)"/><rect x="694" y="0" width="125" height="1" fill="rgb(33,33,33)"/><rect x="-57" y="25" width="237" height="1" fill="rgb(37,37,37)"/><rect x="375" y="10" width="541" height="1" fill="rgb(24,24,24)"/><rect x="1602" y="16" width="564" height="1" fill="rgb(38,38,38)"/><rect x="152" y="22" width="286" height="1" fill="rgb(34,34,34)"/><rect x="988" y="16" width="228" height="1" fill="rgb(36,36,36)"/><rect x="850" y="16" width="379" height="1" fill="rgb(41,41,41)"/><rect x="652" y="12" width="371" height="1" fill="rgb(24,24,24)"/><rect x="918" y="17" width="569" height="1" fill="rgb(26,26,26)"/><rect x="268" y="13" width="575" height="1" fill="rgb(20,20,20)"/><rect x="1344" y="19" width="88" height="1" fill="rgb(37,37,37)"/><rect x="1913" y="1" width="470" height="1" fill="rgb(37,37,37)"/><rect x="299" y="25" width="562" height="1" fill="rgb(22,22,22)"/><rect x="483" y="22" width="127" height="1" fill="rgb(37,37,37)"/><rect x="1494" y="14" width="473" height="1" fill="rgb(28,28,28)"/><rect x="1738" y="7" width="564" height="1" fill="rgb(24,24,24)"/><rect x="1576" y="10" width="547" height="1" fill="rgb(36,36,36)"/><rect x="244" y="10" width="256" height="1" fill="rgb(33,33,33)"/><rect x="-80" y="19" width="326" height="1" fill="rgb(24,24,24)"/><rect x="-107" y="22" width="96" height="1" fill="rgb(26,26,26)"/><rect x="730" y="4" width="72" height="1" fill="rgb(41,41,41)"/><rect x="1119" y="9" width="423" height="1" fill="rgb(27,27,27)"/><rect x="1843" y="19" width="167" height="1" fill="rgb(35,35,35)"/><rect x="302" y="23" width="582" height="1" fill="rgb(39,39,39)"/><rect x="609" y="8" width="507" height="1" fill="rgb(20,20,20)"/><rect x="1493" y="12" width="223" height="1" fill="rgb(37,37,37)"/><rect x="694" y="6" width="281" height="1" fill="rgb(37,37,37)"/><rect x="358" y="19" width="298" height="1" fill="rgb(43,43,43)"/><rect x="1223" y="20" width="245" height="1" fill="rgb(30,30,30)"/><rect x="1090" y="19" width="259" height="1" fill="rgb(26,26,26)"/><rect x="596" y="24" width="159" height="1" fill="rgb(24,24,24)"/><rect x="780" y="28" width="195" height="1" fill="rgb(43,43,43)"/><rect x="862" y="2" width="457" height="1" fill="rgb(23,23,23)"/><rect x="1526" y="13" width="189" height="1" fill="rgb(26,26,26)"/><rect x="-128" y="12" width="158" height="1" fill="rgb(26,26,26)"/><rect x="1264" y="18" width="429" height="1" fill="rgb(23,23,23)"/><rect x="1871" y="22" width="411" height="1" fill="rgb(36,36,36)"/><rect x="574" y="21" width="132" height="1" fill="rgb(35,35,35)"/><rect x="-101" y="3" width="98" height="1" fill="rgb(44,44,44)"/><rect x="1908" y="17" width="552" height="1" fill="rgb(24,24,24)"/><rect x="555" y="6" width="177" height="1" fill="rgb(26,26,26)"/><rect x="447" y="5" width="349" height="1" fill="rgb(41,41,41)"/><rect x="53" y="3" width="197" height="1" fill="rgb(41,41,41)"/><rect x="117" y="14" width="159" height="1" fill="rgb(30,30,30)"/><rect x="1712" y="12" width="496" height="1" fill="rgb(36,36,36)"/><rect x="1561" y="11" width="275" height="1" fill="rgb(39,39,39)"/><rect x="-146" y="11" width="101" height="1" fill="rgb(26,26,26)"/><rect x="1470" y="5" width="524" height="1" fill="rgb(31,31,31)"/><rect x="1316" y="23" width="475" height="1" fill="rgb(26,26,26)"/><rect x="476" y="19" width="157" height="1" fill="rgb(36,36,36)"/><rect x="-137" y="25" width="391" height="1" fill="rgb(22,22,22)"/><rect x="1456" y="25" width="255" height="1" fill="rgb(36,36,36)"/><rect x="1196" y="18" width="324" height="1" fill="rgb(28,28,28)"/><rect x="455" y="3" width="475" height="1" fill="rgb(24,24,24)"/><rect x="1151" y="28" width="438" height="1" fill="rgb(44,44,44)"/><rect x="543" y="13" width="475" height="1" fill="rgb(26,26,26)"/><rect x="557" y="23" width="132" height="1" fill="rgb(30,30,30)"/><rect x="1720" y="9" width="163" height="1" fill="rgb(20,20,20)"/><rect x="1256" y="28" width="110" height="1" fill="rgb(27,27,27)"/><rect x="1024" y="8" width="405" height="1" fill="rgb(26,26,26)"/><rect x="1463" y="21" width="246" height="1" fill="rgb(37,37,37)"/><rect x="1395" y="2" width="587" height="1" fill="rgb(35,35,35)"/><rect x="673" y="20" width="182" height="1" fill="rgb(44,44,44)"/><rect x="-107" y="12" width="177" height="1" fill="rgb(39,39,39)"/><rect x="770" y="3" width="322" height="1" fill="rgb(34,34,34)"/><rect x="1867" y="12" width="111" height="1" fill="rgb(44,44,44)"/><rect x="1338" y="6" width="71" height="1" fill="rgb(23,23,23)"/><rect x="827" y="8" width="342" height="1" fill="rgb(30,30,30)"/><rect x="1880" y="17" width="485" height="1" fill="rgb(36,36,36)"/><rect x="208" y="18" width="515" height="1" fill="rgb(40,40,40)"/><rect x="-16" y="2" width="455" height="1" fill="rgb(25,25,25)"/><rect x="1732" y="12" width="233" height="1" fill="rgb(35,35,35)"/><rect x="39" y="17" width="499" height="1" fill="rgb(35,35,35)"/><rect x="965" y="13" width="599" height="1" fill="rgb(32,32,32)"/><rect x="1079" y="19" width="434" height="1" fill="rgb(36,36,36)"/><rect x="1779" y="9" width="336" height="1" fill="rgb(37,37,37)"/><rect x="1012" y="9" width="87" height="1" fill="rgb(20,20,20)"/><rect x="803" y="24" width="103" height="1" fill="rgb(40,40,40)"/><rect x="1474" y="5" width="459" height="1" fill="rgb(21,21,21)"/><rect x="1090" y="28" width="467" height="1" fill="rgb(21,21,21)"/><rect x="1107" y="18" width="135" height="1" fill="rgb(27,27,27)"/><rect x="1756" y="13" width="316" height="1" fill="rgb(44,44,44)"/><rect x="-14" y="7" width="595" height="1" fill="rgb(23,23,23)"/><rect x="1718" y="25" width="207" height="1" fill="rgb(27,27,27)"/><rect x="271" y="19" width="111" height="1" fill="rgb(39,39,39)"/><rect x="1666" y="13" width="180" height="1" fill="rgb(26,26,26)"/><rect x="13" y="27" width="425" height="1" fill="rgb(36,36,36)"/><rect x="309" y="4" width="432" height="1" fill="rgb(34,34,34)"/><rect x="1507" y="4" width="526" height="1" fill="rgb(39,39,39)"/><rect x="1518" y="8" width="432" height="1" fill="rgb(44,44,44)"/><rect x="361" y="23" width="357" height="1" fill="rgb(43,43,43)"/><rect x="776" y="4" width="552" height="1" fill="rgb(23,23,23)"/><rect x="1064" y="16" width="579" height="1" fill="rgb(39,39,39)"/><rect x="1271" y="27" width="341" height="1" fill="rgb(28,28,28)"/><rect x="578" y="19" width="345" height="1" fill="rgb(44,44,44)"/><rect x="577" y="7" width="314" height="1" fill="rgb(36,36,36)"/><rect x="602" y="20" width="100" height="1" fill="rgb(40,40,40)"/><rect x="-162" y="1" width="337" height="1" fill="rgb(28,28,28)"/><rect x="-90" y="13" width="98" height="1" fill="rgb(23,23,23)"/><rect x="939" y="7" width="134" height="1" fill="rgb(44,44,44)"/><rect x="458" y="2" width="300" height="1" fill="rgb(40,40,40)"/><rect x="1782" y="11" width="550" height="1" fill="rgb(31,31,31)"/><rect x="1185" y="6" width="411" height="1" fill="rgb(35,35,35)"/><rect x="346" y="23" width="136" height="1" fill="rgb(23,23,23)"/><rect x="673" y="14" width="515" height="1" fill="rgb(33,33,33)"/><rect x="857" y="23" width="459" height="1" fill="rgb(24,24,24)"/><rect x="428" y="11" width="393" height="1" fill="rgb(29,29,29)"/><rect x="553" y="17" width="497" height="1" fill="rgb(40,40,40)"/><rect x="197" y="11" width="533" height="1" fill="rgb(30,30,30)"/><rect x="140" y="2" width="502" height="1" fill="rgb(38,38,38)"/><rect x="1785" y="18" width="534" height="1" fill="rgb(29,29,29)"/><rect x="-162" y="26" width="137" height="1" fill="rgb(29,29,29)"/><rect x="134" y="6" width="371" height="1" fill="rgb(35,35,35)"/><rect x="1143" y="23" width="349" height="1" fill="rgb(24,24,24)"/><rect x="1265" y="7" width="394" height="1" fill="rgb(31,31,31)"/><rect x="1120" y="3" width="511" height="1" fill="rgb(38,38,38)"/><rect x="943" y="19" width="508" height="1" fill="rgb(36,36,36)"/><rect x="1048" y="25" width="529" height="1" fill="rgb(30,30,30)"/><rect x="1436" y="7" width="588" height="1" fill="rgb(27,27,27)"/><rect x="1281" y="2" width="434" height="1" fill="rgb(20,20,20)"/><rect x="1420" y="11" width="456" height="1" fill="rgb(26,26,26)"/><rect x="1308" y="23" width="459" height="1" fill="rgb(37,37,37)"/><rect x="526" y="4" width="240" height="1" fill="rgb(22,22,22)"/><rect x="1661" y="24" width="348" height="1" fill="rgb(20,20,20)"/><rect x="1912" y="7" width="119" height="1" fill="rgb(37,37,37)"/><rect x="1011" y="5" width="82" height="1" fill="rgb(40,40,40)"/><rect x="1531" y="26" width="125" height="1" fill="rgb(38,38,38)"/><rect x="1051" y="17" width="146" height="1" fill="rgb(30,30,30)"/><rect x="920" y="2" width="167" height="1" fill="rgb(30,30,30)"/><rect x="-94" y="2" width="207" height="1" fill="rgb(23,23,23)"/><rect x="1528" y="23" width="311" height="1" fill="rgb(42,42,42)"/><rect x="1802" y="7" width="594" height="1" fill="rgb(30,30,30)"/><rect x="1680" y="24" width="463" height="1" fill="rgb(31,31,31)"/><rect x="1163" y="10" width="199" height="1" fill="rgb(35,35,35)"/><rect x="96" y="15" width="107" height="1" fill="rgb(33,33,33)"/><rect x="1230" y="24" width="63" height="1" fill="rgb(32,32,32)"/><rect x="165" y="26" width="535" height="1" fill="rgb(37,37,37)"/><rect x="-101" y="20" width="596" height="1" fill="rgb(31,31,31)"/><rect x="-159" y="22" width="172" height="1" fill="rgb(33,33,33)"/><rect x="398" y="13" width="311" height="1" fill="rgb(43,43,43)"/><rect x="1338" y="5" width="231" height="1" fill="rgb(30,30,30)"/><rect x="1394" y="6" width="495" height="1" fill="rgb(36,36,36)"/><rect x="922" y="9" width="120" height="1" fill="rgb(35,35,35)"/><rect x="270" y="9" width="370" height="1" fill="rgb(40,40,40)"/><rect x="534" y="4" width="123" height="1" fill="rgb(44,44,44)"/><rect x="-130" y="14" width="552" height="1" fill="rgb(21,21,21)"/><rect x="245" y="10" width="262" height="1" fill="rgb(25,25,25)"/><rect x="690" y="11" width="301" height="1" fill="rgb(39,39,39)"/><rect x="1732" y="22" width="580" height="1" fill="rgb(27,27,27)"/><rect x="557" y="14" width="347" height="1" fill="rgb(32,32,32)"/><rect x="1076" y="5" width="550" height="1" fill="rgb(28,28,28)"/><rect x="1449" y="15" width="410" height="1" fill="rgb(41,41,41)"/><rect x="178" y="17" width="554" height="1" fill="rgb(27,27,27)"/><rect x="3" y="12" width="282" height="1" fill="rgb(24,24,24)"/><rect x="1376" y="25" width="600" height="1" fill="rgb(36,36,36)"/><rect x="924" y="24" width="119" height="1" fill="rgb(41,41,41)"/><rect x="-156" y="7" width="543" height="1" fill="rgb(31,31,31)"/><rect x="809" y="14" width="491" height="1" fill="rgb(39,39,39)"/><rect x="444" y="27" width="485" height="1" fill="rgb(25,25,25)"/><rect x="1118" y="24" width="208" height="1" fill="rgb(28,28,28)"/><rect x="1914" y="27" width="194" height="1" fill="rgb(40,40,40)"/><rect x="891" y="23" width="588" height="1" fill="rgb(37,37,37)"/><rect x="417" y="1" width="242" height="1" fill="rgb(20,20,20)"/><rect x="410" y="6" width="191" height="1" fill="rgb(22,22,22)"/><rect x="905" y="11" width="600" height="1" fill="rgb(23,23,23)"/><rect x="1766" y="28" width="539" height="1" fill="rgb(22,22,22)"/><rect x="1872" y="23" width="370" height="1" fill="rgb(20,20,20)"/><rect x="569" y="25" width="486" height="1" fill="rgb(26,26,26)"/><rect x="172" y="21" width="510" height="1" fill="rgb(26,26,26)"/><rect x="1492" y="1" width="598" height="1" fill="rgb(35,35,35)"/><rect x="1075" y="5" width="383" height="1" fill="rgb(29,29,29)"/><rect x="111" y="12" width="373" height="1" fill="rgb(34,34,34)"/><rect x="74" y="21" width="428" height="1" fill="rgb(22,22,22)"/><rect x="375" y="21" width="168" height="1" fill="rgb(41,41,41)"/><rect x="1691" y="12" width="184" height="1" fill="rgb(40,40,40)"/><rect x="-150" y="14" width="446" height="1" fill="rgb(42,42,42)"/><rect x="1746" y="22" width="303" height="1" fill="rgb(29,29,29)"/><rect x="264" y="18" width="529" height="1" fill="rgb(44,44,44)"/><rect x="646" y="0" width="215" height="1" fill="rgb(29,29,29)"/><rect x="1340" y="20" width="365" height="1" fill="rgb(30,30,30)"/><rect x="1406" y="24" width="149" height="1" fill="rgb(28,28,28)"/><rect x="618" y="6" width="445" height="1" fill="rgb(43,43,43)"/><rect x="1149" y="3" width="377" height="1" fill="rgb(28,28,28)"/><rect x="1724" y="18" width="399" height="1" fill="rgb(34,34,34)"/><rect x="1366" y="26" width="154" height="1" fill="rgb(23,23,23)"/><rect x="186" y="4" width="194" height="1" fill="rgb(41,41,41)"/><rect x="534" y="20" width="244" height="1" fill="rgb(26,26,26)"/><rect x="-51" y="12" width="534" height="1" fill="rgb(38,38,38)"/><rect x="169" y="22" width="162" height="1" fill="rgb(27,27,27)"/><rect x="443" y="1" width="187" height="1" fill="rgb(33,33,33)"/><rect x="97" y="13" width="409" height="1" fill="rgb(33,33,33)"/><rect x="369" y="16" width="270" height="1" fill="rgb(44,44,44)"/><rect x="1380" y="4" width="554" height="1" fill="rgb(30,30,30)"/><rect x="-137" y="13" width="470" height="1" fill="rgb(39,39,39)"/><rect x="1101" y="22" width="310" height="1" fill="rgb(41,41,41)"/></svg></div>
</body></html>
